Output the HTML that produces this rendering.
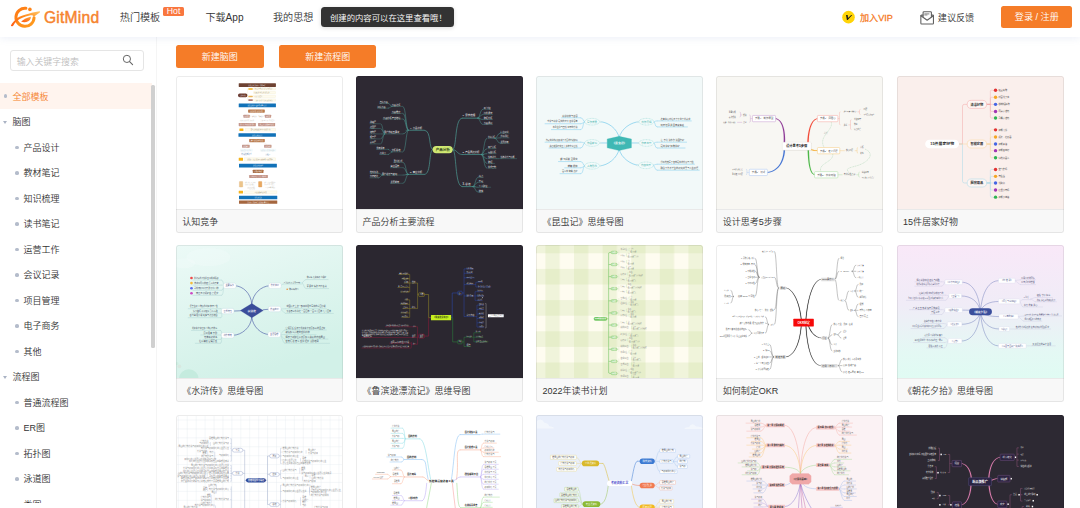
<!DOCTYPE html>
<html lang="zh-CN">
<head>
<meta charset="utf-8">
<title>GitMind 热门模板</title>
<style>
*{box-sizing:border-box;margin:0;padding:0}
html,body{width:1080px;height:508px;overflow:hidden;background:#fff}
body{font-family:"Liberation Sans","Noto Sans CJK SC",sans-serif;font-weight:350;color:#333;position:relative;-webkit-font-smoothing:antialiased}
.abs{position:absolute}
/* header */
#hdr{position:absolute;left:0;top:0;width:1080px;height:37px;background:#fff;box-shadow:0 2px 7px rgba(110,140,200,.115);z-index:10}
#hdr .t{position:absolute;white-space:nowrap;line-height:1}
.nav{font-size:10.1px;color:#333;top:13.0px}
#brand{left:43.9px;top:9.9px;font-size:15.6px;letter-spacing:.25px;color:#f6842e;font-weight:normal;-webkit-text-stroke:.45px #f6842e;}
#hot{position:absolute;left:163.4px;top:6.9px;width:20.4px;height:9.4px;background:#f9773f;border-radius:1.5px;color:#fff;font-size:8.7px;line-height:9.3px;text-align:center}
#tip{position:absolute;left:321.2px;top:6.9px;width:132.6px;height:20px;background:#333;border-radius:3.5px;color:#fff;font-size:8.35px;line-height:23px;padding-left:8.8px;white-space:nowrap;box-shadow:0 1px 4px rgba(0,0,0,.15)}
#login{position:absolute;left:1001.2px;top:5.6px;width:71.3px;height:22.5px;background:#f57c28;border-radius:2.5px;color:#fff;font-size:9.1px;line-height:23.7px;text-align:center;white-space:nowrap}
/* sidebar */
#side{position:absolute;left:0;top:37px;width:156.5px;height:471px;background:#fff;border-right:1px solid #f5f5f5}
#search{position:absolute;left:10.2px;top:50.2px;width:134px;height:20.6px;border:1px solid #e5e5e5;border-radius:3px;background:#fff}
#search span{position:absolute;left:5.5px;top:1.4px;line-height:18.5px;font-size:8.9px;color:#bdbdbd;white-space:nowrap}
#list{position:absolute;left:0;top:82.8px;width:151.6px;height:420.4px;overflow:hidden}
#list .it{position:relative;height:25.5px;line-height:27.3px;font-size:9px;color:#333;white-space:nowrap}
#list .it.c1{padding-left:12.6px}
#list .it.c2{padding-left:23.6px}
#list .it.on{background:#fff4ee;color:#f5822c;height:26.4px;line-height:28.2px}
#list .it.on i{top:11.6px}
#list .it i{position:absolute;top:11.1px;width:3.7px;height:3.7px;border-radius:50%;background:#b4bccb}
#list .it.c1 i{left:3.5px}
#list .it.c2 i{left:15.3px}
#list .it b{position:absolute;left:2.9px;top:11.4px;width:0;height:0;border-left:2.5px solid transparent;border-right:2.5px solid transparent;border-top:3px solid #aab3c4}
#sb{position:absolute;left:151.2px;top:85px;width:3.5px;height:263px;background:#d0d0d0;border-radius:1.5px}
/* main */
.btn{position:absolute;top:45.3px;height:22.5px;background:#f57c28;border-radius:2.5px;color:#fff;font-size:9px;line-height:24.6px;text-align:center;white-space:nowrap}
.card{position:absolute;width:167px;height:157px;border-radius:2.5px;background:#f8f8f8;overflow:hidden}
.card:after{content:"";position:absolute;left:0;top:0;right:0;bottom:0;border:1px solid rgba(0,0,0,.075);border-radius:2.5px;pointer-events:none}
.card .im{position:absolute;left:0;top:0;width:167px;height:133px;overflow:hidden}
.card .im svg{position:absolute;left:0;top:0;width:167px;height:133px;display:block}
.card .cap{position:absolute;left:0;top:133px;width:167px;height:24px;border-top:1px solid #e9e9e9;background:#f8f8f8;font-size:9px;line-height:24px;padding-left:6.3px;color:#333;white-space:nowrap}
</style>
</head>
<body>
<div id="hdr">
  <svg class="abs" id="logo" style="left:10px;top:5px" width="31" height="24" viewBox="0 -1.1 31 24"><defs><linearGradient id="lg1" x1="0" y1="1" x2="1" y2="0"><stop offset="0" stop-color="#ff5a12"/><stop offset=".55" stop-color="#ff8a1c"/><stop offset="1" stop-color="#ffc668"/></linearGradient><linearGradient id="lg2" x1="0" y1="0" x2="1" y2="1"><stop offset="0" stop-color="#ff7a14"/><stop offset="1" stop-color="#ff9c1e"/></linearGradient><linearGradient id="lg3" x1="0" y1="1" x2="1" y2="0"><stop offset="0" stop-color="#ff5c14"/><stop offset="1" stop-color="#ffa436"/></linearGradient></defs><path d="M15.9 2.2 A9.05 9.05 0 1 0 24.05 11.6" fill="none" stroke="url(#lg2)" stroke-width="3" stroke-linecap="round"/><path d="M0.9 19.4 C2 17 5 13.5 7.8 11.6 C12 9.3 18 7.4 29.4 5.2 C30.4 5.3 30.2 6 29.8 6.3 C27.5 7.8 25.5 9.4 23.8 10.6 C23 9.2 21.5 9 19.6 9.4 C14 10.8 10 12.5 7.8 14.2 C6 15.6 4.5 17.5 3.7 18.9 C3 20.4 1 20.6 0.9 19.4Z" fill="url(#lg1)"/><path d="M11.1 15.5 C13.6 13.2 17.4 11.4 20.9 10.7 C20.7 12.6 19.8 14.3 18.2 15.2 C16 16.3 13.2 16.3 11.1 15.5Z" fill="url(#lg3)"/><circle cx="19.9" cy="3.3" r="1.8" fill="#ff8418"/></svg>
  <div class="t" id="brand">GitMind</div>
  <div class="t nav" style="left:119.8px">热门模板</div>
  <div id="hot">Hot</div>
  <div class="t nav" style="left:205.4px">下载App</div>
  <div class="t nav" style="left:273px">我的思想</div>
  <div id="tip">创建的内容可以在这里查看哦！</div>
  <svg class="abs" id="vip" style="left:841px;top:10px" width="15" height="14" viewBox="0 0 15 14"><circle cx="7.5" cy="7.15" r="6.3" fill="#ffd407"/><path d="M5 4.9 L6.7 4.9 L7 8 L10.2 4.9 L11.2 4.9 L6.7 10.1 L5.9 10.1 Z" fill="#1a1a1a"/></svg>
  <div class="t" style="left:860px;top:13.6px;font-size:9.1px;color:#f57a24;-webkit-text-stroke:.28px #f57a24">加入VIP</div>
  <svg class="abs" id="mail" style="left:919.5px;top:10.5px" width="14.5" height="14" viewBox="0 0 14.5 14"><g fill="none" stroke="#606060" stroke-width="1.08" stroke-linejoin="round" stroke-linecap="round"><path d="M3.1 5.6 V1.6 Q3.1 .75 4 .75 H10.5 Q11.4 .75 11.4 1.6 V5.6"/><path d="M3 4.1 H1.5 Q.85 4.1 .85 4.8 V12.2 Q.85 12.95 1.6 12.95 H12.7 Q13.45 12.95 13.45 12.2 V4.8 Q13.45 4.1 12.8 4.1 H11.5"/><path d="M.9 4.7 L7.15 9.2 L13.4 4.7"/><path d="M4.7 2.9 H9" stroke-width=".8"/><path d="M4.7 4 H7" stroke-width=".7"/></g></svg>
  <div class="t" style="left:937.8px;top:13.6px;font-size:9.1px;color:#333">建议反馈</div>
  <div id="login">登录 / 注册</div>
</div>

<div id="side"></div>
<div id="search"><span>输入关键字搜索</span>
  <svg class="abs" style="left:110.8px;top:3.3px" width="12" height="12" viewBox="0 0 12 12"><circle cx="4.9" cy="4.9" r="3.6" fill="none" stroke="#666" stroke-width="1"/><path d="M7.6 7.6 L10.6 10.6" stroke="#666" stroke-width="1.1" stroke-linecap="round"/></svg>
</div>
<div id="list">
  <div class="it c1 on"><i></i>全部模板</div>
  <div class="it c1"><b></b>脑图</div>
  <div class="it c2"><i></i>产品设计</div>
  <div class="it c2"><i></i>教材笔记</div>
  <div class="it c2"><i></i>知识梳理</div>
  <div class="it c2"><i></i>读书笔记</div>
  <div class="it c2"><i></i>运营工作</div>
  <div class="it c2"><i></i>会议记录</div>
  <div class="it c2"><i></i>项目管理</div>
  <div class="it c2"><i></i>电子商务</div>
  <div class="it c2"><i></i>其他</div>
  <div class="it c1"><b></b>流程图</div>
  <div class="it c2"><i></i>普通流程图</div>
  <div class="it c2"><i></i>ER图</div>
  <div class="it c2"><i></i>拓扑图</div>
  <div class="it c2"><i></i>泳道图</div>
  <div class="it c2"><i></i>类图</div>
</div>
<div id="sb"></div>

<div class="btn" style="left:175.8px;width:87.8px">新建脑图</div>
<div class="btn" style="left:279.2px;width:97.3px">新建流程图</div>

<div class="card" style="left:176.00px;top:76.00px"><div class="im"><svg viewBox="-1 -1 167 133" font-family='"Liberation Sans","Noto Sans CJK SC",sans-serif'><rect x="-1" y="-1" width="167" height="133" fill="#ffffff"/><rect x="61.73" y="6.36" width="37.19" height="3.61" fill="#6e4232" rx="0.4"/><text x="79.99" y="8.66" font-size="1.4" fill="#ffffff" text-anchor="middle">认知竞争 发现自己 超越对手</text><rect x="61.06" y="16.39" width="9.36" height="3.75" fill="#6b3a2e" rx="1.61"/><text x="65.74" y="18.79" font-size="1.47" fill="#ffffff" text-anchor="middle">竞争层次</text><path d="M71.36 11.84L70.69 11.84L70.69 23.08L71.36 23.08" stroke="#f0e8c4" stroke-width="0.35" fill="none" stroke-linejoin="round"/><rect x="76.44" y="10.77" width="22.07" height="2.14" fill="#fefbee" rx="0.27" stroke="#f0e8c4" stroke-width="0.25"/><rect x="71.36" y="11.17" width="4.41" height="1.47" fill="#f5b31c" rx="0.27"/><rect x="76.44" y="14.52" width="22.07" height="2.14" fill="#fefbee" rx="0.27" stroke="#f0e8c4" stroke-width="0.25"/><rect x="76.44" y="18.26" width="22.07" height="2.14" fill="#fefbee" rx="0.27" stroke="#f0e8c4" stroke-width="0.25"/><rect x="71.36" y="18.67" width="4.41" height="1.47" fill="#ecb757" rx="0.27"/><rect x="76.44" y="21.88" width="22.07" height="2.27" fill="#fefbee" rx="0.27" stroke="#f0e8c4" stroke-width="0.25"/><rect x="71.36" y="22.28" width="4.41" height="1.61" fill="#b27a72" rx="0.27"/><text x="77.25" y="12.23" font-size="1.09" fill="#8a7a5a">产品竞争 价格竞争 渠道竞争 品牌竞争</text><text x="77.25" y="16.03" font-size="1.21" fill="#8a7a5a">资源竞争 标准竞争 认知竞争</text><text x="77.25" y="19.8" font-size="1.3" fill="#a09070">心智之战 定位</text><text x="78.05" y="23.55" font-size="1.31" fill="#a09a8a">占据心智 成为首选 形成护城河</text><rect x="61.73" y="26.42" width="37.19" height="3.75" fill="#1272b8" rx="0.27"/><text x="80.12" y="28.8" font-size="1.39" fill="#ffffff" text-anchor="middle">认知竞争的一般规律与基本方法</text><rect x="71.09" y="32.44" width="16.72" height="3.34" fill="#b97c50" rx="0.67"/><text x="79.59" y="34.67" font-size="1.52" fill="#ffffff" text-anchor="middle">认知优势 认知劣势</text><rect x="66.41" y="37.8" width="6.29" height="2.94" fill="#c4968a" rx="0.4"/><rect x="87.82" y="37.8" width="6.29" height="2.94" fill="#c4968a" rx="0.4"/><text x="69.62" y="39.78" font-size="1.43" fill="#ffffff" text-anchor="middle">有优势</text><text x="91.03" y="39.78" font-size="1.43" fill="#ffffff" text-anchor="middle">无优势</text><text x="80.46" y="39.69" font-size="1.16" fill="#9a8a80" text-anchor="middle">强化认知 → 重建认知</text><path d="M72.7 39.27L74.57 39.27" stroke="#d8c8c0" stroke-width="0.3" fill="none"/><path d="M86.08 39.27L87.82 39.27" stroke="#d8c8c0" stroke-width="0.3" fill="none"/><text x="62.8" y="43.82" font-size="1.51" fill="#c8c4b8">占据 品类代表 领导者</text><text x="83.13" y="43.84" font-size="1.56" fill="#c8c4b8">关联 对立面 重新定位</text><rect x="61.73" y="46.09" width="17.12" height="3.08" fill="#c4968a" rx="0.4"/><rect x="81.13" y="46.09" width="16.99" height="3.08" fill="#c4968a" rx="0.4"/><text x="70.42" y="48.13" font-size="1.39" fill="#ffffff" text-anchor="middle">第一步 找到认知优势位</text><text x="89.76" y="48.18" font-size="1.53" fill="#ffffff" text-anchor="middle">第二步 持续强化认知</text><rect x="62.4" y="51.44" width="4.01" height="2.68" fill="#f5b31c" rx="0.27"/><rect x="68.15" y="51.44" width="30.37" height="2.68" fill="#fefbee" rx="0.27" stroke="#f0e8c4" stroke-width="0.25"/><text x="83.47" y="53.22" font-size="1.21" fill="#7a6a4a" text-anchor="middle">商业竞争的终极战场是心智认知之战</text><rect x="61.46" y="56.26" width="37.46" height="3.61" fill="#1272b8" rx="0.27"/><text x="80.32" y="58.6" font-size="1.49" fill="#ffffff" text-anchor="middle">认知竞争的方法</text><rect x="72.16" y="61.88" width="15.65" height="3.34" fill="#b97c50" rx="0.67"/><text x="80.12" y="64.08" font-size="1.48" fill="#ffffff" text-anchor="middle">建立认知 强化认知</text><path d="M73.5 65.41C71.76 65.94 70.42 66.75 69.76 67.82" stroke="#e8ddd4" stroke-width="0.3" fill="none" stroke-linecap="round"/><path d="M86.08 65.41C87.82 65.94 89.15 66.75 90.09 67.82" stroke="#e8ddd4" stroke-width="0.3" fill="none" stroke-linecap="round"/><rect x="65.07" y="67.68" width="7.63" height="3.08" fill="#c4968a" rx="0.4"/><rect x="87.15" y="67.68" width="7.36" height="3.08" fill="#c4968a" rx="0.4"/><text x="68.95" y="69.73" font-size="1.41" fill="#ffffff" text-anchor="middle">认知建立</text><text x="90.89" y="69.7" font-size="1.34" fill="#ffffff" text-anchor="middle">认知强化</text><rect x="63.07" y="71.83" width="12.71" height="2.68" fill="#f3fafb" rx="0.27"/><rect x="83.13" y="71.83" width="16.05" height="2.68" fill="#f3fafb" rx="0.27"/><text x="63.87" y="73.67" font-size="1.38" fill="#c0cdd4">品类 定位 信任状</text><text x="83.94" y="73.68" font-size="1.43" fill="#c0cdd4">品牌故事 传播 视觉锤</text><text x="64.14" y="76.84" font-size="1.28" fill="#5a7fae">抢占先机 聚焦品类</text><text x="64.14" y="78.34" font-size="1.37" fill="#7a96ba">打造爆品 代言</text><text x="88.48" y="77.61" font-size="1.21" fill="#5a7fae">持续投入</text><rect x="61.73" y="80.79" width="4.28" height="2.94" fill="#f5b31c" rx="0.27"/><rect x="67.08" y="80.79" width="31.44" height="2.94" fill="#fefbee" rx="0.27" stroke="#f0e8c4" stroke-width="0.25"/><text x="83.0" y="82.73" font-size="1.32" fill="#7a6a4a" text-anchor="middle">认知大于事实 消费者以品类思考 以品牌表达</text><rect x="62.0" y="86.68" width="37.86" height="3.75" fill="#1272b8" rx="0.27"/><text x="80.99" y="89.07" font-size="1.45" fill="#ffffff" text-anchor="middle">认知竞争的案例</text><rect x="75.78" y="92.83" width="10.7" height="3.08" fill="#a86c44" rx="0.4"/><text x="81.19" y="94.86" font-size="1.36" fill="#ffffff" text-anchor="middle">经典案例解析</text><rect x="72.16" y="98.05" width="18.73" height="2.94" fill="#c4968a" rx="0.4"/><text x="81.53" y="99.98" font-size="1.26" fill="#ffffff" text-anchor="middle">王老吉 瓜子二手车 飞鹤奶粉</text><rect x="62.4" y="104.47" width="3.34" height="5.62" fill="#ecc48a" rx="0.4" stroke="#dcae6c" stroke-width="0.3"/><rect x="81.53" y="104.47" width="3.34" height="5.62" fill="#e8a860" rx="0.4" stroke="#d89850" stroke-width="0.3"/><text x="67.88" y="106.46" font-size="1.06" fill="#b0aca0">案例一 怕上火喝王老吉</text><text x="67.88" y="108.11" font-size="1.55" fill="#c8c4b8">品类开创 聚焦</text><text x="87.15" y="106.45" font-size="1.02" fill="#b0aca0">案例二 没有中间商赚差价</text><text x="87.15" y="108.06" font-size="1.42" fill="#c8c4b8">差异化 直击痛点</text><text x="70.42" y="111.58" font-size="1.91" fill="#c8c4b8">持续传播</text><text x="88.48" y="111.44" font-size="1.53" fill="#c8c4b8">心智预售 高频</text><rect x="61.73" y="113.84" width="4.28" height="2.68" fill="#f5b31c" rx="0.27"/><rect x="67.08" y="113.84" width="32.78" height="2.68" fill="#fefbee" rx="0.27" stroke="#f0e8c4" stroke-width="0.25"/><text x="83.67" y="115.59" font-size="1.17" fill="#7a6a4a" text-anchor="middle">小结 持续强化认知优势</text><rect x="62.0" y="118.79" width="38.26" height="3.48" fill="#1272b8" rx="0.27"/><text x="81.13" y="120.96" font-size="1.2" fill="#ffffff" text-anchor="middle">认知竞争总结</text><rect x="62.0" y="123.47" width="38.26" height="3.34" fill="#a5663e" rx="0.27"/><text x="81.26" y="125.61" font-size="1.3" fill="#ffffff" text-anchor="middle">发现自己 超越对手 认知制胜 基业长青</text></svg></div><div class="cap">认知竞争</div></div>
<div class="card" style="left:356.20px;top:76.00px"><div class="im"><svg viewBox="-1 -1 167 133" font-family='"Liberation Sans","Noto Sans CJK SC",sans-serif'><rect x="-1" y="-1" width="167" height="133" fill="#2e2933"/><path d="M75.76 72.52C71.43 72.52 74.68 53.26 67.53 53.26" stroke="#4c9a92" stroke-width="0.7" fill="none" stroke-linecap="round"/><path d="M75.76 72.52C71.43 72.52 74.68 97.42 67.53 97.42" stroke="#4c9a92" stroke-width="0.7" fill="none" stroke-linecap="round"/><text x="53.03" y="51.74" font-size="2.4" fill="#ffffff">4. 竞品分析</text><path d="M52.6 53.26L67.1 53.26" stroke="#4c9a92" stroke-width="0.35" fill="none"/><path d="M48.7 53.26L67.53 53.26" stroke="#4c9a92" stroke-width="0.55" fill="none"/><path d="M51.3 53.26C48.7 53.26 49.13 29.45 46.1 29.45" stroke="#4c9a92" stroke-width="0.5" fill="none" stroke-linecap="round"/><text x="34.63" y="28.94" font-size="2.2" fill="#ffffff">竞品选择</text><path d="M34.2 29.45L45.89 29.45" stroke="#4c9a92" stroke-width="0.35" fill="none"/><path d="M51.3 53.26C48.7 53.26 49.13 36.38 46.1 36.38" stroke="#4c9a92" stroke-width="0.5" fill="none" stroke-linecap="round"/><text x="34.63" y="35.87" font-size="2.2" fill="#ffffff">竞品维度</text><path d="M34.2 36.38L45.89 36.38" stroke="#4c9a92" stroke-width="0.35" fill="none"/><path d="M51.3 53.26C48.7 53.26 49.13 42.0 46.1 42.0" stroke="#4c9a92" stroke-width="0.5" fill="none" stroke-linecap="round"/><text x="25.97" y="41.5" font-size="2.2" fill="#ffffff">竞品分析产出结论</text><path d="M25.54 42.0L45.89 42.0" stroke="#4c9a92" stroke-width="0.35" fill="none"/><path d="M51.3 53.26C48.7 53.26 49.13 56.94 46.1 56.94" stroke="#4c9a92" stroke-width="0.5" fill="none" stroke-linecap="round"/><text x="27.06" y="56.43" font-size="2.2" fill="#ffffff">用户体验五要素</text><path d="M26.62 56.94L45.89 56.94" stroke="#4c9a92" stroke-width="0.35" fill="none"/><path d="M51.3 53.26C48.7 53.26 49.13 74.9 46.1 74.9" stroke="#4c9a92" stroke-width="0.5" fill="none" stroke-linecap="round"/><text x="34.63" y="74.4" font-size="2.2" fill="#ffffff">分析总结</text><path d="M34.2 74.9L45.89 74.9" stroke="#4c9a92" stroke-width="0.35" fill="none"/><path d="M35.06 29.45C32.9 29.45 33.33 26.2 31.17 26.2" stroke="#4c9a92" stroke-width="0.45" fill="none" stroke-linecap="round"/><text x="22.73" y="25.62" font-size="2.0" fill="#ffffff">直接竞品</text><path d="M22.29 26.2L31.82 26.2" stroke="#4c9a92" stroke-width="0.35" fill="none"/><path d="M35.06 29.45C32.9 29.45 33.33 31.18 31.17 31.18" stroke="#4c9a92" stroke-width="0.45" fill="none" stroke-linecap="round"/><text x="20.56" y="30.6" font-size="2.0" fill="#ffffff">间接竞品</text><path d="M20.13 31.18L31.82 31.18" stroke="#4c9a92" stroke-width="0.35" fill="none"/><path d="M27.71 56.94C25.54 56.94 25.97 46.77 23.81 46.77" stroke="#4c9a92" stroke-width="0.45" fill="none" stroke-linecap="round"/><text x="12.99" y="46.19" font-size="2.0" fill="#ffffff">战略层</text><path d="M12.55 46.77L23.16 46.77" stroke="#4c9a92" stroke-width="0.35" fill="none"/><path d="M27.71 56.94C25.54 56.94 25.97 51.53 23.81 51.53" stroke="#4c9a92" stroke-width="0.45" fill="none" stroke-linecap="round"/><text x="12.99" y="50.95" font-size="2.0" fill="#ffffff">范围层</text><path d="M12.55 51.53L23.16 51.53" stroke="#4c9a92" stroke-width="0.35" fill="none"/><path d="M27.71 56.94C25.54 56.94 25.97 56.94 23.81 56.94" stroke="#4c9a92" stroke-width="0.45" fill="none" stroke-linecap="round"/><text x="12.99" y="56.36" font-size="2.0" fill="#ffffff">结构层</text><path d="M12.55 56.94L23.16 56.94" stroke="#4c9a92" stroke-width="0.35" fill="none"/><path d="M27.71 56.94C25.54 56.94 25.97 61.92 23.81 61.92" stroke="#4c9a92" stroke-width="0.45" fill="none" stroke-linecap="round"/><text x="12.99" y="61.34" font-size="2.0" fill="#ffffff">框架层</text><path d="M12.55 61.92L23.16 61.92" stroke="#4c9a92" stroke-width="0.35" fill="none"/><path d="M27.71 56.94C25.54 56.94 25.97 66.9 23.81 66.9" stroke="#4c9a92" stroke-width="0.45" fill="none" stroke-linecap="round"/><text x="12.99" y="66.32" font-size="2.0" fill="#ffffff">表现层</text><path d="M12.55 66.9L23.16 66.9" stroke="#4c9a92" stroke-width="0.35" fill="none"/><path d="M35.06 74.9C32.9 74.9 33.33 72.31 31.17 72.31" stroke="#4c9a92" stroke-width="0.45" fill="none" stroke-linecap="round"/><text x="19.48" y="71.73" font-size="2.0" fill="#ffffff">优势劣势</text><path d="M19.05 72.31L31.82 72.31" stroke="#4c9a92" stroke-width="0.35" fill="none"/><path d="M35.06 74.9C32.9 74.9 33.33 77.5 31.17 77.5" stroke="#4c9a92" stroke-width="0.45" fill="none" stroke-linecap="round"/><text x="22.73" y="76.92" font-size="2.0" fill="#ffffff">改进点</text><path d="M22.29 77.5L31.82 77.5" stroke="#4c9a92" stroke-width="0.35" fill="none"/><text x="53.03" y="95.68" font-size="2.4" fill="#ffffff">5. 商业分析</text><path d="M52.6 97.2L67.1 97.2" stroke="#4c9a92" stroke-width="0.35" fill="none"/><path d="M48.7 97.42L67.53 97.42" stroke="#4c9a92" stroke-width="0.55" fill="none"/><path d="M51.3 97.42C48.7 97.42 49.13 85.29 46.1 85.29" stroke="#4c9a92" stroke-width="0.5" fill="none" stroke-linecap="round"/><text x="36.8" y="84.78" font-size="2.17" fill="#ffffff">盈利模式</text><path d="M36.36 85.29L45.89 85.29" stroke="#4c9a92" stroke-width="0.35" fill="none"/><path d="M51.3 97.42C48.7 97.42 49.13 90.71 46.1 90.71" stroke="#4c9a92" stroke-width="0.5" fill="none" stroke-linecap="round"/><text x="33.55" y="90.2" font-size="2.2" fill="#ffffff">商业画布</text><path d="M33.12 90.71L45.89 90.71" stroke="#4c9a92" stroke-width="0.35" fill="none"/><path d="M51.3 97.42C48.7 97.42 49.13 98.06 46.1 98.06" stroke="#4c9a92" stroke-width="0.5" fill="none" stroke-linecap="round"/><text x="24.89" y="97.56" font-size="2.2" fill="#ffffff">用户增长与变现</text><path d="M24.46 98.06L45.89 98.06" stroke="#4c9a92" stroke-width="0.35" fill="none"/><path d="M51.3 97.42C48.7 97.42 49.13 106.29 46.1 106.29" stroke="#4c9a92" stroke-width="0.5" fill="none" stroke-linecap="round"/><text x="33.55" y="105.78" font-size="2.2" fill="#ffffff">发展前景</text><path d="M33.12 106.29L45.89 106.29" stroke="#4c9a92" stroke-width="0.35" fill="none"/><path d="M25.54 98.06C23.38 98.06 23.81 96.12 21.65 96.12" stroke="#4c9a92" stroke-width="0.45" fill="none" stroke-linecap="round"/><text x="12.99" y="95.54" font-size="2.0" fill="#ffffff">拉新渠道</text><path d="M12.55 96.12L22.08 96.12" stroke="#4c9a92" stroke-width="0.35" fill="none"/><path d="M25.54 98.06C23.38 98.06 23.81 100.88 21.65 100.88" stroke="#4c9a92" stroke-width="0.45" fill="none" stroke-linecap="round"/><text x="12.99" y="100.3" font-size="2.0" fill="#ffffff">留存转化</text><path d="M12.55 100.88L22.08 100.88" stroke="#4c9a92" stroke-width="0.35" fill="none"/><path d="M95.74 72.56C100.07 72.56 97.26 41.16 105.06 41.16" stroke="#4c9a92" stroke-width="0.7" fill="none" stroke-linecap="round"/><path d="M95.74 72.56C100.07 72.56 100.07 77.54 105.06 77.54" stroke="#4c9a92" stroke-width="0.7" fill="none" stroke-linecap="round"/><path d="M95.74 72.56C100.07 72.56 97.26 109.6 105.06 109.6" stroke="#4c9a92" stroke-width="0.7" fill="none" stroke-linecap="round"/><text x="105.49" y="39.45" font-size="2.48" fill="#ffffff">1. 需求挖掘</text><path d="M105.06 41.16L120.0 41.16" stroke="#4c9a92" stroke-width="0.35" fill="none"/><path d="M105.06 41.16L123.25 41.16" stroke="#4c9a92" stroke-width="0.55" fill="none"/><path d="M120.65 41.16C123.25 41.16 122.82 32.28 125.85 32.28" stroke="#4c9a92" stroke-width="0.5" fill="none" stroke-linecap="round"/><text x="126.71" y="31.6" font-size="1.73" fill="#ffffff">用户访谈</text><path d="M126.28 32.28L134.08 32.28" stroke="#4c9a92" stroke-width="0.35" fill="none"/><path d="M120.65 41.16C123.25 41.16 122.82 37.47 125.85 37.47" stroke="#4c9a92" stroke-width="0.5" fill="none" stroke-linecap="round"/><text x="126.71" y="36.96" font-size="2.17" fill="#ffffff">问卷调查</text><path d="M126.28 37.47L135.81 37.47" stroke="#4c9a92" stroke-width="0.35" fill="none"/><path d="M120.65 41.16C123.25 41.16 122.82 42.46 125.85 42.46" stroke="#4c9a92" stroke-width="0.5" fill="none" stroke-linecap="round"/><text x="126.71" y="41.94" font-size="2.17" fill="#ffffff">数据分析</text><path d="M126.28 42.46L135.81 42.46" stroke="#4c9a92" stroke-width="0.35" fill="none"/><path d="M120.65 41.16C123.25 41.16 122.82 47.44 125.85 47.44" stroke="#4c9a92" stroke-width="0.5" fill="none" stroke-linecap="round"/><text x="126.71" y="46.92" font-size="2.17" fill="#ffffff">竞品调研</text><path d="M126.28 47.44L135.81 47.44" stroke="#4c9a92" stroke-width="0.35" fill="none"/><text x="105.49" y="76.02" font-size="2.4" fill="#ffffff">2. 产品周边分析</text><path d="M105.06 77.54L124.33 77.54" stroke="#4c9a92" stroke-width="0.35" fill="none"/><path d="M105.06 77.54L127.15 77.54" stroke="#4c9a92" stroke-width="0.55" fill="none"/><path d="M124.55 77.54C127.15 77.54 126.71 61.3 129.75 61.3" stroke="#4c9a92" stroke-width="0.5" fill="none" stroke-linecap="round"/><text x="131.05" y="60.62" font-size="1.73" fill="#ffffff">市场分析</text><path d="M130.61 61.3L138.41 61.3" stroke="#4c9a92" stroke-width="0.35" fill="none"/><path d="M124.55 77.54C127.15 77.54 126.71 71.7 129.75 71.7" stroke="#4c9a92" stroke-width="0.5" fill="none" stroke-linecap="round"/><text x="131.05" y="71.12" font-size="2.0" fill="#ffffff">用户分析</text><path d="M130.61 71.7L139.49 71.7" stroke="#4c9a92" stroke-width="0.35" fill="none"/><path d="M124.55 77.54C127.15 77.54 126.71 76.68 129.75 76.68" stroke="#4c9a92" stroke-width="0.5" fill="none" stroke-linecap="round"/><text x="131.05" y="76.1" font-size="2.0" fill="#ffffff">运营分析</text><path d="M130.61 76.68L139.49 76.68" stroke="#4c9a92" stroke-width="0.35" fill="none"/><path d="M124.55 77.54C127.15 77.54 126.71 81.66 129.75 81.66" stroke="#4c9a92" stroke-width="0.5" fill="none" stroke-linecap="round"/><text x="131.05" y="81.08" font-size="2.0" fill="#ffffff">版本迭代</text><path d="M130.61 81.66L139.49 81.66" stroke="#4c9a92" stroke-width="0.35" fill="none"/><path d="M124.55 77.54C127.15 77.54 126.71 86.42 129.75 86.42" stroke="#4c9a92" stroke-width="0.5" fill="none" stroke-linecap="round"/><text x="131.05" y="85.91" font-size="2.2" fill="#ffffff">数据</text><path d="M130.61 86.42L137.98 86.42" stroke="#4c9a92" stroke-width="0.35" fill="none"/><path d="M124.55 77.54C127.15 77.54 126.71 91.19 129.75 91.19" stroke="#4c9a92" stroke-width="0.5" fill="none" stroke-linecap="round"/><text x="131.05" y="90.61" font-size="2.0" fill="#ffffff">技术架构</text><path d="M130.61 91.19L139.49 91.19" stroke="#4c9a92" stroke-width="0.35" fill="none"/><path d="M137.98 61.3C140.58 61.3 140.14 56.1 143.18 56.1" stroke="#4c9a92" stroke-width="0.5" fill="none" stroke-linecap="round"/><text x="143.39" y="55.52" font-size="2.0" fill="#ffffff">行业现状</text><path d="M142.96 56.1L152.49 56.1" stroke="#4c9a92" stroke-width="0.35" fill="none"/><path d="M137.98 61.3C140.58 61.3 140.14 60.87 143.18 60.87" stroke="#4c9a92" stroke-width="0.5" fill="none" stroke-linecap="round"/><text x="143.39" y="60.29" font-size="2.0" fill="#ffffff">市场规模</text><path d="M142.96 60.87L152.49 60.87" stroke="#4c9a92" stroke-width="0.35" fill="none"/><path d="M137.98 61.3C140.58 61.3 140.14 66.28 143.18 66.28" stroke="#4c9a92" stroke-width="0.5" fill="none" stroke-linecap="round"/><text x="143.39" y="65.7" font-size="2.0" fill="#ffffff">发展趋势</text><path d="M142.96 66.28L152.49 66.28" stroke="#4c9a92" stroke-width="0.35" fill="none"/><path d="M139.06 81.66L142.74 81.66" stroke="#4c9a92" stroke-width="0.45" fill="none"/><text x="143.39" y="81.08" font-size="2.0" fill="#ffffff">版本迭代与功能</text><path d="M142.96 81.66L160.07 81.66" stroke="#4c9a92" stroke-width="0.35" fill="none"/><text x="105.49" y="108.16" font-size="2.6" fill="#ffffff">3. 总结</text><path d="M105.06 109.6L115.67 109.6" stroke="#4c9a92" stroke-width="0.35" fill="none"/><path d="M105.06 109.6L118.48 109.6" stroke="#4c9a92" stroke-width="0.55" fill="none"/><path d="M115.88 109.6C118.48 109.6 118.05 100.29 121.08 100.29" stroke="#4c9a92" stroke-width="0.5" fill="none" stroke-linecap="round"/><text x="121.73" y="99.77" font-size="2.17" fill="#ffffff">亮点</text><path d="M121.3 100.29L126.5 100.29" stroke="#4c9a92" stroke-width="0.35" fill="none"/><path d="M115.88 109.6C118.48 109.6 118.05 105.27 121.08 105.27" stroke="#4c9a92" stroke-width="0.5" fill="none" stroke-linecap="round"/><text x="121.73" y="104.75" font-size="2.17" fill="#ffffff">不足</text><path d="M121.3 105.27L126.5 105.27" stroke="#4c9a92" stroke-width="0.35" fill="none"/><path d="M115.88 109.6C118.48 109.6 118.05 110.25 121.08 110.25" stroke="#4c9a92" stroke-width="0.5" fill="none" stroke-linecap="round"/><text x="121.73" y="109.74" font-size="2.2" fill="#ffffff">个人建议</text><path d="M121.3 110.25L134.08 110.25" stroke="#4c9a92" stroke-width="0.35" fill="none"/><path d="M115.88 109.6C118.48 109.6 118.05 115.23 121.08 115.23" stroke="#4c9a92" stroke-width="0.5" fill="none" stroke-linecap="round"/><text x="121.73" y="114.71" font-size="2.17" fill="#ffffff">收获</text><path d="M121.3 115.23L126.5 115.23" stroke="#4c9a92" stroke-width="0.35" fill="none"/><rect x="75.6" y="68.88" width="20.14" height="7.36" fill="#cfe872" rx="3.68"/><text x="85.78" y="73.85" font-size="3.57" fill="#3a4a20" text-anchor="middle" font-weight="bold">产品分析</text></svg></div><div class="cap">产品分析主要流程</div></div>
<div class="card" style="left:536.30px;top:76.00px"><div class="im"><svg viewBox="-1 -1 167 133" font-family='"Liberation Sans","Noto Sans CJK SC",sans-serif'><rect x="-1" y="-1" width="167" height="133" fill="#f2f9f9"/><path d="M82.17 60.78C80.28 51.33 70.83 45.04 63.28 44.72" stroke="#86d0ee" stroke-width="0.8" fill="none" stroke-linecap="round"/><path d="M82.17 60.78C84.05 51.33 94.44 45.04 102.0 44.72" stroke="#86d0ee" stroke-width="0.8" fill="none" stroke-linecap="round"/><path d="M82.17 72.11C80.28 81.24 70.83 88.32 63.28 88.8" stroke="#86d0ee" stroke-width="0.8" fill="none" stroke-linecap="round"/><path d="M82.17 72.11C84.05 81.24 94.44 87.85 101.53 88.32" stroke="#86d0ee" stroke-width="0.8" fill="none" stroke-linecap="round"/><path d="M62.96 65.97L70.36 65.97" stroke="#86d0ee" stroke-width="0.8" fill="none"/><path d="M94.44 65.97L102.0 65.97" stroke="#86d0ee" stroke-width="0.8" fill="none"/><path d="M47.69 44.72C45.49 44.72 46.91 40.79 43.76 40.79" stroke="#86d0ee" stroke-width="0.55" fill="none" stroke-linecap="round"/><path d="M24.24 40.79L43.76 40.79" stroke="#86d0ee" stroke-width="0.55" fill="none"/><text x="40.61" y="39.53" font-size="2.2" fill="#333333" text-anchor="end">科学精神与哲思</text><path d="M47.69 44.72C45.49 44.72 46.91 46.77 43.76 46.77" stroke="#86d0ee" stroke-width="0.55" fill="none" stroke-linecap="round"/><path d="M7.71 46.77L43.76 46.77" stroke="#86d0ee" stroke-width="0.55" fill="none"/><text x="40.61" y="45.48" font-size="2.11" fill="#333333" text-anchor="end">文学与科学 昆虫的史诗 哲学思考</text><path d="M47.69 44.72C45.49 44.72 46.91 52.59 43.76 52.59" stroke="#86d0ee" stroke-width="0.55" fill="none" stroke-linecap="round"/><path d="M14.01 52.59L43.76 52.59" stroke="#86d0ee" stroke-width="0.55" fill="none"/><text x="40.61" y="51.29" font-size="2.04" fill="#333333" text-anchor="end">尊重生命与自然 观察的方法</text><path d="M47.69 65.97C45.49 65.97 46.91 65.18 43.76 65.18" stroke="#86d0ee" stroke-width="0.55" fill="none" stroke-linecap="round"/><path d="M7.71 65.18L43.76 65.18" stroke="#86d0ee" stroke-width="0.55" fill="none"/><text x="40.61" y="63.82" font-size="1.88" fill="#333333" text-anchor="end">为昆虫学的研究积累了珍贵的文献资料</text><path d="M47.69 65.97C45.49 65.97 46.91 71.01 43.76 71.01" stroke="#86d0ee" stroke-width="0.55" fill="none" stroke-linecap="round"/><path d="M11.65 71.01L43.76 71.01" stroke="#86d0ee" stroke-width="0.55" fill="none"/><text x="40.61" y="69.68" font-size="2.0" fill="#333333" text-anchor="end">先后被翻译成五十多种文字出版</text><path d="M47.69 88.8C45.49 88.8 46.91 84.55 43.76 84.55" stroke="#86d0ee" stroke-width="0.55" fill="none" stroke-linecap="round"/><path d="M21.09 84.55L43.76 84.55" stroke="#86d0ee" stroke-width="0.55" fill="none"/><text x="40.61" y="83.32" font-size="2.29" fill="#333333" text-anchor="end">蝉 红蚂蚁 圣甲虫</text><path d="M47.69 88.8C45.49 88.8 46.91 90.84 43.76 90.84" stroke="#86d0ee" stroke-width="0.55" fill="none" stroke-linecap="round"/><path d="M27.39 90.84L43.76 90.84" stroke="#86d0ee" stroke-width="0.55" fill="none"/><text x="40.61" y="89.63" font-size="2.3" fill="#333333" text-anchor="end">螳螂 蟋蟀</text><path d="M47.69 88.8C45.49 88.8 46.91 96.67 43.76 96.67" stroke="#86d0ee" stroke-width="0.55" fill="none" stroke-linecap="round"/><path d="M22.67 96.67L43.76 96.67" stroke="#86d0ee" stroke-width="0.55" fill="none"/><text x="40.61" y="95.37" font-size="2.09" fill="#333333" text-anchor="end">萤火虫 蜘蛛 黄蜂</text><path d="M116.8 44.72C118.68 44.72 117.42 43.93 119.94 43.93" stroke="#86d0ee" stroke-width="0.55" fill="none" stroke-linecap="round"/><path d="M119.94 43.93L154.73 43.93" stroke="#86d0ee" stroke-width="0.55" fill="none"/><text x="123.56" y="42.66" font-size="2.14" fill="#333333">这本书历时近三十年共十卷著成</text><path d="M116.8 44.72C118.68 44.72 117.42 49.92 119.94 49.92" stroke="#86d0ee" stroke-width="0.55" fill="none" stroke-linecap="round"/><path d="M119.94 49.92L150.79 49.92" stroke="#86d0ee" stroke-width="0.55" fill="none"/><text x="123.56" y="48.7" font-size="2.3" fill="#333333">观察记录 并且亲身实验</text><path d="M116.8 65.97C118.68 65.97 117.42 65.18 119.94 65.18" stroke="#86d0ee" stroke-width="0.55" fill="none" stroke-linecap="round"/><path d="M119.94 65.18L150.01 65.18" stroke="#86d0ee" stroke-width="0.55" fill="none"/><text x="123.56" y="63.92" font-size="2.16" fill="#333333">让-亨利·法布尔 法国作家</text><path d="M116.8 65.97C118.68 65.97 117.42 71.01 119.94 71.01" stroke="#86d0ee" stroke-width="0.55" fill="none" stroke-linecap="round"/><path d="M119.94 71.01L148.43 71.01" stroke="#86d0ee" stroke-width="0.55" fill="none"/><text x="123.56" y="69.79" font-size="2.3" fill="#333333">昆虫学家 博物学家</text><path d="M116.17 88.32C118.05 88.32 117.42 87.22 119.94 87.22" stroke="#86d0ee" stroke-width="0.55" fill="none" stroke-linecap="round"/><path d="M119.94 87.22L157.88 87.22" stroke="#86d0ee" stroke-width="0.55" fill="none"/><text x="123.56" y="85.92" font-size="2.07" fill="#333333">详细地描写了各种昆虫的外形与习性</text><path d="M116.17 88.32C118.05 88.32 117.42 93.2 119.94 93.2" stroke="#86d0ee" stroke-width="0.55" fill="none" stroke-linecap="round"/><path d="M119.94 93.2L162.6 93.2" stroke="#86d0ee" stroke-width="0.55" fill="none"/><text x="123.56" y="91.96" font-size="2.22" fill="#333333">融合了作者毕生的研究成果与人生感悟</text><ellipse cx="55.09" cy="44.72" rx="7.4" ry="3.31" fill="#f4fbfb" stroke="#86d4d0" stroke-width=".45" stroke-dasharray="1 .5"/><text x="55.09" y="45.63" font-size="2.52" fill="#3db0aa" text-anchor="middle">写作背景</text><ellipse cx="55.09" cy="65.97" rx="7.4" ry="3.31" fill="#f4fbfb" stroke="#86d4d0" stroke-width=".45" stroke-dasharray="1 .5"/><text x="55.09" y="66.88" font-size="2.52" fill="#3db0aa" text-anchor="middle">作品影响</text><ellipse cx="55.09" cy="88.8" rx="7.4" ry="3.31" fill="#f4fbfb" stroke="#86d4d0" stroke-width=".45" stroke-dasharray="1 .5"/><text x="55.09" y="89.71" font-size="2.52" fill="#3db0aa" text-anchor="middle">人物形象</text><ellipse cx="109.4" cy="44.72" rx="7.4" ry="3.31" fill="#f4fbfb" stroke="#86d4d0" stroke-width=".45" stroke-dasharray="1 .5"/><text x="109.4" y="45.63" font-size="2.52" fill="#3db0aa" text-anchor="middle">创作历程</text><ellipse cx="109.4" cy="65.97" rx="7.4" ry="3.31" fill="#f4fbfb" stroke="#86d4d0" stroke-width=".45" stroke-dasharray="1 .5"/><text x="109.4" y="66.88" font-size="2.52" fill="#3db0aa" text-anchor="middle">作者简介</text><ellipse cx="108.92" cy="88.32" rx="7.4" ry="3.31" fill="#f4fbfb" stroke="#86d4d0" stroke-width=".45" stroke-dasharray="1 .5"/><text x="108.92" y="89.23" font-size="2.52" fill="#3db0aa" text-anchor="middle">内容简介</text><circle cx="63.75" cy="44.72" r="0.63" fill="#f4fbfb" stroke="#b8d8d8" stroke-width="0.3"/><circle cx="63.75" cy="65.97" r="0.63" fill="#f4fbfb" stroke="#b8d8d8" stroke-width="0.3"/><circle cx="63.75" cy="88.8" r="0.63" fill="#f4fbfb" stroke="#b8d8d8" stroke-width="0.3"/><circle cx="101.05" cy="44.72" r="0.63" fill="#f4fbfb" stroke="#b8d8d8" stroke-width="0.3"/><circle cx="101.05" cy="65.97" r="0.63" fill="#f4fbfb" stroke="#b8d8d8" stroke-width="0.3"/><circle cx="100.42" cy="88.32" r="0.63" fill="#f4fbfb" stroke="#b8d8d8" stroke-width="0.3"/><path d="M82.17 59.36L94.44 62.04L94.44 70.85L82.17 73.53L70.2 70.85L70.2 62.04Z" stroke="#3fb8b4" stroke-width="0.3" fill="#3fb8b4" stroke-linejoin="round"/><text x="82.32" y="67.46" font-size="2.83" fill="#ffffff" text-anchor="middle" font-weight="bold">《昆虫记》</text></svg></div><div class="cap">《昆虫记》思维导图</div></div>
<div class="card" style="left:716.40px;top:76.00px"><div class="im"><svg viewBox="-1 -1 167 133" font-family='"Liberation Sans","Noto Sans CJK SC",sans-serif'><rect x="-1" y="-1" width="167" height="133" fill="#f8f7f3"/><path d="M68.08 65.85L68.12 62.8L68.05 59.94L67.85 57.27L67.53 54.78L67.11 52.49L66.57 50.39L65.92 48.5L65.17 46.81L64.31 45.32L63.36 44.05L62.3 43.01L61.15 42.19L59.92 41.61L58.61 41.26L58.5 41.88L59.67 42.24L60.76 42.82L61.77 43.61L62.7 44.6L63.54 45.81L64.3 47.23L64.96 48.86L65.53 50.69L65.99 52.72L66.35 54.95L66.6 57.38L66.74 60.0L66.76 62.8L66.66 65.78Z" stroke="#8e3a96" stroke-width="0.1" fill="#8e3a96" stroke-linejoin="round"/><path d="M66.66 72.4L66.49 75.18L66.13 77.8L65.6 80.26L64.89 82.56L64.02 84.68L62.99 86.63L61.83 88.39L60.53 89.96L59.1 91.34L57.55 92.52L55.9 93.49L54.14 94.25L52.29 94.78L50.34 95.09L50.4 95.72L52.43 95.45L54.38 94.95L56.25 94.2L58.02 93.23L59.68 92.04L61.23 90.63L62.64 89.01L63.92 87.19L65.04 85.17L66.0 82.97L66.8 80.59L67.42 78.04L67.85 75.32L68.08 72.45Z" stroke="#4373d2" stroke-width="0.1" fill="#4373d2" stroke-linejoin="round"/><path d="M91.69 65.83L91.77 63.13L91.94 60.53L92.19 58.03L92.53 55.66L92.96 53.43L93.46 51.35L94.06 49.44L94.74 47.71L95.49 46.18L96.33 44.86L97.25 43.76L98.25 42.89L99.32 42.26L100.48 41.88L100.37 41.26L99.05 41.63L97.82 42.28L96.69 43.19L95.65 44.35L94.71 45.72L93.86 47.31L93.1 49.09L92.43 51.05L91.85 53.18L91.36 55.45L90.95 57.87L90.64 60.4L90.41 63.05L90.27 65.8Z" stroke="#f24a38" stroke-width="0.1" fill="#f24a38" stroke-linejoin="round"/><path d="M92.95 72.61L93.42 72.79L93.89 72.97L94.38 73.13L94.87 73.27L95.38 73.41L95.9 73.53L96.42 73.64L96.96 73.73L97.51 73.8L98.07 73.86L98.64 73.9L99.22 73.93L99.82 73.93L100.42 73.92L100.42 73.45L99.83 73.42L99.26 73.37L98.7 73.3L98.15 73.21L97.62 73.11L97.1 73.0L96.6 72.87L96.11 72.72L95.63 72.57L95.16 72.4L94.71 72.22L94.27 72.02L93.84 71.82L93.42 71.61Z" stroke="#f5a623" stroke-width="0.1" fill="#f5a623" stroke-linejoin="round"/><path d="M90.59 72.44L90.7 75.31L90.85 78.08L91.03 80.75L91.27 83.29L91.56 85.69L91.91 87.92L92.33 89.99L92.82 91.86L93.4 93.52L94.07 94.96L94.84 96.17L95.72 97.1L96.73 97.75L97.86 98.08L97.96 97.46L97.03 97.14L96.22 96.55L95.48 95.69L94.83 94.57L94.25 93.2L93.75 91.59L93.33 89.77L92.98 87.75L92.69 85.54L92.46 83.18L92.28 80.66L92.15 78.02L92.06 75.26L92.0 72.41Z" stroke="#4db848" stroke-width="0.1" fill="#4db848" stroke-linejoin="round"/><path d="M114.12 44.72C117.27 52.91 100.74 59.2 107.04 70.22" fill="none" stroke="#9fd0a8" stroke-width=".4" stroke-dasharray="1.2 .5"/><path d="M115.69 76.83C117.27 85.18 100.74 85.96 103.89 94.62" fill="none" stroke="#9fd0a8" stroke-width=".4" stroke-dasharray="1.2 .5"/><path d="M147.96 72.11C158.98 76.52 151.11 85.96 138.52 89.11S131.43 93.05 131.43 95.41" fill="none" stroke="#9fd0a8" stroke-width=".4" stroke-dasharray="1.2 .5"/><text x="107.04" y="57.46" font-size="1.73" fill="#888">迭代</text><rect x="35.42" y="38.43" width="23.14" height="6.3" fill="#ffffff" rx="0.79" stroke="#c79ad0" stroke-width="0.5"/><text x="47.14" y="42.45" font-size="2.44" fill="#444444" text-anchor="middle">步骤4：制作原型</text><rect x="32.27" y="92.26" width="18.1" height="6.3" fill="#ffffff" rx="0.79" stroke="#a8c4f0" stroke-width="0.5"/><text x="41.48" y="96.28" font-size="2.41" fill="#444444" text-anchor="middle">步骤5：测试</text><rect x="100.42" y="38.43" width="20.46" height="6.3" fill="#ffffff" rx="0.79" stroke="#f6a79f" stroke-width="0.5"/><text x="110.81" y="42.43" font-size="2.4" fill="#444444" text-anchor="middle">步骤1：同理心</text><rect x="100.42" y="70.54" width="22.35" height="6.3" fill="#ffffff" rx="0.79" stroke="#f6c878" stroke-width="0.5"/><text x="111.76" y="74.52" font-size="2.33" fill="#444444" text-anchor="middle">步骤2：定义问题</text><rect x="97.59" y="94.62" width="23.3" height="6.3" fill="#ffffff" rx="0.79" stroke="#a6dc9e" stroke-width="0.5"/><text x="109.4" y="98.65" font-size="2.46" fill="#444444" text-anchor="middle">步骤3：创意动脑</text><path d="M32.43 37.95Q33.37 37.95 33.37 39.21L33.37 44.09Q33.37 45.35 32.43 45.35" fill="none" stroke="#c79ad0" stroke-width=".4"/><path d="M33.37 41.57L35.42 41.57" stroke="#c79ad0" stroke-width="0.4" fill="none"/><text x="25.97" y="38.6" font-size="1.81" fill="#444444">想法</text><text x="25.97" y="46.0" font-size="1.81" fill="#444444">点子</text><path d="M22.67 35.12Q23.61 35.12 23.61 36.38L23.61 38.74Q23.61 40.0 22.67 40.0" fill="none" stroke="#c79ad0" stroke-width=".4"/><path d="M23.61 37.95L25.18 37.95" stroke="#c79ad0" stroke-width="0.4" fill="none"/><text x="11.81" y="35.76" font-size="1.77" fill="#444444">重要功能</text><text x="11.81" y="40.64" font-size="1.77" fill="#444444">表达想法</text><path d="M20.15 45.35L25.18 45.35" stroke="#c79ad0" stroke-width="0.4" fill="none"/><text x="6.3" y="45.92" font-size="1.57" fill="#444444">快速、低成本制作</text><path d="M28.96 92.26Q29.91 92.26 29.91 93.52L29.91 96.51Q29.91 97.77 28.96 97.77" fill="none" stroke="#a8c4f0" stroke-width=".4"/><path d="M29.91 95.41L32.27 95.41" stroke="#a8c4f0" stroke-width="0.4" fill="none"/><text x="14.95" y="92.83" font-size="1.57" fill="#444444">寻找使用者反馈</text><text x="14.95" y="98.43" font-size="1.84" fill="#444444">重新定义问题</text><path d="M123.41 34.81Q122.46 34.81 122.46 36.06L122.46 46.61Q122.46 47.87 123.41 47.87" fill="none" stroke="#f6a79f" stroke-width=".4"/><path d="M120.89 41.57L122.46 41.57" stroke="#f6a79f" stroke-width="0.4" fill="none"/><text x="126.71" y="35.38" font-size="1.57" fill="#444444">通过观察人群解决</text><text x="126.71" y="48.52" font-size="1.81" fill="#444444">关系</text><path d="M143.4 32.44Q142.45 32.44 142.45 33.7L142.45 36.22Q142.45 37.48 143.4 37.48" fill="none" stroke="#f6a79f" stroke-width=".4"/><path d="M140.41 34.81L142.45 34.81" stroke="#f6a79f" stroke-width="0.4" fill="none"/><text x="146.39" y="33.15" font-size="1.97" fill="#444444">问题</text><text x="146.39" y="38.05" font-size="1.57" fill="#444444">寻找真实的需求</text><path d="M134.42 42.68Q133.48 42.68 133.48 43.93L133.48 51.33Q133.48 52.59 134.42 52.59" fill="none" stroke="#f6a79f" stroke-width=".4"/><path d="M131.43 47.87L133.48 47.87" stroke="#f6a79f" stroke-width="0.4" fill="none"/><text x="136.94" y="43.32" font-size="1.77" fill="#444444">访谈观察</text><text x="136.94" y="48.33" font-size="1.73" fill="#444444">体验</text><text x="136.94" y="53.23" font-size="1.77" fill="#444444">沉浸感受</text><path d="M122.78 73.68L127.81 73.68" stroke="#f6c878" stroke-width="0.4" fill="none"/><text x="129.07" y="74.32" font-size="1.77" fill="#444444">核心问题</text><path d="M141.04 70.54Q140.09 70.54 140.09 71.8L140.09 74.94Q140.09 76.2 141.04 76.2" fill="none" stroke="#f6c878" stroke-width=".4"/><path d="M137.73 73.68L140.09 73.68" stroke="#f6c878" stroke-width="0.4" fill="none"/><text x="143.24" y="71.16" font-size="1.73" fill="#444444">分析</text><text x="143.24" y="76.82" font-size="1.73" fill="#444444">提炼</text><path d="M120.89 97.77L125.61 97.77" stroke="#a6dc9e" stroke-width="0.4" fill="none"/><text x="126.71" y="98.48" font-size="1.97" fill="#444444">有创意性点子</text><path d="M142.61 95.09Q141.67 95.09 141.67 96.35L141.67 98.87Q141.67 100.13 142.61 100.13" fill="none" stroke="#a6dc9e" stroke-width=".4"/><path d="M139.3 97.77L141.67 97.77" stroke="#a6dc9e" stroke-width="0.4" fill="none"/><text x="144.81" y="95.73" font-size="1.77" fill="#444444">头脑风暴</text><text x="144.81" y="100.7" font-size="1.57" fill="#444444">不要急于评判点子</text><rect x="65.64" y="65.66" width="28.81" height="7.87" fill="#d8d4cc" rx="0.63" opacity="0.6"/><rect x="65.32" y="65.18" width="28.81" height="7.87" fill="#ffffff" rx="0.63" stroke="#e4e0da" stroke-width="0.3"/><text x="79.65" y="70.29" font-size="3.26" fill="#222" text-anchor="middle" font-weight="bold">设计思考5步骤</text></svg></div><div class="cap">设计思考5步骤</div></div>
<div class="card" style="left:896.70px;top:76.00px"><div class="im"><svg viewBox="-1 -1 167 133" font-family='"Liberation Sans","Noto Sans CJK SC",sans-serif'><rect x="-1" y="-1" width="167" height="133" fill="#faefec"/><path d="M60.95 67.02L64.49 67.02L64.49 29.25Q64.49 27.36 66.38 27.36L69.21 27.36" stroke="#f2a6a6" stroke-width="0.5" fill="none"/><path d="M60.95 67.02L64.49 67.02L64.49 104.08Q64.49 105.97 66.38 105.97L69.21 105.97" stroke="#a6d8e8" stroke-width="0.5" fill="none"/><path d="M60.95 67.02L69.21 67.02" stroke="#f8d49a" stroke-width="0.5" fill="none"/><path d="M88.57 27.36L92.35 27.36L92.35 14.37Q92.35 13.19 93.53 13.19L95.65 13.19" stroke="#f2a6a6" stroke-width="0.4" fill="none"/><circle cx="97.54" cy="13.19" r="1.7" fill="#e23232"/><text x="100.38" y="13.98" font-size="2.2" fill="#333">吸尘好物</text><path d="M88.57 27.36L92.35 27.36L92.35 21.46Q92.35 20.28 93.53 20.28L95.65 20.28" stroke="#f2a6a6" stroke-width="0.4" fill="none"/><circle cx="97.54" cy="20.28" r="1.7" fill="#f5a623"/><text x="100.38" y="21.07" font-size="2.2" fill="#333">除菌洗手液</text><path d="M88.57 27.36L95.65 27.36" stroke="#f2a6a6" stroke-width="0.4" fill="none"/><circle cx="97.54" cy="27.36" r="1.7" fill="#4464e4"/><text x="100.38" y="28.04" font-size="1.89" fill="#333">收纳神器好物</text><path d="M88.57 27.36L92.35 27.36L92.35 33.26Q92.35 34.44 93.53 34.44L95.65 34.44" stroke="#f2a6a6" stroke-width="0.4" fill="none"/><circle cx="97.54" cy="34.44" r="1.7" fill="#a234b4"/><text x="100.38" y="35.23" font-size="2.2" fill="#333">厨房清洁剂</text><path d="M88.57 27.36L92.35 27.36L92.35 39.87Q92.35 41.05 93.53 41.05L95.65 41.05" stroke="#f2a6a6" stroke-width="0.4" fill="none"/><circle cx="97.54" cy="41.05" r="1.7" fill="#2eb452"/><text x="100.38" y="41.84" font-size="2.2" fill="#333">马桶清洁剂</text><rect x="69.21" y="23.34" width="19.36" height="8.03" fill="#fdf5f3" rx="4.01" stroke="#f2a6a6" stroke-width="0.5"/><text x="78.89" y="28.51" font-size="3.19" fill="#222" text-anchor="middle" font-weight="bold">清洁好物</text><path d="M88.57 67.02L92.35 67.02L92.35 54.03Q92.35 52.85 93.53 52.85L95.65 52.85" stroke="#f8d49a" stroke-width="0.4" fill="none"/><circle cx="97.54" cy="52.85" r="1.7" fill="#e23232"/><text x="100.38" y="53.64" font-size="2.2" fill="#333">智能门锁</text><path d="M88.57 67.02L92.35 67.02L92.35 61.12Q92.35 59.94 93.53 59.94L95.65 59.94" stroke="#f8d49a" stroke-width="0.4" fill="none"/><circle cx="97.54" cy="59.94" r="1.7" fill="#f5a623"/><text x="100.38" y="60.73" font-size="2.2" fill="#333">照片、传感器</text><path d="M88.57 67.02L95.65 67.02" stroke="#f8d49a" stroke-width="0.4" fill="none"/><circle cx="97.54" cy="67.02" r="1.7" fill="#4464e4"/><text x="100.38" y="67.81" font-size="2.2" fill="#333">智能音箱</text><path d="M88.57 67.02L92.35 67.02L92.35 72.45Q92.35 73.63 93.53 73.63L95.65 73.63" stroke="#f8d49a" stroke-width="0.4" fill="none"/><circle cx="97.54" cy="73.63" r="1.7" fill="#a234b4"/><text x="100.38" y="74.42" font-size="2.2" fill="#333">智能窗帘灯</text><path d="M88.57 67.02L92.35 67.02L92.35 79.53Q92.35 80.71 93.53 80.71L95.65 80.71" stroke="#f8d49a" stroke-width="0.4" fill="none"/><circle cx="97.54" cy="80.71" r="1.7" fill="#2eb452"/><text x="100.38" y="81.5" font-size="2.2" fill="#333">扫地机器人</text><rect x="69.21" y="63.0" width="19.36" height="8.03" fill="#fdf5f3" rx="4.01" stroke="#f8d49a" stroke-width="0.5"/><text x="78.89" y="68.17" font-size="3.19" fill="#222" text-anchor="middle" font-weight="bold">智能家居</text><path d="M88.57 105.97L92.35 105.97L92.35 93.69Q92.35 92.51 93.53 92.51L95.65 92.51" stroke="#a6d8e8" stroke-width="0.4" fill="none"/><circle cx="97.54" cy="92.51" r="1.7" fill="#e23232"/><text x="100.38" y="93.3" font-size="2.2" fill="#333">空气炸锅</text><path d="M88.57 105.97L92.35 105.97L92.35 100.54Q92.35 99.36 93.53 99.36L95.65 99.36" stroke="#a6d8e8" stroke-width="0.4" fill="none"/><circle cx="97.54" cy="99.36" r="1.7" fill="#f5a623"/><text x="100.38" y="100.15" font-size="2.2" fill="#333">电饭煲</text><path d="M88.57 105.97L95.65 105.97" stroke="#a6d8e8" stroke-width="0.4" fill="none"/><circle cx="97.54" cy="105.97" r="1.7" fill="#4464e4"/><text x="100.38" y="106.76" font-size="2.2" fill="#333">洗碗机</text><path d="M88.57 105.97L92.35 105.97L92.35 111.87Q92.35 113.05 93.53 113.05L95.65 113.05" stroke="#a6d8e8" stroke-width="0.4" fill="none"/><circle cx="97.54" cy="113.05" r="1.7" fill="#a234b4"/><text x="100.38" y="113.84" font-size="2.2" fill="#333">保温小电锅</text><path d="M88.57 105.97L92.35 105.97L92.35 118.95Q92.35 120.13 93.53 120.13L95.65 120.13" stroke="#a6d8e8" stroke-width="0.4" fill="none"/><circle cx="97.54" cy="120.13" r="1.7" fill="#2eb452"/><text x="100.38" y="120.92" font-size="2.2" fill="#333">智能小烤箱</text><rect x="69.21" y="101.96" width="19.36" height="8.03" fill="#fdf5f3" rx="4.01" stroke="#a6d8e8" stroke-width="0.5"/><text x="78.89" y="107.12" font-size="3.19" fill="#222" text-anchor="middle" font-weight="bold">厨房用品</text><rect x="27.19" y="62.77" width="33.76" height="8.5" fill="#ffffff" rx="4.25"/><text x="44.19" y="68.42" font-size="3.9" fill="#333" text-anchor="middle" font-weight="bold">15件居家好物</text></svg></div><div class="cap">15件居家好物</div></div>
<div class="card" style="left:176.00px;top:245.40px"><div class="im"><svg viewBox="-1 -1 167 133" font-family='"Liberation Sans","Noto Sans CJK SC",sans-serif'><defs><linearGradient id="g5" x1="0" y1="0" x2=".4" y2="1"><stop offset="0" stop-color="#ecfaf7"/><stop offset=".5" stop-color="#dff5ef"/><stop offset="1" stop-color="#d2f1e8"/></linearGradient></defs><rect x="-1" y="-1" width="167" height="133" fill="url(#g5)"/><ellipse cx="31.48" cy="11.08" rx="22" ry="9" fill="#f6fdfb" opacity=".3"/><ellipse cx="6.3" cy="17.37" rx="12" ry="5" fill="#f6fdfb" opacity=".3"/><circle cx="11.81" cy="132.91" r="9.76" fill="#c4ebde"/><circle cx="2.36" cy="120.32" r="1.89" fill="#d8e8e0"/><circle cx="0.0" cy="117.64" r="1.57" fill="#cfeee2"/><path d="M74.77 57.98C73.98 47.28 66.11 40.2 58.24 39.73" stroke="#4f60a8" stroke-width="0.65" fill="none" stroke-linecap="round"/><path d="M74.77 57.98C75.87 47.28 84.21 40.2 92.4 39.73" stroke="#4f60a8" stroke-width="0.65" fill="none" stroke-linecap="round"/><path d="M74.77 71.21C73.98 81.91 64.54 88.99 56.35 89.31" stroke="#4f60a8" stroke-width="0.65" fill="none" stroke-linecap="round"/><path d="M74.77 71.21C75.87 81.12 84.21 88.21 91.77 88.52" stroke="#4f60a8" stroke-width="0.65" fill="none" stroke-linecap="round"/><path d="M56.19 65.07L63.75 64.75" stroke="#4f60a8" stroke-width="0.65" fill="none"/><path d="M85.79 63.81L92.4 63.18" stroke="#4f60a8" stroke-width="0.65" fill="none"/><path d="M47.06 39.73C45.49 39.73 47.22 34.06 44.7 34.06" stroke="#a9cfd0" stroke-width="0.45" fill="none" stroke-linecap="round"/><path d="M15.58 34.06L44.7 34.06" stroke="#a9cfd0" stroke-width="0.45" fill="none"/><text x="41.4" y="32.67" font-size="1.83" fill="#30354d" text-anchor="end">鲁智深拳打镇关西 倒拔垂杨柳</text><circle cx="14.48" cy="32.01" r="1.34" fill="#ee4a4a"/><path d="M47.06 39.73C45.49 39.73 47.22 39.1 44.7 39.1" stroke="#a9cfd0" stroke-width="0.45" fill="none" stroke-linecap="round"/><path d="M15.58 39.1L44.7 39.1" stroke="#a9cfd0" stroke-width="0.45" fill="none"/><text x="41.4" y="37.76" font-size="1.98" fill="#30354d" text-anchor="end">林冲风雪山神庙 误入白虎堂</text><circle cx="14.48" cy="37.05" r="1.34" fill="#f6bc3a"/><path d="M47.06 39.73C45.49 39.73 47.22 44.29 44.7 44.29" stroke="#a9cfd0" stroke-width="0.45" fill="none" stroke-linecap="round"/><path d="M15.58 44.29L44.7 44.29" stroke="#a9cfd0" stroke-width="0.45" fill="none"/><text x="41.4" y="42.95" font-size="1.98" fill="#30354d" text-anchor="end">武松景阳冈打虎 醉打蒋门神</text><circle cx="14.48" cy="42.24" r="1.34" fill="#5a6cf0"/><path d="M47.06 39.73C45.49 39.73 47.22 49.33 44.7 49.33" stroke="#a9cfd0" stroke-width="0.45" fill="none" stroke-linecap="round"/><path d="M15.58 49.33L44.7 49.33" stroke="#a9cfd0" stroke-width="0.45" fill="none"/><text x="41.4" y="48.07" font-size="2.2" fill="#30354d" text-anchor="end">宋江三打祝家庄 受招安</text><circle cx="14.48" cy="47.28" r="1.34" fill="#cc4ac4"/><path d="M45.02 65.07C43.44 65.07 46.43 62.71 43.92 62.71" stroke="#a9cfd0" stroke-width="0.45" fill="none" stroke-linecap="round"/><path d="M10.86 62.71L43.92 62.71" stroke="#a9cfd0" stroke-width="0.45" fill="none"/><text x="40.61" y="61.35" font-size="1.91" fill="#30354d" text-anchor="end">语言生动 人物形象鲜明 富有个性</text><path d="M45.02 65.07C43.44 65.07 46.43 67.11 43.92 67.11" stroke="#a9cfd0" stroke-width="0.45" fill="none" stroke-linecap="round"/><path d="M14.01 67.11L43.92 67.11" stroke="#a9cfd0" stroke-width="0.45" fill="none"/><text x="40.61" y="65.77" font-size="1.96" fill="#30354d" text-anchor="end">情节曲折 环环相扣 引人入胜</text><path d="M45.02 65.07C43.44 65.07 46.43 71.68 43.92 71.68" stroke="#a9cfd0" stroke-width="0.45" fill="none" stroke-linecap="round"/><path d="M10.86 71.68L43.92 71.68" stroke="#a9cfd0" stroke-width="0.45" fill="none"/><text x="40.61" y="70.39" font-size="2.12" fill="#30354d" text-anchor="end">古代白话小说 现实与浪漫结合</text><path d="M45.02 89.31C43.44 89.31 45.96 84.43 43.44 84.43" stroke="#a9cfd0" stroke-width="0.45" fill="none" stroke-linecap="round"/><path d="M14.01 84.43L43.44 84.43" stroke="#a9cfd0" stroke-width="0.45" fill="none"/><text x="40.14" y="83.08" font-size="1.94" fill="#30354d" text-anchor="end">北宋末年宋江起义的历史故事</text><path d="M45.02 89.31C43.44 89.31 45.96 88.99 43.44 88.99" stroke="#a9cfd0" stroke-width="0.45" fill="none" stroke-linecap="round"/><path d="M23.45 88.99L43.44 88.99" stroke="#a9cfd0" stroke-width="0.45" fill="none"/><text x="40.14" y="87.74" font-size="2.2" fill="#30354d" text-anchor="end">民间话本 杂剧</text><path d="M45.02 89.31C43.44 89.31 45.96 93.4 43.44 93.4" stroke="#a9cfd0" stroke-width="0.45" fill="none" stroke-linecap="round"/><path d="M25.81 93.4L43.44 93.4" stroke="#a9cfd0" stroke-width="0.45" fill="none"/><text x="40.14" y="92.14" font-size="2.2" fill="#30354d" text-anchor="end">元末明初成书</text><path d="M45.02 89.31C43.44 89.31 45.96 97.34 43.44 97.34" stroke="#a9cfd0" stroke-width="0.45" fill="none" stroke-linecap="round"/><path d="M17.94 97.34L43.44 97.34" stroke="#a9cfd0" stroke-width="0.45" fill="none"/><text x="40.14" y="96.08" font-size="2.2" fill="#30354d" text-anchor="end">社会黑暗 官逼民反</text><path d="M103.57 39.73C105.15 39.73 104.2 37.99 106.09 37.99" stroke="#a9cfd0" stroke-width="0.45" fill="none" stroke-linecap="round"/><path d="M106.09 37.99L125.3 37.99" stroke="#a9cfd0" stroke-width="0.45" fill="none"/><text x="107.04" y="36.55" font-size="1.67" fill="#30354d">1.梁山好汉 共有108将</text><circle cx="110.18" cy="43.19" r="0.79" fill="#f08a30"/><text x="112.07" y="44.06" font-size="1.98" fill="#30354d">施耐庵简介</text><path d="M125.14 36.73C126.71 36.73 126.71 33.59 128.76 33.59" stroke="#a9cfd0" stroke-width="0.45" fill="none" stroke-linecap="round"/><path d="M128.76 33.59L151.42 33.59" stroke="#a9cfd0" stroke-width="0.45" fill="none"/><text x="129.86" y="32.2" font-size="1.84" fill="#30354d">施耐庵 元末明初 小说家</text><path d="M125.14 36.73C126.71 36.73 126.71 42.56 128.76 42.56" stroke="#a9cfd0" stroke-width="0.45" fill="none" stroke-linecap="round"/><path d="M128.76 42.56L152.05 42.56" stroke="#a9cfd0" stroke-width="0.45" fill="none"/><text x="129.86" y="41.27" font-size="2.1" fill="#30354d">罗贯中 编次 四大名著</text><path d="M103.26 63.02C104.83 63.02 106.56 62.71 108.45 62.71" stroke="#a9cfd0" stroke-width="0.45" fill="none" stroke-linecap="round"/><path d="M108.45 62.71L149.69 62.71" stroke="#a9cfd0" stroke-width="0.45" fill="none"/><text x="109.4" y="61.41" font-size="2.07" fill="#30354d">中国历史上第一部用白话文写成的章回小说</text><path d="M103.26 63.02C104.83 63.02 106.56 67.43 108.45 67.43" stroke="#a9cfd0" stroke-width="0.45" fill="none" stroke-linecap="round"/><path d="M108.45 67.43L156.78 67.43" stroke="#a9cfd0" stroke-width="0.45" fill="none"/><text x="109.4" y="66.12" font-size="2.05" fill="#30354d">又名忠义水浒传 一百回本 一百二十回本 七十回本</text><path d="M102.94 88.52C104.52 88.52 105.78 83.96 107.67 83.96" stroke="#a9cfd0" stroke-width="0.45" fill="none" stroke-linecap="round"/><path d="M107.67 83.96L149.69 83.96" stroke="#a9cfd0" stroke-width="0.45" fill="none"/><text x="108.61" y="82.65" font-size="2.05" fill="#30354d">官逼民反 反映了北宋末年农民起义的全过程</text><path d="M102.94 88.52C104.52 88.52 105.78 88.68 107.67 88.68" stroke="#a9cfd0" stroke-width="0.45" fill="none" stroke-linecap="round"/><path d="M107.67 88.68L139.46 88.68" stroke="#a9cfd0" stroke-width="0.45" fill="none"/><text x="108.61" y="87.42" font-size="2.2" fill="#30354d">歌颂起义英雄的反抗精神</text><path d="M102.94 88.52C104.52 88.52 105.78 93.09 107.67 93.09" stroke="#a9cfd0" stroke-width="0.45" fill="none" stroke-linecap="round"/><path d="M107.67 93.09L151.27 93.09" stroke="#a9cfd0" stroke-width="0.45" fill="none"/><text x="108.61" y="91.83" font-size="2.2" fill="#30354d">揭示了封建社会农民起义失败的内在原因</text><path d="M102.94 88.52C104.52 88.52 105.78 97.34 107.67 97.34" stroke="#a9cfd0" stroke-width="0.45" fill="none" stroke-linecap="round"/><path d="M107.67 97.34L152.84 97.34" stroke="#a9cfd0" stroke-width="0.45" fill="none"/><text x="108.61" y="96.08" font-size="2.2" fill="#30354d">替天行道 忠义 反抗 招安 悲剧结局</text><rect x="46.43" y="37.05" width="12.59" height="5.35" fill="#ffffff" rx="1.73" stroke="#c4dce2" stroke-width="0.4"/><text x="52.73" y="40.49" font-size="2.12" fill="#3a4580" text-anchor="middle">主要情节</text><rect x="44.39" y="62.39" width="12.59" height="5.35" fill="#ffffff" rx="1.73" stroke="#c4dce2" stroke-width="0.4"/><text x="50.68" y="65.83" font-size="2.12" fill="#3a4580" text-anchor="middle">艺术特色</text><rect x="44.39" y="86.63" width="12.59" height="5.35" fill="#ffffff" rx="1.73" stroke="#c4dce2" stroke-width="0.4"/><text x="50.68" y="90.08" font-size="2.12" fill="#3a4580" text-anchor="middle">创作背景</text><rect x="91.61" y="37.05" width="12.59" height="5.35" fill="#ffffff" rx="1.73" stroke="#c4dce2" stroke-width="0.4"/><text x="97.91" y="40.49" font-size="2.12" fill="#3a4580" text-anchor="middle">作者简介</text><rect x="91.3" y="60.35" width="12.59" height="5.35" fill="#ffffff" rx="1.73" stroke="#c4dce2" stroke-width="0.4"/><text x="97.59" y="63.79" font-size="2.12" fill="#3a4580" text-anchor="middle">作品简介</text><rect x="90.98" y="85.85" width="12.59" height="5.35" fill="#ffffff" rx="1.73" stroke="#c4dce2" stroke-width="0.4"/><text x="97.28" y="89.28" font-size="2.12" fill="#3a4580" text-anchor="middle">主题思想</text><path d="M74.77 57.51L86.26 64.6L74.77 71.84L63.28 64.6Z" stroke="#3b4d9a" stroke-width="0.2" fill="#3b4d9a" stroke-linejoin="round"/><text x="74.77" y="65.61" font-size="2.8" fill="#ffffff" text-anchor="middle" font-weight="bold">水浒传</text></svg></div><div class="cap">《水浒传》思维导图</div></div>
<div class="card" style="left:356.20px;top:245.40px"><div class="im"><svg viewBox="-1 -1 167 133" font-family='"Liberation Sans","Noto Sans CJK SC",sans-serif'><rect x="-1" y="-1" width="167" height="133" fill="#2b2730"/><path d="M73.98 71.68L71.62 71.68L71.62 48.54L67.37 48.54" stroke="#9e9228" stroke-width="0.5" fill="none" stroke-linejoin="round"/><path d="M61.7 48.54L60.6 48.54" stroke="#9e9228" stroke-width="0.45" fill="none" stroke-linejoin="round"/><path d="M60.6 37.05L60.6 62.55" stroke="#9e9228" stroke-width="0.45" fill="none"/><path d="M60.6 37.05L59.03 37.05" stroke="#9e9228" stroke-width="0.45" fill="none"/><path d="M60.6 62.55L59.03 62.55" stroke="#9e9228" stroke-width="0.45" fill="none"/><text x="55.09" y="36.88" font-size="1.73" fill="#f4f4f4">性格</text><path d="M54.62 37.05L59.03 37.05" stroke="#9e9228" stroke-width="0.4" fill="none"/><text x="55.09" y="62.38" font-size="1.73" fill="#f4f4f4">经历</text><path d="M54.62 62.55L59.03 62.55" stroke="#9e9228" stroke-width="0.4" fill="none"/><path d="M52.73 37.05L54.62 37.05" stroke="#9e9228" stroke-width="0.4" fill="none"/><path d="M52.73 62.55L54.62 62.55" stroke="#9e9228" stroke-width="0.4" fill="none"/><path d="M52.73 28.39L52.73 46.02" stroke="#9e9228" stroke-width="0.4" fill="none"/><path d="M52.73 28.39L51.16 28.39" stroke="#9e9228" stroke-width="0.4" fill="none"/><path d="M52.73 32.8L51.16 32.8" stroke="#9e9228" stroke-width="0.4" fill="none"/><path d="M52.73 37.05L51.16 37.05" stroke="#9e9228" stroke-width="0.4" fill="none"/><path d="M52.73 41.46L51.16 41.46" stroke="#9e9228" stroke-width="0.4" fill="none"/><path d="M52.73 46.02L51.16 46.02" stroke="#9e9228" stroke-width="0.4" fill="none"/><text x="51.16" y="28.13" font-size="1.44" fill="#f4f4f4" text-anchor="end">勇敢 不畏艰险</text><path d="M41.24 28.39L51.63 28.39" stroke="#9e9228" stroke-width="0.4" fill="none"/><text x="51.16" y="32.58" font-size="1.57" fill="#f4f4f4" text-anchor="end">坚毅顽强</text><path d="M44.39 32.8L51.63 32.8" stroke="#9e9228" stroke-width="0.4" fill="none"/><text x="51.16" y="36.97" font-size="1.97" fill="#f4f4f4" text-anchor="end">乐观</text><path d="M46.75 37.05L51.63 37.05" stroke="#9e9228" stroke-width="0.4" fill="none"/><text x="51.16" y="41.1" font-size="1.2" fill="#f4f4f4" text-anchor="end">善于劳动 心灵手巧</text><path d="M40.45 41.46L51.63 41.46" stroke="#9e9228" stroke-width="0.4" fill="none"/><text x="51.16" y="45.67" font-size="1.23" fill="#f4f4f4" text-anchor="end">富于冒险精神</text><path d="M43.29 46.02L51.63 46.02" stroke="#9e9228" stroke-width="0.4" fill="none"/><path d="M52.73 53.89L52.73 71.36" stroke="#9e9228" stroke-width="0.4" fill="none"/><path d="M52.73 53.89L50.68 53.89" stroke="#9e9228" stroke-width="0.4" fill="none"/><path d="M52.73 58.3L50.68 58.3" stroke="#9e9228" stroke-width="0.4" fill="none"/><path d="M52.73 62.55L50.68 62.55" stroke="#9e9228" stroke-width="0.4" fill="none"/><path d="M52.73 66.96L50.68 66.96" stroke="#9e9228" stroke-width="0.4" fill="none"/><path d="M52.73 71.36L50.68 71.36" stroke="#9e9228" stroke-width="0.4" fill="none"/><text x="50.68" y="53.59" font-size="1.34" fill="#f4f4f4" text-anchor="end">出海</text><path d="M47.54 53.89L51.16 53.89" stroke="#9e9228" stroke-width="0.4" fill="none"/><text x="50.68" y="57.93" font-size="1.16" fill="#f4f4f4" text-anchor="end">遭遇海难漂流</text><path d="M43.29 58.3L51.16 58.3" stroke="#9e9228" stroke-width="0.4" fill="none"/><text x="50.68" y="62.18" font-size="1.18" fill="#f4f4f4" text-anchor="end">荒岛求生</text><path d="M45.49 62.55L51.16 62.55" stroke="#9e9228" stroke-width="0.4" fill="none"/><text x="50.68" y="66.65" font-size="1.32" fill="#f4f4f4" text-anchor="end">救出星期五</text><path d="M43.6 66.96L51.16 66.96" stroke="#9e9228" stroke-width="0.4" fill="none"/><text x="50.68" y="71.1" font-size="1.46" fill="#f4f4f4" text-anchor="end">返回英国</text><path d="M44.39 71.36L51.16 71.36" stroke="#9e9228" stroke-width="0.4" fill="none"/><rect x="61.7" y="46.81" width="5.67" height="3.62" fill="#2b2730" rx="0.63" stroke="#9e9228" stroke-width="0.5"/><text x="64.54" y="49.3" font-size="1.89" fill="#f4f4f4" text-anchor="middle">人物</text><path d="M71.62 71.68L71.62 90.1L67.37 90.1" stroke="#9c1a3c" stroke-width="0.5" fill="none" stroke-linejoin="round"/><path d="M60.6 90.1L61.7 90.1" stroke="#9c1a3c" stroke-width="0.45" fill="none"/><path d="M60.6 80.81L60.6 98.28" stroke="#9c1a3c" stroke-width="0.45" fill="none"/><path d="M60.6 80.81L59.03 80.81" stroke="#9c1a3c" stroke-width="0.45" fill="none"/><path d="M60.6 91.35L59.03 91.35" stroke="#9c1a3c" stroke-width="0.45" fill="none"/><path d="M60.6 98.28L59.03 98.28" stroke="#9c1a3c" stroke-width="0.45" fill="none"/><text x="55.88" y="80.5" font-size="1.34" fill="#f4f4f4">主线</text><path d="M55.41 80.81L59.03 80.81" stroke="#9c1a3c" stroke-width="0.4" fill="none"/><text x="51.94" y="80.42" font-size="1.12" fill="#f4f4f4" text-anchor="end">讲述鲁滨逊出海遇难后在荒岛上独自生活的故事</text><path d="M27.86 80.81L52.42 80.81" stroke="#9c1a3c" stroke-width="0.4" fill="none"/><path d="M51.94 80.81L55.88 80.81" stroke="#9c1a3c" stroke-width="0.4" fill="none"/><text x="55.09" y="91.19" font-size="1.73" fill="#f4f4f4">主题</text><path d="M54.62 91.35L59.03 91.35" stroke="#9c1a3c" stroke-width="0.4" fill="none"/><text x="4.72" y="85.28" font-size="1.5" fill="#f4f4f4">本书通过鲁滨逊在荒岛上的种种经历歌颂了人类的智慧与创造力表现了</text><text x="4.72" y="86.99" font-size="1.41" fill="#f4f4f4">资产阶级上升时期的冒险进取精神和百折不挠的坚强意志同时也反映了殖民</text><text x="4.72" y="88.77" font-size="1.55" fill="#f4f4f4">主义的思想体现出作者对人类文明发展的思考以及对劳动价值的肯定</text><text x="4.72" y="90.66" font-size="2.0" fill="#f4f4f4">与赞美之情</text><path d="M4.41 91.51L55.09 91.51" stroke="#9c1a3c" stroke-width="0.4" fill="none"/><text x="55.88" y="97.97" font-size="1.34" fill="#f4f4f4">意义</text><path d="M55.41 98.28L59.03 98.28" stroke="#9c1a3c" stroke-width="0.4" fill="none"/><path d="M54.31 95.92L54.31 101.74" stroke="#9c1a3c" stroke-width="0.4" fill="none"/><path d="M54.31 98.28L55.41 98.28" stroke="#9c1a3c" stroke-width="0.4" fill="none"/><text x="51.94" y="96.56" font-size="1.79" fill="#f4f4f4" text-anchor="end">启蒙运动 现实主义小说</text><path d="M32.27 97.18L54.31 97.18" stroke="#9c1a3c" stroke-width="0.4" fill="none"/><text x="51.94" y="101.17" font-size="1.47" fill="#f4f4f4" text-anchor="end">开创性的 被视为英国第一部现实主义长篇小说 享有英国小说之父的美誉</text><path d="M4.41 102.06L54.31 102.06" stroke="#9c1a3c" stroke-width="0.4" fill="none"/><rect x="61.7" y="88.21" width="5.67" height="3.94" fill="#2b2730" rx="0.63" stroke="#9c1a3c" stroke-width="0.5"/><text x="64.54" y="90.85" font-size="1.89" fill="#f4f4f4" text-anchor="middle">主题</text><path d="M94.13 71.68L95.23 71.68L95.23 46.97L100.74 46.97" stroke="#2c4cbc" stroke-width="0.5" fill="none" stroke-linejoin="round"/><path d="M105.15 46.97L107.04 46.97" stroke="#2c4cbc" stroke-width="0.45" fill="none"/><path d="M107.04 22.88L107.04 70.58" stroke="#2c4cbc" stroke-width="0.45" fill="none"/><path d="M107.04 22.88L108.92 22.88" stroke="#2c4cbc" stroke-width="0.45" fill="none"/><path d="M107.04 27.29L108.92 27.29" stroke="#2c4cbc" stroke-width="0.45" fill="none"/><path d="M107.04 31.86L108.92 31.86" stroke="#2c4cbc" stroke-width="0.45" fill="none"/><path d="M107.04 38.62L108.92 38.62" stroke="#2c4cbc" stroke-width="0.45" fill="none"/><path d="M107.04 49.96L108.92 49.96" stroke="#2c4cbc" stroke-width="0.45" fill="none"/><path d="M107.04 70.58L108.92 70.58" stroke="#2c4cbc" stroke-width="0.45" fill="none"/><text x="109.4" y="22.66" font-size="1.55" fill="#f4f4f4">作者 笛福</text><path d="M108.92 22.88L116.95 22.88" stroke="#2c4cbc" stroke-width="0.4" fill="none"/><text x="109.4" y="27.07" font-size="1.57" fill="#f4f4f4">英国作家</text><path d="M108.92 27.29L116.17 27.29" stroke="#2c4cbc" stroke-width="0.4" fill="none"/><text x="109.4" y="31.54" font-size="1.31" fill="#f4f4f4">欧洲小说之父</text><path d="M108.92 31.86L117.74 31.86" stroke="#2c4cbc" stroke-width="0.4" fill="none"/><text x="109.4" y="38.45" font-size="1.69" fill="#f4f4f4">成书时间</text><path d="M108.92 38.62L116.64 38.62" stroke="#2c4cbc" stroke-width="0.4" fill="none"/><path d="M116.64 38.62L118.84 38.62" stroke="#2c4cbc" stroke-width="0.4" fill="none"/><path d="M118.84 36.26L118.84 40.98" stroke="#2c4cbc" stroke-width="0.4" fill="none"/><path d="M118.84 36.26L120.42 36.26" stroke="#2c4cbc" stroke-width="0.4" fill="none"/><path d="M118.84 40.98L120.42 40.98" stroke="#2c4cbc" stroke-width="0.4" fill="none"/><text x="120.89" y="36.0" font-size="1.46" fill="#f4f4f4">1719年</text><path d="M120.42 36.26L126.08 36.26" stroke="#2c4cbc" stroke-width="0.4" fill="none"/><text x="120.89" y="40.69" font-size="1.35" fill="#f4f4f4">第一部长篇 广受欢迎</text><path d="M120.42 40.98L134.27 40.98" stroke="#2c4cbc" stroke-width="0.4" fill="none"/><text x="109.4" y="49.78" font-size="1.69" fill="#f4f4f4">创作背景</text><path d="M108.92 49.96L116.64 49.96" stroke="#2c4cbc" stroke-width="0.4" fill="none"/><path d="M116.64 49.96L118.05 49.96" stroke="#2c4cbc" stroke-width="0.4" fill="none"/><path d="M118.05 45.71L118.05 54.36" stroke="#2c4cbc" stroke-width="0.4" fill="none"/><path d="M118.05 45.71L119.94 45.71" stroke="#2c4cbc" stroke-width="0.4" fill="none"/><path d="M118.05 49.96L119.94 49.96" stroke="#2c4cbc" stroke-width="0.4" fill="none"/><path d="M118.05 54.36L119.94 54.36" stroke="#2c4cbc" stroke-width="0.4" fill="none"/><text x="120.42" y="45.42" font-size="1.38" fill="#f4f4f4">资本主义</text><path d="M119.94 45.71L126.4 45.71" stroke="#2c4cbc" stroke-width="0.4" fill="none"/><text x="120.42" y="49.62" font-size="1.26" fill="#f4f4f4">航海与殖民</text><path d="M119.94 49.96L127.18 49.96" stroke="#2c4cbc" stroke-width="0.4" fill="none"/><text x="120.42" y="54.0" font-size="1.18" fill="#f4f4f4">真实事件</text><path d="M119.94 54.36L125.61 54.36" stroke="#2c4cbc" stroke-width="0.4" fill="none"/><circle cx="125.45" cy="51.69" r="0.47" fill="#fff"/><text x="109.4" y="70.45" font-size="1.83" fill="#f4f4f4">章节 内容</text><path d="M108.92 70.58L118.21 70.58" stroke="#2c4cbc" stroke-width="0.4" fill="none"/><path d="M118.21 70.58L119.94 70.58" stroke="#2c4cbc" stroke-width="0.4" fill="none"/><path d="M119.94 59.09L119.94 81.12" stroke="#2c4cbc" stroke-width="0.4" fill="none"/><path d="M119.94 59.09L121.52 59.09" stroke="#2c4cbc" stroke-width="0.4" fill="none"/><path d="M119.94 63.49L121.52 63.49" stroke="#2c4cbc" stroke-width="0.4" fill="none"/><path d="M119.94 68.06L121.52 68.06" stroke="#2c4cbc" stroke-width="0.4" fill="none"/><path d="M119.94 72.47L121.52 72.47" stroke="#2c4cbc" stroke-width="0.4" fill="none"/><path d="M119.94 76.87L121.52 76.87" stroke="#2c4cbc" stroke-width="0.4" fill="none"/><path d="M119.94 81.12L121.52 81.12" stroke="#2c4cbc" stroke-width="0.4" fill="none"/><text x="121.99" y="58.72" font-size="1.18" fill="#f4f4f4">离家出海</text><path d="M121.52 59.09L127.18 59.09" stroke="#2c4cbc" stroke-width="0.4" fill="none"/><text x="121.99" y="63.13" font-size="1.18" fill="#f4f4f4">流落荒岛</text><path d="M121.52 63.49L127.18 63.49" stroke="#2c4cbc" stroke-width="0.4" fill="none"/><text x="121.99" y="67.69" font-size="1.18" fill="#f4f4f4">建造住所</text><path d="M121.52 68.06L127.18 68.06" stroke="#2c4cbc" stroke-width="0.4" fill="none"/><text x="121.99" y="72.1" font-size="1.18" fill="#f4f4f4">驯养种植</text><path d="M121.52 72.47L127.18 72.47" stroke="#2c4cbc" stroke-width="0.4" fill="none"/><text x="121.99" y="76.51" font-size="1.18" fill="#f4f4f4">救星期五</text><path d="M121.52 76.87L127.18 76.87" stroke="#2c4cbc" stroke-width="0.4" fill="none"/><text x="121.99" y="80.76" font-size="1.18" fill="#f4f4f4">回到英国</text><path d="M121.52 81.12L127.18 81.12" stroke="#2c4cbc" stroke-width="0.4" fill="none"/><path d="M128.29 57.51L129.07 57.51L129.07 81.91L128.29 81.91" stroke="#cccccc" stroke-width="0.35" fill="none" stroke-linejoin="round"/><rect x="130.96" y="68.22" width="15.74" height="2.99" fill="#ffffff" rx="0.31"/><text x="138.83" y="70.26" font-size="1.54" fill="#333" text-anchor="middle">二十八年的荒岛生活</text><rect x="100.74" y="45.23" width="4.41" height="3.62" fill="#2b2730" rx="0.63" stroke="#2c4cbc" stroke-width="0.5"/><text x="102.94" y="47.5" font-size="1.26" fill="#f4f4f4" text-anchor="middle">简介</text><path d="M95.23 71.68L95.7 71.68L95.7 95.92L100.74 95.92" stroke="#2c8c3e" stroke-width="0.5" fill="none" stroke-linejoin="round"/><path d="M105.15 95.92L107.04 95.92" stroke="#2c8c3e" stroke-width="0.45" fill="none"/><path d="M107.04 91.2L107.04 100.48" stroke="#2c8c3e" stroke-width="0.45" fill="none"/><path d="M107.04 91.2L108.92 91.2" stroke="#2c8c3e" stroke-width="0.45" fill="none"/><path d="M107.04 100.48L108.92 100.48" stroke="#2c8c3e" stroke-width="0.45" fill="none"/><text x="109.4" y="90.81" font-size="1.1" fill="#f4f4f4">技巧与结构</text><path d="M108.92 91.2L115.38 91.2" stroke="#2c8c3e" stroke-width="0.4" fill="none"/><text x="109.4" y="100.46" font-size="2.1" fill="#f4f4f4">语言</text><path d="M108.92 100.48L114.12 100.48" stroke="#2c8c3e" stroke-width="0.4" fill="none"/><path d="M115.38 91.2L116.8 91.2" stroke="#2c8c3e" stroke-width="0.4" fill="none"/><path d="M116.8 86.79L116.8 95.76" stroke="#2c8c3e" stroke-width="0.4" fill="none"/><path d="M116.8 86.79L118.37 86.79" stroke="#2c8c3e" stroke-width="0.4" fill="none"/><path d="M116.8 91.2L118.37 91.2" stroke="#2c8c3e" stroke-width="0.4" fill="none"/><path d="M116.8 95.76L118.37 95.76" stroke="#2c8c3e" stroke-width="0.4" fill="none"/><text x="118.84" y="86.42" font-size="1.18" fill="#f4f4f4">第一人称</text><path d="M118.37 86.79L124.04 86.79" stroke="#2c8c3e" stroke-width="0.4" fill="none"/><text x="118.84" y="90.92" font-size="1.42" fill="#f4f4f4">日记体形式</text><path d="M118.37 91.2L126.4 91.2" stroke="#2c8c3e" stroke-width="0.4" fill="none"/><text x="118.84" y="95.56" font-size="1.6" fill="#f4f4f4">细节 真实的描写</text><path d="M118.37 95.76L131.43 95.76" stroke="#2c8c3e" stroke-width="0.4" fill="none"/><rect x="100.74" y="94.19" width="4.41" height="3.62" fill="#2b2730" rx="0.63" stroke="#2c8c3e" stroke-width="0.5"/><text x="102.94" y="96.45" font-size="1.26" fill="#f4f4f4" text-anchor="middle">艺术</text><rect x="73.98" y="69.0" width="20.15" height="5.35" fill="#c6f020" rx="0.31"/><text x="84.21" y="72.4" font-size="2.01" fill="#2a3a10" text-anchor="middle" font-weight="bold">《鲁滨逊漂流记》</text></svg></div><div class="cap">《鲁滨逊漂流记》思维导图</div></div>
<div class="card" style="left:536.30px;top:245.40px"><div class="im"><svg viewBox="-1 -1 167 133" font-family='"Liberation Sans","Noto Sans CJK SC",sans-serif'><defs><pattern id="gh7" x="8.4" y="22.9" width="28.6" height="31.2" patternUnits="userSpaceOnUse"><rect x="0" y="0" width="14.3" height="31.2" fill="#c4d898" opacity=".24"/><rect x="0" y="0" width="28.6" height="15.6" fill="#c4d898" opacity=".24"/></pattern></defs><rect x="-1" y="-1" width="167" height="133" fill="#fefcf0"/><rect x="-1" y="-1" width="167" height="133" fill="url(#gh7)"/><path d="M71.62 7.36L71.62 126.51" stroke="#78c868" stroke-width="0.6" fill="none"/><path d="M71.62 7.67Q71.62 6.41 72.88 6.41L73.98 6.41" fill="none" stroke="#78c868" stroke-width=".6"/><rect x="73.98" y="5.15" width="6.3" height="2.52" fill="#bfe4b0" rx="1.26" stroke="#78c868" stroke-width="0.4"/><text x="77.13" y="7.09" font-size="1.9" fill="#fff" text-anchor="middle">1月</text><path d="M80.28 6.41L81.85 6.41" stroke="#cfe0c0" stroke-width="0.3" fill="none"/><path d="M81.85 3.58L81.85 9.24" stroke="#cfe0c0" stroke-width="0.3" fill="none"/><text x="83.43" y="4.36" font-size="1.73" fill="#777">哲学阅读</text><path d="M92.71 2.48L91.93 2.48L91.93 4.99L92.71 4.99" stroke="#b8d8a8" stroke-width="0.3" fill="none" stroke-linejoin="round"/><text x="93.18" y="3.05" font-size="1.57" fill="#888">书名</text><text x="93.18" y="5.56" font-size="1.57" fill="#666">每天阅读</text><path d="M93.18 5.62L99.48 5.62" stroke="#c4d8b4" stroke-width="0.25" fill="none"/><text x="83.43" y="9.62" font-size="1.47" fill="#777">社科阅</text><path d="M90.19 7.83L89.41 7.83L89.41 10.35L90.19 10.35" stroke="#b8d8a8" stroke-width="0.3" fill="none" stroke-linejoin="round"/><text x="90.67" y="8.23" font-size="1.1" fill="#888">书名</text><text x="90.67" y="10.92" font-size="1.57" fill="#666">每天阅读三十分</text><path d="M90.67 10.98L101.68 10.98" stroke="#c4d8b4" stroke-width="0.25" fill="none"/><path d="M71.62 18.52L73.98 18.52" stroke="#78c868" stroke-width="0.6" fill="none"/><rect x="73.98" y="17.26" width="6.3" height="2.52" fill="#bfe4b0" rx="1.26" stroke="#78c868" stroke-width="0.4"/><text x="77.13" y="19.2" font-size="1.9" fill="#fff" text-anchor="middle">2月</text><path d="M80.28 18.52L81.85 18.52" stroke="#cfe0c0" stroke-width="0.3" fill="none"/><path d="M81.85 15.68L81.85 21.35" stroke="#cfe0c0" stroke-width="0.3" fill="none"/><text x="83.43" y="16.37" font-size="1.47" fill="#777">社科阅</text><path d="M90.19 14.58L89.41 14.58L89.41 17.1L90.19 17.1" stroke="#b8d8a8" stroke-width="0.3" fill="none" stroke-linejoin="round"/><text x="90.67" y="14.98" font-size="1.1" fill="#888">书名</text><text x="90.67" y="17.67" font-size="1.57" fill="#666">每天阅读</text><path d="M90.67 17.73L96.96 17.73" stroke="#c4d8b4" stroke-width="0.25" fill="none"/><text x="83.43" y="21.72" font-size="1.47" fill="#777">艺术阅</text><path d="M90.19 19.93L89.41 19.93L89.41 22.45L90.19 22.45" stroke="#b8d8a8" stroke-width="0.3" fill="none" stroke-linejoin="round"/><text x="90.67" y="20.5" font-size="1.57" fill="#888">书名</text><text x="90.67" y="23.02" font-size="1.57" fill="#666">每天阅读</text><path d="M90.67 23.08L96.96 23.08" stroke="#c4d8b4" stroke-width="0.25" fill="none"/><path d="M71.62 30.62L73.98 30.62" stroke="#78c868" stroke-width="0.6" fill="none"/><rect x="73.98" y="29.36" width="6.3" height="2.52" fill="#bfe4b0" rx="1.26" stroke="#78c868" stroke-width="0.4"/><text x="77.13" y="31.3" font-size="1.9" fill="#fff" text-anchor="middle">3月</text><path d="M80.28 30.62L81.85 30.62" stroke="#cfe0c0" stroke-width="0.3" fill="none"/><path d="M81.85 27.79L81.85 33.45" stroke="#cfe0c0" stroke-width="0.3" fill="none"/><text x="83.43" y="28.62" font-size="1.89" fill="#777">历史阅</text><path d="M91.45 26.68L90.67 26.68L90.67 29.2L91.45 29.2" stroke="#b8d8a8" stroke-width="0.3" fill="none" stroke-linejoin="round"/><text x="91.93" y="27.33" font-size="1.8" fill="#888">书名</text><text x="91.93" y="29.71" font-size="1.42" fill="#666">每天阅读三十分钟做笔</text><path d="M91.93 29.83L106.09 29.83" stroke="#c4d8b4" stroke-width="0.25" fill="none"/><text x="83.43" y="33.83" font-size="1.47" fill="#777">管理阅</text><path d="M90.19 32.04L89.41 32.04L89.41 34.56L90.19 34.56" stroke="#b8d8a8" stroke-width="0.3" fill="none" stroke-linejoin="round"/><text x="90.67" y="32.44" font-size="1.1" fill="#888">书名</text><text x="90.67" y="35.08" font-size="1.44" fill="#666">每天阅读三十</text><path d="M90.67 35.18L99.32 35.18" stroke="#c4d8b4" stroke-width="0.25" fill="none"/><path d="M71.62 42.72L73.98 42.72" stroke="#78c868" stroke-width="0.6" fill="none"/><rect x="73.98" y="41.47" width="6.3" height="2.52" fill="#bfe4b0" rx="1.26" stroke="#78c868" stroke-width="0.4"/><text x="77.13" y="43.4" font-size="1.9" fill="#fff" text-anchor="middle">4月</text><path d="M80.28 42.72L81.85 42.72" stroke="#cfe0c0" stroke-width="0.3" fill="none"/><path d="M81.85 39.89L81.85 45.56" stroke="#cfe0c0" stroke-width="0.3" fill="none"/><text x="83.43" y="40.58" font-size="1.47" fill="#777">管理阅</text><path d="M90.19 38.79L89.41 38.79L89.41 41.31L90.19 41.31" stroke="#b8d8a8" stroke-width="0.3" fill="none" stroke-linejoin="round"/><text x="90.67" y="39.44" font-size="1.8" fill="#888">书名</text><text x="90.67" y="41.82" font-size="1.42" fill="#666">每天阅读三十分钟做笔</text><path d="M90.67 41.94L104.83 41.94" stroke="#c4d8b4" stroke-width="0.25" fill="none"/><text x="83.43" y="45.93" font-size="1.47" fill="#777">心理阅</text><path d="M90.19 44.14L89.41 44.14L89.41 46.66L90.19 46.66" stroke="#b8d8a8" stroke-width="0.3" fill="none" stroke-linejoin="round"/><text x="90.67" y="44.54" font-size="1.1" fill="#888">书名</text><text x="90.67" y="47.18" font-size="1.44" fill="#666">每天阅读三十</text><path d="M90.67 47.29L99.32 47.29" stroke="#c4d8b4" stroke-width="0.25" fill="none"/><path d="M71.62 54.83L73.98 54.83" stroke="#78c868" stroke-width="0.6" fill="none"/><rect x="73.98" y="53.57" width="6.3" height="2.52" fill="#bfe4b0" rx="1.26" stroke="#78c868" stroke-width="0.4"/><text x="77.13" y="55.51" font-size="1.9" fill="#fff" text-anchor="middle">5月</text><path d="M80.28 54.83L81.85 54.83" stroke="#cfe0c0" stroke-width="0.3" fill="none"/><path d="M81.85 52.0L81.85 57.66" stroke="#cfe0c0" stroke-width="0.3" fill="none"/><text x="83.43" y="52.77" font-size="1.73" fill="#777">艺术阅读</text><path d="M92.71 50.89L91.93 50.89L91.93 53.41L92.71 53.41" stroke="#b8d8a8" stroke-width="0.3" fill="none" stroke-linejoin="round"/><text x="93.18" y="51.29" font-size="1.1" fill="#888">书名</text><text x="93.18" y="53.98" font-size="1.57" fill="#666">每天阅读</text><path d="M93.18 54.04L99.48 54.04" stroke="#c4d8b4" stroke-width="0.25" fill="none"/><text x="83.43" y="58.13" font-size="1.73" fill="#777">社科阅读</text><path d="M92.71 56.25L91.93 56.25L91.93 58.76L92.71 58.76" stroke="#b8d8a8" stroke-width="0.3" fill="none" stroke-linejoin="round"/><text x="93.18" y="56.9" font-size="1.8" fill="#888">书名</text><text x="93.18" y="59.28" font-size="1.44" fill="#666">每天阅读三十</text><path d="M93.18 59.39L101.84 59.39" stroke="#c4d8b4" stroke-width="0.25" fill="none"/><path d="M71.62 66.93L73.98 66.93" stroke="#78c868" stroke-width="0.6" fill="none"/><rect x="73.98" y="65.67" width="6.3" height="2.52" fill="#bfe4b0" rx="1.26" stroke="#78c868" stroke-width="0.4"/><text x="77.13" y="67.61" font-size="1.9" fill="#fff" text-anchor="middle">6月</text><path d="M80.28 66.93L81.85 66.93" stroke="#cfe0c0" stroke-width="0.3" fill="none"/><path d="M81.85 64.1L81.85 69.77" stroke="#cfe0c0" stroke-width="0.3" fill="none"/><text x="83.43" y="64.79" font-size="1.47" fill="#777">管理阅</text><path d="M90.19 63.0L89.41 63.0L89.41 65.52L90.19 65.52" stroke="#b8d8a8" stroke-width="0.3" fill="none" stroke-linejoin="round"/><text x="90.67" y="63.65" font-size="1.8" fill="#888">书名</text><text x="90.67" y="66.04" font-size="1.44" fill="#666">每天阅读三十</text><path d="M90.67 66.15L99.32 66.15" stroke="#c4d8b4" stroke-width="0.25" fill="none"/><text x="83.43" y="70.23" font-size="1.73" fill="#777">历史阅读</text><path d="M92.71 68.35L91.93 68.35L91.93 70.87L92.71 70.87" stroke="#b8d8a8" stroke-width="0.3" fill="none" stroke-linejoin="round"/><text x="93.18" y="69.0" font-size="1.8" fill="#888">书名</text><text x="93.18" y="71.44" font-size="1.57" fill="#666">每天阅读</text><path d="M93.18 71.5L99.48 71.5" stroke="#c4d8b4" stroke-width="0.25" fill="none"/><path d="M71.62 79.04L73.98 79.04" stroke="#78c868" stroke-width="0.6" fill="none"/><rect x="73.98" y="77.78" width="6.3" height="2.52" fill="#bfe4b0" rx="1.26" stroke="#78c868" stroke-width="0.4"/><text x="77.13" y="79.72" font-size="1.9" fill="#fff" text-anchor="middle">7月</text><path d="M80.28 79.04L81.85 79.04" stroke="#cfe0c0" stroke-width="0.3" fill="none"/><path d="M81.85 76.2L81.85 81.87" stroke="#cfe0c0" stroke-width="0.3" fill="none"/><text x="83.43" y="76.89" font-size="1.47" fill="#777">管理阅</text><path d="M90.19 75.1L89.41 75.1L89.41 77.62L90.19 77.62" stroke="#b8d8a8" stroke-width="0.3" fill="none" stroke-linejoin="round"/><text x="90.67" y="75.5" font-size="1.1" fill="#888">书名</text><text x="90.67" y="78.13" font-size="1.42" fill="#666">每天阅读三十分钟做笔</text><path d="M90.67 78.25L104.83 78.25" stroke="#c4d8b4" stroke-width="0.25" fill="none"/><text x="83.43" y="82.43" font-size="2.0" fill="#777">科技阅读</text><path d="M95.23 80.45L94.44 80.45L94.44 82.97L95.23 82.97" stroke="#b8d8a8" stroke-width="0.3" fill="none" stroke-linejoin="round"/><text x="95.7" y="81.02" font-size="1.57" fill="#888">书名</text><text x="95.7" y="83.48" font-size="1.42" fill="#666">每天阅读三十分钟做笔</text><path d="M95.7 83.6L109.87 83.6" stroke="#c4d8b4" stroke-width="0.25" fill="none"/><path d="M71.62 91.14L73.98 91.14" stroke="#78c868" stroke-width="0.6" fill="none"/><rect x="73.98" y="89.88" width="6.3" height="2.52" fill="#bfe4b0" rx="1.26" stroke="#78c868" stroke-width="0.4"/><text x="77.13" y="91.82" font-size="1.9" fill="#fff" text-anchor="middle">8月</text><path d="M80.28 91.14L81.85 91.14" stroke="#cfe0c0" stroke-width="0.3" fill="none"/><path d="M81.85 88.31L81.85 93.98" stroke="#cfe0c0" stroke-width="0.3" fill="none"/><text x="83.43" y="89.09" font-size="1.73" fill="#777">经济阅读</text><path d="M92.71 87.21L91.93 87.21L91.93 89.73L92.71 89.73" stroke="#b8d8a8" stroke-width="0.3" fill="none" stroke-linejoin="round"/><text x="93.18" y="87.61" font-size="1.1" fill="#888">书名</text><text x="93.18" y="90.25" font-size="1.44" fill="#666">每天阅读三十</text><path d="M93.18 90.36L101.84 90.36" stroke="#c4d8b4" stroke-width="0.25" fill="none"/><text x="83.43" y="94.5" font-size="1.89" fill="#777">历史阅</text><path d="M91.45 92.56L90.67 92.56L90.67 95.08L91.45 95.08" stroke="#b8d8a8" stroke-width="0.3" fill="none" stroke-linejoin="round"/><text x="91.93" y="93.21" font-size="1.8" fill="#888">书名</text><text x="91.93" y="95.65" font-size="1.57" fill="#666">每天阅读三十分</text><path d="M91.93 95.71L102.94 95.71" stroke="#c4d8b4" stroke-width="0.25" fill="none"/><path d="M71.62 103.25L73.98 103.25" stroke="#78c868" stroke-width="0.6" fill="none"/><rect x="73.98" y="101.99" width="6.3" height="2.52" fill="#bfe4b0" rx="1.26" stroke="#78c868" stroke-width="0.4"/><text x="77.13" y="103.93" font-size="1.9" fill="#fff" text-anchor="middle">9月</text><path d="M80.28 103.25L81.85 103.25" stroke="#cfe0c0" stroke-width="0.3" fill="none"/><path d="M81.85 100.41L81.85 106.08" stroke="#cfe0c0" stroke-width="0.3" fill="none"/><text x="83.43" y="101.29" font-size="2.0" fill="#777">科技阅读</text><path d="M95.23 99.31L94.44 99.31L94.44 101.83L95.23 101.83" stroke="#b8d8a8" stroke-width="0.3" fill="none" stroke-linejoin="round"/><text x="95.7" y="99.96" font-size="1.8" fill="#888">书名</text><text x="95.7" y="102.34" font-size="1.42" fill="#666">每天阅读三十分钟做笔</text><path d="M95.7 102.46L109.87 102.46" stroke="#c4d8b4" stroke-width="0.25" fill="none"/><text x="83.43" y="106.54" font-size="1.73" fill="#777">管理阅读</text><path d="M92.71 104.66L91.93 104.66L91.93 107.18L92.71 107.18" stroke="#b8d8a8" stroke-width="0.3" fill="none" stroke-linejoin="round"/><text x="93.18" y="105.06" font-size="1.1" fill="#888">书名</text><text x="93.18" y="107.75" font-size="1.57" fill="#666">每天阅读</text><path d="M93.18 107.81L99.48 107.81" stroke="#c4d8b4" stroke-width="0.25" fill="none"/><path d="M71.62 115.35L73.98 115.35" stroke="#78c868" stroke-width="0.6" fill="none"/><rect x="73.98" y="114.09" width="6.3" height="2.52" fill="#bfe4b0" rx="1.26" stroke="#78c868" stroke-width="0.4"/><text x="77.13" y="116.03" font-size="1.9" fill="#fff" text-anchor="middle">10月</text><path d="M80.28 115.35L81.85 115.35" stroke="#cfe0c0" stroke-width="0.3" fill="none"/><path d="M81.85 112.52L81.85 118.19" stroke="#cfe0c0" stroke-width="0.3" fill="none"/><text x="83.43" y="113.4" font-size="2.0" fill="#777">哲学阅读</text><path d="M95.23 111.42L94.44 111.42L94.44 113.94L95.23 113.94" stroke="#b8d8a8" stroke-width="0.3" fill="none" stroke-linejoin="round"/><text x="95.7" y="111.99" font-size="1.57" fill="#888">书名</text><text x="95.7" y="114.46" font-size="1.44" fill="#666">每天阅读三十</text><path d="M95.7 114.56L104.36 114.56" stroke="#c4d8b4" stroke-width="0.25" fill="none"/><text x="83.43" y="118.75" font-size="2.0" fill="#777">艺术阅读</text><path d="M95.23 116.77L94.44 116.77L94.44 119.29L95.23 119.29" stroke="#b8d8a8" stroke-width="0.3" fill="none" stroke-linejoin="round"/><text x="95.7" y="117.17" font-size="1.1" fill="#888">书名</text><text x="95.7" y="119.86" font-size="1.57" fill="#666">每天阅读</text><path d="M95.7 119.92L102.0 119.92" stroke="#c4d8b4" stroke-width="0.25" fill="none"/><path d="M71.62 126.2Q71.62 127.46 72.88 127.46L73.98 127.46" fill="none" stroke="#78c868" stroke-width=".6"/><rect x="73.98" y="126.2" width="6.3" height="2.52" fill="#bfe4b0" rx="1.26" stroke="#78c868" stroke-width="0.4"/><text x="77.13" y="128.14" font-size="1.9" fill="#fff" text-anchor="middle">11月</text><path d="M80.28 127.46L81.85 127.46" stroke="#cfe0c0" stroke-width="0.3" fill="none"/><path d="M81.85 124.62L81.85 130.29" stroke="#cfe0c0" stroke-width="0.3" fill="none"/><text x="83.43" y="125.4" font-size="1.73" fill="#777">科技阅读</text><path d="M92.71 123.52L91.93 123.52L91.93 126.04L92.71 126.04" stroke="#b8d8a8" stroke-width="0.3" fill="none" stroke-linejoin="round"/><text x="93.18" y="124.17" font-size="1.8" fill="#888">书名</text><text x="93.18" y="126.61" font-size="1.57" fill="#666">每天阅读三十分</text><path d="M93.18 126.67L104.2 126.67" stroke="#c4d8b4" stroke-width="0.25" fill="none"/><text x="83.43" y="130.85" font-size="2.0" fill="#777">管理阅读</text><path d="M95.23 128.87L94.44 128.87L94.44 131.39L95.23 131.39" stroke="#b8d8a8" stroke-width="0.3" fill="none" stroke-linejoin="round"/><text x="95.7" y="129.44" font-size="1.57" fill="#888">书名</text><text x="95.7" y="131.96" font-size="1.57" fill="#666">每天阅读</text><path d="M95.7 132.02L102.0 132.02" stroke="#c4d8b4" stroke-width="0.25" fill="none"/><rect x="56.67" y="70.95" width="13.54" height="3.78" fill="#74c864" rx="1.89"/><text x="63.43" y="73.39" font-size="1.52" fill="#fff" text-anchor="middle" font-weight="bold">2022年读书计划</text><path d="M70.2 72.84L71.62 72.84" stroke="#78c868" stroke-width="0.6" fill="none"/></svg></div><div class="cap">2022年读书计划</div></div>
<div class="card" style="left:716.40px;top:245.40px"><div class="im"><svg viewBox="-1 -1 167 133" font-family='"Liberation Sans","Noto Sans CJK SC",sans-serif'><rect x="-1" y="-1" width="167" height="133" fill="#ffffff"/><path d="M84.56 72.95L83.96 68.57L83.2 64.54L82.31 60.85L81.31 57.52L80.21 54.52L79.03 51.86L77.79 49.52L76.51 47.5L75.2 45.8L73.89 44.42L72.59 43.33L71.33 42.55L70.1 42.06L68.95 41.86L68.94 42.11L70.02 42.33L71.18 42.83L72.39 43.61L73.63 44.69L74.89 46.07L76.14 47.76L77.37 49.76L78.57 52.08L79.7 54.72L80.76 57.7L81.72 61.01L82.57 64.67L83.29 68.67L83.86 73.03Z" stroke="#1a1a1a" stroke-width="0.1" fill="#1a1a1a" stroke-linejoin="round"/><path d="M89.29 73.03L89.83 67.66L90.49 62.68L91.26 58.09L92.12 53.89L93.07 50.08L94.1 46.66L95.2 43.63L96.36 40.99L97.58 38.75L98.85 36.9L100.15 35.45L101.48 34.4L102.84 33.73L104.21 33.45L104.2 33.2L102.75 33.46L101.32 34.13L99.91 35.2L98.55 36.67L97.23 38.53L95.96 40.79L94.75 43.45L93.61 46.5L92.54 49.93L91.56 53.76L90.66 57.98L89.86 62.59L89.16 67.58L88.58 72.96Z" stroke="#1a1a1a" stroke-width="0.1" fill="#1a1a1a" stroke-linejoin="round"/><path d="M61.39 41.98C59.18 41.98 59.81 5.31 57.61 5.31" stroke="#555" stroke-width="0.35" fill="none" stroke-linecap="round"/><path d="M61.39 41.98C59.18 41.98 59.81 31.28 57.61 31.28" stroke="#555" stroke-width="0.35" fill="none" stroke-linecap="round"/><path d="M61.39 41.98C59.18 41.98 59.81 63.86 57.61 63.86" stroke="#555" stroke-width="0.35" fill="none" stroke-linecap="round"/><path d="M61.39 41.98C59.18 41.98 59.81 78.5 57.61 78.5" stroke="#555" stroke-width="0.35" fill="none" stroke-linecap="round"/><text x="56.67" y="5.87" font-size="1.55" fill="#444" text-anchor="end">聚焦目标, 不贪多</text><text x="56.67" y="31.85" font-size="1.59" fill="#444" text-anchor="end">设定的O 4-5个KR</text><text x="56.67" y="64.51" font-size="1.81" fill="#444" text-anchor="end">核心: 专一、优化、跟随</text><text x="56.67" y="79.07" font-size="1.57" fill="#444" text-anchor="end">透明</text><path d="M42.03 31.28C39.82 31.28 40.45 12.08 38.25 12.08" stroke="#555" stroke-width="0.35" fill="none" stroke-linecap="round"/><path d="M42.03 31.28C39.82 31.28 40.45 18.69 38.25 18.69" stroke="#555" stroke-width="0.35" fill="none" stroke-linecap="round"/><path d="M42.03 31.28C39.82 31.28 40.45 24.98 38.25 24.98" stroke="#555" stroke-width="0.35" fill="none" stroke-linecap="round"/><path d="M42.03 31.28C39.82 31.28 40.45 31.28 38.25 31.28" stroke="#555" stroke-width="0.35" fill="none" stroke-linecap="round"/><path d="M42.03 31.28C39.82 31.28 40.45 37.58 38.25 37.58" stroke="#555" stroke-width="0.35" fill="none" stroke-linecap="round"/><path d="M42.03 31.28C39.82 31.28 40.45 50.48 38.25 50.48" stroke="#555" stroke-width="0.35" fill="none" stroke-linecap="round"/><text x="37.78" y="12.72" font-size="1.79" fill="#444" text-anchor="end">1. 具体清晰: 不行</text><text x="37.78" y="19.37" font-size="1.88" fill="#444" text-anchor="end">2. 能够衡量: 有时</text><text x="37.78" y="25.63" font-size="1.8" fill="#444" text-anchor="end">3. 有挑战性</text><text x="37.78" y="31.93" font-size="1.8" fill="#444" text-anchor="end">4. 自我驱动</text><text x="37.78" y="38.23" font-size="1.8" fill="#444" text-anchor="end">5. 有时间性</text><text x="37.78" y="51.27" font-size="2.2" fill="#444" text-anchor="end">追踪 OKR 公平性</text><path d="M16.53 50.48C14.95 50.48 15.58 44.35 14.01 44.35" stroke="#555" stroke-width="0.35" fill="none" stroke-linecap="round"/><path d="M16.53 50.48C14.95 50.48 15.58 50.48 14.01 50.48" stroke="#555" stroke-width="0.35" fill="none" stroke-linecap="round"/><path d="M16.53 50.48C14.95 50.48 15.58 56.94 14.01 56.94" stroke="#555" stroke-width="0.35" fill="none" stroke-linecap="round"/><text x="7.08" y="44.92" font-size="1.57" fill="#444">公开性</text><text x="7.08" y="51.27" font-size="2.2" fill="#444">透明度</text><text x="7.08" y="57.51" font-size="1.57" fill="#444">个人化</text><rect x="62.65" y="40.41" width="6.3" height="3.46" fill="#dedede" rx="0.31"/><text x="65.8" y="42.97" font-size="2.3" fill="#333" text-anchor="middle">原则</text><path d="M118.05 33.33C120.26 33.33 119.63 12.08 121.83 12.08" stroke="#555" stroke-width="0.35" fill="none" stroke-linecap="round"/><path d="M118.05 33.33C120.26 33.33 119.63 25.3 121.83 25.3" stroke="#555" stroke-width="0.35" fill="none" stroke-linecap="round"/><path d="M118.05 33.33C120.26 33.33 119.63 54.58 121.83 54.58" stroke="#555" stroke-width="0.35" fill="none" stroke-linecap="round"/><text x="123.56" y="12.73" font-size="1.81" fill="#444">概念</text><text x="123.56" y="25.81" font-size="1.41" fill="#444">O = Objective</text><text x="123.56" y="55.15" font-size="1.57" fill="#444">特点</text><path d="M135.05 25.3C137.26 25.3 136.63 19.16 138.83 19.16" stroke="#555" stroke-width="0.35" fill="none" stroke-linecap="round"/><path d="M135.05 25.3C137.26 25.3 136.63 25.3 138.83 25.3" stroke="#555" stroke-width="0.35" fill="none" stroke-linecap="round"/><path d="M135.05 25.3C137.26 25.3 136.63 31.75 138.83 31.75" stroke="#555" stroke-width="0.35" fill="none" stroke-linecap="round"/><text x="140.09" y="19.75" font-size="1.65" fill="#444">目标关键</text><text x="140.09" y="25.89" font-size="1.65" fill="#444">目标关键</text><text x="140.09" y="32.34" font-size="1.65" fill="#444">义和方法</text><path d="M127.97 54.58C130.17 54.58 129.55 44.98 131.75 44.98" stroke="#555" stroke-width="0.35" fill="none" stroke-linecap="round"/><path d="M127.97 54.58C130.17 54.58 129.55 64.34 131.75 64.34" stroke="#555" stroke-width="0.35" fill="none" stroke-linecap="round"/><text x="133.01" y="45.63" font-size="1.81" fill="#444">公开</text><text x="133.01" y="64.99" font-size="1.81" fill="#444">目标</text><path d="M137.89 44.98C139.78 44.98 139.15 38.36 141.04 38.36" stroke="#555" stroke-width="0.35" fill="none" stroke-linecap="round"/><path d="M137.89 44.98C139.78 44.98 139.15 44.98 141.04 44.98" stroke="#555" stroke-width="0.35" fill="none" stroke-linecap="round"/><path d="M137.89 44.98C139.78 44.98 139.15 51.27 141.04 51.27" stroke="#555" stroke-width="0.35" fill="none" stroke-linecap="round"/><text x="142.45" y="39.01" font-size="1.81" fill="#444">透明</text><text x="142.45" y="45.69" font-size="1.97" fill="#444">统一</text><text x="142.45" y="51.91" font-size="1.77" fill="#444">共同成长</text><path d="M137.89 64.34C139.78 64.34 139.15 58.04 141.04 58.04" stroke="#555" stroke-width="0.35" fill="none" stroke-linecap="round"/><path d="M137.89 64.34C139.78 64.34 139.15 64.34 141.04 64.34" stroke="#555" stroke-width="0.35" fill="none" stroke-linecap="round"/><path d="M137.89 64.34C139.78 64.34 139.15 70.63 141.04 70.63" stroke="#555" stroke-width="0.35" fill="none" stroke-linecap="round"/><text x="142.45" y="58.75" font-size="1.97" fill="#444">短期</text><text x="142.45" y="65.02" font-size="1.88" fill="#444">有野心, 可衡量</text><text x="142.45" y="71.42" font-size="2.2" fill="#444">自下而上</text><rect x="104.2" y="31.75" width="13.54" height="3.46" fill="#dedede" rx="0.31"/><text x="110.97" y="34.31" font-size="2.3" fill="#333" text-anchor="middle">OKR是什么</text><path d="M83.86 80.21L83.48 83.89L82.98 87.38L82.37 90.66L81.65 93.74L80.82 96.6L79.88 99.23L78.84 101.62L77.7 103.76L76.47 105.64L75.14 107.25L73.72 108.59L72.21 109.63L70.61 110.37L68.92 110.81L68.96 111.06L70.7 110.64L72.36 109.9L73.93 108.86L75.41 107.52L76.8 105.89L78.09 104.0L79.27 101.84L80.36 99.43L81.34 96.77L82.21 93.89L82.97 90.79L83.62 87.48L84.15 83.97L84.56 80.28Z" stroke="#1a1a1a" stroke-width="0.1" fill="#1a1a1a" stroke-linejoin="round"/><path d="M91.28 80.37L91.94 81.91L92.65 83.35L93.42 84.68L94.24 85.9L95.11 87.02L96.02 88.03L96.98 88.92L97.98 89.71L99.02 90.4L100.09 90.97L101.19 91.43L102.32 91.79L103.48 92.04L104.66 92.18L104.69 91.92L103.53 91.76L102.41 91.48L101.31 91.11L100.26 90.63L99.23 90.04L98.25 89.35L97.3 88.56L96.39 87.67L95.53 86.67L94.71 85.57L93.94 84.36L93.22 83.05L92.55 81.64L91.94 80.12Z" stroke="#1a1a1a" stroke-width="0.1" fill="#1a1a1a" stroke-linejoin="round"/><path d="M88.58 80.27L88.99 85.55L89.53 90.47L90.17 95.01L90.93 99.17L91.79 102.96L92.76 106.37L93.83 109.39L94.99 112.04L96.25 114.3L97.61 116.17L99.05 117.65L100.58 118.74L102.2 119.43L103.88 119.72L103.9 119.47L102.28 119.16L100.74 118.47L99.28 117.39L97.9 115.93L96.61 114.08L95.39 111.84L94.27 109.22L93.25 106.21L92.32 102.83L91.49 99.06L90.77 94.91L90.16 90.39L89.67 85.49L89.29 80.22Z" stroke="#1a1a1a" stroke-width="0.1" fill="#1a1a1a" stroke-linejoin="round"/><path d="M51.63 78.51C49.74 78.51 50.37 70.8 48.48 70.8" stroke="#555" stroke-width="0.35" fill="none" stroke-linecap="round"/><path d="M51.63 78.51C49.74 78.51 50.37 77.1 48.48 77.1" stroke="#555" stroke-width="0.35" fill="none" stroke-linecap="round"/><path d="M51.63 78.51C49.74 78.51 50.37 87.17 48.48 87.17" stroke="#555" stroke-width="0.35" fill="none" stroke-linecap="round"/><text x="46.91" y="71.38" font-size="1.61" fill="#444" text-anchor="end">对他人目标的可见, 减少内耗, 公开好处, 沟通</text><text x="46.91" y="77.8" font-size="1.96" fill="#444" text-anchor="end">减少无效沟通, 便于团队协作</text><text x="46.91" y="87.79" font-size="1.73" fill="#444" text-anchor="end">公开回顾留存</text><path d="M34.94 87.17C33.06 87.17 33.68 83.71 31.8 83.71" stroke="#555" stroke-width="0.35" fill="none" stroke-linecap="round"/><path d="M34.94 87.17C33.06 87.17 33.68 90.0 31.8 90.0" stroke="#555" stroke-width="0.35" fill="none" stroke-linecap="round"/><text x="29.91" y="84.41" font-size="1.93" fill="#444" text-anchor="end">所有人都知道彼此的目标</text><text x="29.91" y="90.63" font-size="1.74" fill="#444" text-anchor="end">OKR的回顾是半公开, 防止面向考核</text><path d="M56.51 110.94C54.31 110.94 54.93 98.35 52.73 98.35" stroke="#555" stroke-width="0.35" fill="none" stroke-linecap="round"/><path d="M56.51 110.94C54.31 110.94 54.93 104.64 52.73 104.64" stroke="#555" stroke-width="0.35" fill="none" stroke-linecap="round"/><path d="M56.51 110.94C54.31 110.94 54.93 110.94 52.73 110.94" stroke="#555" stroke-width="0.35" fill="none" stroke-linecap="round"/><path d="M56.51 110.94C54.31 110.94 54.93 117.23 52.73 117.23" stroke="#555" stroke-width="0.35" fill="none" stroke-linecap="round"/><path d="M56.51 110.94C54.31 110.94 54.93 123.53 52.73 123.53" stroke="#555" stroke-width="0.35" fill="none" stroke-linecap="round"/><text x="51.94" y="98.98" font-size="1.75" fill="#444" text-anchor="end">1. 对齐上</text><text x="51.94" y="105.37" font-size="2.04" fill="#444" text-anchor="end">2. 设O</text><text x="51.94" y="111.61" font-size="1.85" fill="#444" text-anchor="end">3. 上线、跟进追踪</text><text x="51.94" y="117.9" font-size="1.85" fill="#444" text-anchor="end">4. 每一个季度复盘</text><text x="51.94" y="124.19" font-size="1.85" fill="#444" text-anchor="end">5. 评分和再设定</text><rect x="57.45" y="109.21" width="11.49" height="3.46" fill="#dedede" rx="0.31"/><text x="63.2" y="111.77" font-size="2.3" fill="#333" text-anchor="middle">制定步骤</text><path d="M111.13 92.05C113.33 92.05 112.7 78.67 114.91 78.67" stroke="#555" stroke-width="0.35" fill="none" stroke-linecap="round"/><path d="M111.13 92.05C113.33 92.05 112.7 88.74 114.91 88.74" stroke="#555" stroke-width="0.35" fill="none" stroke-linecap="round"/><path d="M111.13 92.05C113.33 92.05 112.7 98.66 114.91 98.66" stroke="#555" stroke-width="0.35" fill="none" stroke-linecap="round"/><path d="M111.13 92.05C113.33 92.05 112.7 104.96 114.91 104.96" stroke="#555" stroke-width="0.35" fill="none" stroke-linecap="round"/><text x="116.48" y="79.32" font-size="1.81" fill="#444">核心: 专注、透明、坦诚</text><text x="116.48" y="89.36" font-size="1.73" fill="#444">目标</text><text x="116.48" y="99.28" font-size="1.73" fill="#444">公开</text><text x="116.48" y="105.6" font-size="1.77" fill="#444">绩效考核</text><path d="M120.73 88.74C122.62 88.74 121.99 85.6 123.88 85.6" stroke="#555" stroke-width="0.35" fill="none" stroke-linecap="round"/><path d="M120.73 88.74C122.62 88.74 121.99 92.05 123.88 92.05" stroke="#555" stroke-width="0.35" fill="none" stroke-linecap="round"/><text x="125.92" y="86.22" font-size="1.73" fill="#444">过多</text><text x="125.92" y="92.67" font-size="1.73" fill="#444">过易</text><rect x="104.67" y="90.32" width="5.51" height="3.15" fill="#dedede" rx="0.31"/><text x="107.43" y="92.6" font-size="1.97" fill="#333" text-anchor="middle">误区</text><path d="M121.2 119.6C123.41 119.6 122.78 113.3 124.98 113.3" stroke="#555" stroke-width="0.35" fill="none" stroke-linecap="round"/><path d="M121.2 119.6C123.41 119.6 122.78 119.6 124.98 119.6" stroke="#555" stroke-width="0.35" fill="none" stroke-linecap="round"/><path d="M121.2 119.6C123.41 119.6 122.78 125.89 124.98 125.89" stroke="#555" stroke-width="0.35" fill="none" stroke-linecap="round"/><text x="125.92" y="113.95" font-size="1.79" fill="#444">核心: 成长, 而不是考核</text><text x="125.92" y="120.32" font-size="1.99" fill="#444">案例: 谷歌产品</text><text x="125.92" y="126.62" font-size="2.02" fill="#444">示范: 定O原则, 量化KR</text><rect x="103.89" y="118.02" width="16.53" height="3.46" fill="#dedede" rx="0.31"/><text x="112.15" y="120.58" font-size="2.3" fill="#333" text-anchor="middle">案例（示范）</text><rect x="76.34" y="72.69" width="20.46" height="7.87" fill="#f60808" rx="0.47"/><text x="86.73" y="77.66" font-size="2.9" fill="#fff" text-anchor="middle" font-weight="bold">OKR制定</text></svg></div><div class="cap">如何制定OKR</div></div>
<div class="card" style="left:896.70px;top:245.40px"><div class="im"><svg viewBox="-1 -1 167 133" font-family='"Liberation Sans","Noto Sans CJK SC",sans-serif'><defs><linearGradient id="g9" x1="0" y1="0" x2="0" y2="1"><stop offset="0" stop-color="#f9e8f8"/><stop offset=".45" stop-color="#f0ecf7"/><stop offset=".8" stop-color="#e4f8f4"/><stop offset="1" stop-color="#e0fbf3"/></linearGradient></defs><rect x="-1" y="-1" width="167" height="133" fill="url(#g9)"/><path d="M82.43 65.7C80.85 46.56 73.77 36.26 64.32 36.26" stroke="#6977b8" stroke-width="0.45" fill="none" stroke-linecap="round"/><path d="M82.43 65.7C80.85 55.47 72.98 49.96 63.54 49.96" stroke="#6977b8" stroke-width="0.45" fill="none" stroke-linecap="round"/><path d="M82.43 65.7C80.85 64.67 73.77 64.12 64.32 64.12" stroke="#6977b8" stroke-width="0.45" fill="none" stroke-linecap="round"/><path d="M82.43 65.7C80.85 73.88 73.3 78.29 63.85 78.29" stroke="#6977b8" stroke-width="0.45" fill="none" stroke-linecap="round"/><path d="M82.43 65.7C80.85 84.73 73.3 94.98 63.85 94.98" stroke="#6977b8" stroke-width="0.45" fill="none" stroke-linecap="round"/><path d="M82.43 65.7C84.0 45.54 91.08 34.69 100.53 34.69" stroke="#6977b8" stroke-width="0.45" fill="none" stroke-linecap="round"/><path d="M82.43 65.7C84.0 59.05 91.08 55.47 100.53 55.47" stroke="#6977b8" stroke-width="0.45" fill="none" stroke-linecap="round"/><path d="M82.43 65.7C84.0 68.87 91.55 70.58 101.0 70.58" stroke="#6977b8" stroke-width="0.45" fill="none" stroke-linecap="round"/><path d="M82.43 65.7C84.0 76.95 91.55 83.01 101.0 83.01" stroke="#6977b8" stroke-width="0.45" fill="none" stroke-linecap="round"/><path d="M82.43 65.7C84.0 87.9 91.08 99.85 100.53 99.85" stroke="#6977b8" stroke-width="0.45" fill="none" stroke-linecap="round"/><path d="M47.01 36.26C45.75 36.26 45.91 35.79 43.7 35.79" stroke="#c4c6e0" stroke-width="0.35" fill="none" stroke-linecap="round"/><path d="M16.63 35.79L43.7 35.79" stroke="#c4c6e0" stroke-width="0.35" fill="none"/><text x="41.5" y="34.64" font-size="2.04" fill="#3a4066" text-anchor="end">揭示封建孝道 虚伪与残酷</text><path d="M47.01 36.26C45.75 36.26 45.91 40.2 43.7 40.2" stroke="#c4c6e0" stroke-width="0.35" fill="none" stroke-linecap="round"/><path d="M16.63 40.2L43.7 40.2" stroke="#c4c6e0" stroke-width="0.35" fill="none"/><text x="41.5" y="38.94" font-size="1.74" fill="#3a4066" text-anchor="end">批判封建孝道 同情儿童的不幸</text><path d="M50.94 49.96C49.68 49.96 49.68 49.17 47.48 49.17" stroke="#c4c6e0" stroke-width="0.35" fill="none" stroke-linecap="round"/><path d="M19.78 49.17L47.48 49.17" stroke="#c4c6e0" stroke-width="0.35" fill="none"/><text x="45.28" y="47.95" font-size="1.86" fill="#3a4066" text-anchor="end">记叙儿时盼望观看迎神赛会的</text><path d="M50.94 49.96C49.68 49.96 49.68 54.36 47.48 54.36" stroke="#c4c6e0" stroke-width="0.35" fill="none" stroke-linecap="round"/><path d="M7.97 54.36L47.48 54.36" stroke="#c4c6e0" stroke-width="0.35" fill="none"/><text x="45.28" y="53.09" font-size="1.71" fill="#3a4066" text-anchor="end">急切 兴奋的心情 和被父亲强迫背诵鉴略的扫兴</text><path d="M47.01 64.12C45.75 64.12 45.91 63.65 43.7 63.65" stroke="#c4c6e0" stroke-width="0.35" fill="none" stroke-linecap="round"/><path d="M11.12 63.65L43.7 63.65" stroke="#c4c6e0" stroke-width="0.35" fill="none"/><text x="41.5" y="62.52" font-size="2.1" fill="#3a4066" text-anchor="end">严谨 正直 热诚 没有民族偏见</text><path d="M47.01 64.12C45.75 64.12 45.91 68.53 43.7 68.53" stroke="#c4c6e0" stroke-width="0.35" fill="none" stroke-linecap="round"/><path d="M32.06 68.53L43.7 68.53" stroke="#c4c6e0" stroke-width="0.35" fill="none"/><text x="41.5" y="67.38" font-size="2.05" fill="#3a4066" text-anchor="end">弃医从文</text><path d="M49.37 78.29C48.11 78.29 47.8 77.5 45.59 77.5" stroke="#c4c6e0" stroke-width="0.35" fill="none" stroke-linecap="round"/><path d="M24.5 77.5L45.59 77.5" stroke="#c4c6e0" stroke-width="0.35" fill="none"/><text x="43.39" y="76.32" font-size="1.96" fill="#3a4066" text-anchor="end">追叙作者在日本留学</text><path d="M49.37 78.29C48.11 78.29 47.8 82.54 45.59 82.54" stroke="#c4c6e0" stroke-width="0.35" fill="none" stroke-linecap="round"/><path d="M12.69 82.54L45.59 82.54" stroke="#c4c6e0" stroke-width="0.35" fill="none"/><text x="43.39" y="81.27" font-size="1.73" fill="#3a4066" text-anchor="end">对旧民主革命的失望和对范爱农的同情</text><path d="M50.16 94.98C48.9 94.98 49.06 91.67 46.85 91.67" stroke="#c4c6e0" stroke-width="0.35" fill="none" stroke-linecap="round"/><path d="M24.5 91.67L46.85 91.67" stroke="#c4c6e0" stroke-width="0.35" fill="none"/><text x="44.65" y="90.42" font-size="1.79" fill="#3a4066" text-anchor="end">无常是人情味的鬼 爽直</text><path d="M50.16 94.98C48.9 94.98 49.06 96.55 46.85 96.55" stroke="#c4c6e0" stroke-width="0.35" fill="none" stroke-linecap="round"/><path d="M15.06 96.55L46.85 96.55" stroke="#c4c6e0" stroke-width="0.35" fill="none"/><text x="44.65" y="95.3" font-size="1.77" fill="#3a4066" text-anchor="end">讽刺生活中的人格不如鬼的正人君子</text><path d="M50.16 94.98C48.9 94.98 49.06 101.9 46.85 101.9" stroke="#c4c6e0" stroke-width="0.35" fill="none" stroke-linecap="round"/><path d="M28.43 101.9L46.85 101.9" stroke="#c4c6e0" stroke-width="0.35" fill="none"/><text x="44.65" y="100.72" font-size="1.98" fill="#3a4066" text-anchor="end">活泼而诙谐 公正</text><path d="M117.05 34.69C118.31 34.69 120.83 33.74 122.41 33.74" stroke="#c4c6e0" stroke-width="0.35" fill="none" stroke-linecap="round"/><path d="M122.41 33.74L137.99 33.74" stroke="#c4c6e0" stroke-width="0.35" fill="none"/><text x="123.35" y="32.55" font-size="1.91" fill="#3a4066">对弱小者的同情</text><path d="M117.05 34.69C118.31 34.69 120.83 38.62 122.41 38.62" stroke="#c4c6e0" stroke-width="0.35" fill="none" stroke-linecap="round"/><path d="M122.41 38.62L137.99 38.62" stroke="#c4c6e0" stroke-width="0.35" fill="none"/><text x="123.35" y="37.42" font-size="1.91" fill="#3a4066">对暴虐者的憎恨</text><path d="M121.78 55.47C123.04 55.47 123.19 53.58 124.77 53.58" stroke="#c4c6e0" stroke-width="0.35" fill="none" stroke-linecap="round"/><path d="M124.77 53.58L133.27 53.58" stroke="#c4c6e0" stroke-width="0.35" fill="none"/><text x="125.71" y="52.31" font-size="1.71" fill="#3a4066">1. 阿长</text><path d="M121.78 55.47C123.04 55.47 123.19 60.98 124.77 60.98" stroke="#c4c6e0" stroke-width="0.35" fill="none" stroke-linecap="round"/><path d="M124.77 60.98L145.07 60.98" stroke="#c4c6e0" stroke-width="0.35" fill="none"/><text x="125.71" y="59.85" font-size="2.1" fill="#3a4066">善良 朴实 关心</text><path d="M132.8 52.95C134.68 52.95 135.31 51.53 137.52 51.53" stroke="#c4c6e0" stroke-width="0.35" fill="none" stroke-linecap="round"/><path d="M137.52 51.53L154.83 51.53" stroke="#c4c6e0" stroke-width="0.35" fill="none"/><text x="138.78" y="50.4" font-size="2.1" fill="#3a4066">粗俗 守旧 好事</text><path d="M132.8 52.95C134.68 52.95 135.31 55.78 137.52 55.78" stroke="#c4c6e0" stroke-width="0.35" fill="none" stroke-linecap="round"/><path d="M137.52 55.78L158.77 55.78" stroke="#c4c6e0" stroke-width="0.35" fill="none"/><text x="138.78" y="54.54" font-size="1.82" fill="#3a4066">愚昧 满肚子的麻烦礼节</text><path d="M120.2 70.58C121.46 70.58 123.98 69.95 125.55 69.95" stroke="#c4c6e0" stroke-width="0.35" fill="none" stroke-linecap="round"/><path d="M125.55 69.95L163.96 69.95" stroke="#c4c6e0" stroke-width="0.35" fill="none"/><text x="126.5" y="68.67" font-size="1.7" fill="#3a4066">巫医不分 故弄玄虚 勒索钱财 草菅人命 的实质</text><path d="M120.2 70.58C121.46 70.58 123.98 75.14 125.55 75.14" stroke="#c4c6e0" stroke-width="0.35" fill="none" stroke-linecap="round"/><path d="M125.55 75.14L144.29 75.14" stroke="#c4c6e0" stroke-width="0.35" fill="none"/><text x="126.5" y="73.91" font-size="1.84" fill="#3a4066">揭示庸医害人的本质</text><path d="M111.55 83.01C112.8 83.01 115.32 83.01 116.9 83.01" stroke="#c4c6e0" stroke-width="0.35" fill="none" stroke-linecap="round"/><path d="M116.9 83.01L152.94 83.01" stroke="#c4c6e0" stroke-width="0.35" fill="none"/><text x="117.84" y="81.78" font-size="1.82" fill="#3a4066">描述作者冲破束缚 追求新知识的强烈愿望</text><path d="M128.07 99.85C129.33 99.85 131.85 99.85 133.42 99.85" stroke="#c4c6e0" stroke-width="0.35" fill="none" stroke-linecap="round"/><path d="M133.42 99.85L157.67 99.85" stroke="#c4c6e0" stroke-width="0.35" fill="none"/><text x="134.37" y="98.73" font-size="2.1" fill="#3a4066">天真烂漫的童年生活</text><rect x="47.01" y="33.9" width="17.31" height="4.72" fill="#ffffff" rx="0.63" stroke="#d4d6ea" stroke-width="0.3"/><text x="55.67" y="37.02" font-size="2.1" fill="#3a4580" text-anchor="middle">《二十四孝图》</text><rect x="50.94" y="47.6" width="12.59" height="4.72" fill="#ffffff" rx="0.63" stroke="#d4d6ea" stroke-width="0.3"/><text x="57.24" y="50.69" font-size="2.01" fill="#3a4580" text-anchor="middle">《五猖会》</text><rect x="47.01" y="61.76" width="17.31" height="4.72" fill="#ffffff" rx="0.63" stroke="#d4d6ea" stroke-width="0.3"/><text x="55.67" y="64.88" font-size="2.1" fill="#3a4580" text-anchor="middle">《藤野先生》</text><rect x="49.37" y="75.93" width="14.48" height="4.72" fill="#ffffff" rx="0.63" stroke="#d4d6ea" stroke-width="0.3"/><text x="56.61" y="79.05" font-size="2.1" fill="#3a4580" text-anchor="middle">《范爱农》</text><rect x="50.16" y="92.61" width="13.69" height="4.72" fill="#ffffff" rx="0.63" stroke="#d4d6ea" stroke-width="0.3"/><text x="57.0" y="95.74" font-size="2.1" fill="#3a4580" text-anchor="middle">《无常》</text><rect x="100.53" y="32.33" width="16.53" height="4.72" fill="#ffffff" rx="0.63" stroke="#d4d6ea" stroke-width="0.3"/><text x="108.79" y="35.45" font-size="2.1" fill="#3a4580" text-anchor="middle">《狗·猫·鼠》</text><rect x="100.53" y="53.11" width="21.25" height="4.72" fill="#ffffff" rx="0.63" stroke="#d4d6ea" stroke-width="0.3"/><text x="111.15" y="56.23" font-size="2.1" fill="#3a4580" text-anchor="middle">《阿长与山海经》</text><rect x="101.0" y="68.22" width="19.2" height="4.72" fill="#ffffff" rx="0.63" stroke="#d4d6ea" stroke-width="0.3"/><text x="110.6" y="71.34" font-size="2.1" fill="#3a4580" text-anchor="middle">《父亲的病》</text><rect x="101.0" y="80.65" width="10.55" height="4.72" fill="#ffffff" rx="0.63" stroke="#d4d6ea" stroke-width="0.3"/><text x="106.27" y="83.73" font-size="2.01" fill="#3a4580" text-anchor="middle">《琐记》</text><rect x="100.53" y="97.49" width="27.55" height="4.72" fill="#ffffff" rx="0.63" stroke="#d4d6ea" stroke-width="0.3"/><text x="114.3" y="100.61" font-size="2.1" fill="#3a4580" text-anchor="middle">《从百草园到三味书屋》</text><rect x="71.09" y="62.23" width="22.82" height="7.08" fill="#3a4e9c" rx="3.46"/><text x="82.58" y="66.71" font-size="2.57" fill="#fff" text-anchor="middle" font-weight="bold">《朝花夕拾》</text></svg></div><div class="cap">《朝花夕拾》思维导图</div></div>
<div class="card" style="left:176.00px;top:415.00px"><div class="im"><svg viewBox="-1 -1 167 133" font-family='"Liberation Sans","Noto Sans CJK SC",sans-serif'><rect x="-1" y="-1" width="167" height="133" fill="#ffffff"/><path d="M1.34 0V132M10.26 0V132M19.19 0V132M28.11 0V132M37.04 0V132M45.96 0V132M54.89 0V132M63.81 0V132M72.74 0V132M81.66 0V132M90.59 0V132M99.51 0V132M108.44 0V132M117.36 0V132M126.29 0V132M135.21 0V132M144.14 0V132M153.06 0V132M161.99 0V132M0 3.98H165M0 12.91H165M0 21.83H165M0 30.76H165M0 39.68H165M0 48.61H165M0 57.53H165M0 66.46H165M0 75.38H165M0 84.31H165M0 93.23H165M0 102.16H165M0 111.08H165M0 120.01H165M0 128.93H165" stroke="#e3e7ee" stroke-width=".35" fill="none"/><path d="M67.68 34.2L67.68 94.02" stroke="#9aa8c8" stroke-width="0.45" fill="none"/><path d="M90.51 40.03L90.51 88.51" stroke="#9aa8c8" stroke-width="0.45" fill="none"/><path d="M67.68 64.27L68.94 64.27" stroke="#9aa8c8" stroke-width="0.45" fill="none"/><path d="M88.93 64.27L90.51 64.27" stroke="#9aa8c8" stroke-width="0.45" fill="none"/><path d="M65.8 34.2L67.68 34.2" stroke="#9aa8c8" stroke-width="0.45" fill="none"/><path d="M54.31 34.2L55.41 34.2" stroke="#9aa8c8" stroke-width="0.4" fill="none"/><path d="M65.8 57.34L67.68 57.34" stroke="#9aa8c8" stroke-width="0.45" fill="none"/><path d="M54.31 57.34L55.41 57.34" stroke="#9aa8c8" stroke-width="0.4" fill="none"/><path d="M90.51 40.03L92.55 40.03" stroke="#9aa8c8" stroke-width="0.45" fill="none"/><path d="M102.31 40.03L103.57 40.03" stroke="#9aa8c8" stroke-width="0.4" fill="none"/><path d="M90.51 58.44L92.55 58.44" stroke="#9aa8c8" stroke-width="0.45" fill="none"/><path d="M102.31 58.44L103.57 58.44" stroke="#9aa8c8" stroke-width="0.4" fill="none"/><path d="M54.31 22.71L54.31 45.22" stroke="#9aa8c8" stroke-width="0.35" fill="none"/><path d="M53.2 22.71L54.31 22.71" stroke="#9aa8c8" stroke-width="0.3" fill="none"/><text x="51.94" y="23.43" font-size="2.0" fill="#6a6a6a" text-anchor="end" opacity="0.85">思维导图的绘制方法与</text><path d="M53.2 27.43L54.31 27.43" stroke="#9aa8c8" stroke-width="0.3" fill="none"/><text x="51.94" y="28.15" font-size="2.0" fill="#6a6a6a" text-anchor="end" opacity="0.85">图的绘制方法与使</text><path d="M53.2 32.31L54.31 32.31" stroke="#9aa8c8" stroke-width="0.3" fill="none"/><text x="51.94" y="33.03" font-size="2.0" fill="#6a6a6a" text-anchor="end" opacity="0.85">制方法与使用技巧中心主题分支</text><path d="M53.2 39.71L54.31 39.71" stroke="#9aa8c8" stroke-width="0.3" fill="none"/><text x="51.94" y="40.43" font-size="2.0" fill="#6a6a6a" text-anchor="end" opacity="0.85">与使用技巧</text><path d="M53.2 45.22L54.31 45.22" stroke="#9aa8c8" stroke-width="0.3" fill="none"/><text x="51.94" y="45.94" font-size="2.0" fill="#6a6a6a" text-anchor="end" opacity="0.85">技巧中心主题分支关键词颜色图像联想发散逻</text><path d="M33.37 26.02L33.37 29.95" stroke="#9aa8c8" stroke-width="0.3" fill="none"/><text x="31.48" y="25.79" font-size="2.0" fill="#6a6a6a" text-anchor="end" opacity="0.85">绘制方法</text><text x="32.27" y="28.15" font-size="2.0" fill="#6a6a6a" text-anchor="end" opacity="0.85">与使用技巧</text><text x="31.48" y="30.67" font-size="2.0" fill="#6a6a6a" text-anchor="end" opacity="0.85">导图的绘制方法与使用技巧中心主</text><path d="M37.78 35.78L37.78 42.86" stroke="#9aa8c8" stroke-width="0.3" fill="none"/><path d="M30.69 34.52L30.69 39.24" stroke="#9aa8c8" stroke-width="0.3" fill="none"/><text x="29.91" y="36.18" font-size="2.0" fill="#6a6a6a" text-anchor="end" opacity="0.85">方法与使用</text><text x="29.59" y="38.39" font-size="2.0" fill="#6a6a6a" text-anchor="end" opacity="0.85">维导</text><text x="36.2" y="40.9" font-size="2.0" fill="#6a6a6a" text-anchor="end" opacity="0.85">的绘制方法与</text><text x="36.52" y="36.97" font-size="2.0" fill="#6a6a6a" text-anchor="end" opacity="0.85">制方</text><text x="39.35" y="43.58" font-size="2.0" fill="#6a6a6a" text-anchor="end" opacity="0.85">用技巧中心主题分支关键词颜色图像</text><path d="M54.31 49.47L54.31 65.37" stroke="#9aa8c8" stroke-width="0.35" fill="none"/><path d="M53.2 49.47L54.31 49.47" stroke="#9aa8c8" stroke-width="0.3" fill="none"/><text x="51.94" y="50.19" font-size="2.0" fill="#6a6a6a" text-anchor="end" opacity="0.85">导图的绘制方法与使用技巧中心主题分支关</text><path d="M53.2 52.31L54.31 52.31" stroke="#9aa8c8" stroke-width="0.3" fill="none"/><text x="51.94" y="53.03" font-size="2.0" fill="#6a6a6a" text-anchor="end" opacity="0.85">方法与使用技巧中心主题分支关键词颜色图像联想发</text><path d="M53.2 54.98L54.31 54.98" stroke="#9aa8c8" stroke-width="0.3" fill="none"/><text x="51.94" y="55.7" font-size="2.0" fill="#6a6a6a" text-anchor="end" opacity="0.85">技巧中心主题分支关键词颜色图像联想发散逻辑层级</text><path d="M53.2 57.5L54.31 57.5" stroke="#9aa8c8" stroke-width="0.3" fill="none"/><text x="51.94" y="58.22" font-size="2.0" fill="#6a6a6a" text-anchor="end" opacity="0.85">题分支关键词颜色图像</text><path d="M53.2 59.86L54.31 59.86" stroke="#9aa8c8" stroke-width="0.3" fill="none"/><text x="51.94" y="60.58" font-size="2.0" fill="#6a6a6a" text-anchor="end" opacity="0.85">词颜色图像联想发散逻</text><path d="M53.2 62.54L54.31 62.54" stroke="#9aa8c8" stroke-width="0.3" fill="none"/><text x="51.94" y="63.26" font-size="2.0" fill="#6a6a6a" text-anchor="end" opacity="0.85">联想发散逻辑层级整理归纳复习计划笔记效率工具思维</text><path d="M53.2 65.21L54.31 65.21" stroke="#9aa8c8" stroke-width="0.3" fill="none"/><text x="51.94" y="65.93" font-size="2.0" fill="#6a6a6a" text-anchor="end" opacity="0.85">辑层级整理归纳复习计划笔记效率工具思维导图的绘制</text><path d="M30.22 56.56L30.22 60.65" stroke="#9aa8c8" stroke-width="0.3" fill="none"/><text x="29.12" y="58.22" font-size="2.0" fill="#6a6a6a" text-anchor="end" opacity="0.85">图的绘制方法与使用技巧中心主</text><text x="28.33" y="60.58" font-size="2.0" fill="#6a6a6a" text-anchor="end" opacity="0.85">法与使用技巧中心主题分支关键</text><text x="39.35" y="70.34" font-size="2.0" fill="#6a6a6a" text-anchor="end" opacity="0.85">图的绘制</text><text x="51.94" y="73.96" font-size="2.0" fill="#6a6a6a" text-anchor="end" opacity="0.85">制方法与使用技巧中心</text><text x="29.91" y="72.69" font-size="1.97" fill="#6a6a6a" text-anchor="end" opacity="0.85">思维</text><text x="29.91" y="75.05" font-size="1.97" fill="#6a6a6a" text-anchor="end" opacity="0.85">的绘</text><text x="38.56" y="77.42" font-size="2.0" fill="#6a6a6a" text-anchor="end" opacity="0.85">导图</text><path d="M39.35 68.83L39.35 77.49" stroke="#9aa8c8" stroke-width="0.3" fill="none"/><path d="M30.69 71.19L30.69 75.13" stroke="#9aa8c8" stroke-width="0.3" fill="none"/><path d="M53.2 73.24L54.31 73.24" stroke="#9aa8c8" stroke-width="0.3" fill="none"/><path d="M54.31 70.41L54.31 94.02" stroke="#9aa8c8" stroke-width="0.35" fill="none"/><path d="M103.57 32.16L103.57 47.58" stroke="#9aa8c8" stroke-width="0.35" fill="none"/><path d="M103.57 32.16L104.83 32.16" stroke="#9aa8c8" stroke-width="0.3" fill="none"/><text x="105.46" y="32.88" font-size="2.0" fill="#6a6a6a" opacity="0.85">维导图的绘制方法</text><path d="M103.57 36.09L104.83 36.09" stroke="#9aa8c8" stroke-width="0.3" fill="none"/><text x="105.46" y="36.81" font-size="2.0" fill="#6a6a6a" opacity="0.85">绘制方法与使用技巧中</text><path d="M103.57 40.03L104.83 40.03" stroke="#9aa8c8" stroke-width="0.3" fill="none"/><text x="105.46" y="40.75" font-size="2.0" fill="#6a6a6a" opacity="0.85">与使用技巧中心主</text><path d="M103.57 43.96L104.83 43.96" stroke="#9aa8c8" stroke-width="0.3" fill="none"/><text x="105.46" y="44.68" font-size="2.0" fill="#6a6a6a" opacity="0.85">巧中心主题分支</text><path d="M103.57 47.58L104.83 47.58" stroke="#9aa8c8" stroke-width="0.3" fill="none"/><text x="105.46" y="48.3" font-size="2.0" fill="#6a6a6a" opacity="0.85">题分支关键词颜色图像联想发散</text><path d="M129.07 34.2L129.07 37.67" stroke="#9aa8c8" stroke-width="0.3" fill="none"/><text x="130.96" y="35.24" font-size="2.0" fill="#6a6a6a" opacity="0.85">导图的绘</text><text x="130.96" y="38.07" font-size="2.0" fill="#6a6a6a" opacity="0.85">方法与使用</text><path d="M123.56 42.23L123.56 45.54" stroke="#9aa8c8" stroke-width="0.3" fill="none"/><text x="125.14" y="43.27" font-size="2.0" fill="#6a6a6a" opacity="0.85">思维</text><text x="125.14" y="45.94" font-size="2.0" fill="#6a6a6a" opacity="0.85">绘制方法与使用技巧中心主</text><path d="M103.57 54.19L103.57 62.54" stroke="#9aa8c8" stroke-width="0.35" fill="none"/><path d="M103.57 54.19L104.83 54.19" stroke="#9aa8c8" stroke-width="0.3" fill="none"/><text x="105.46" y="54.91" font-size="2.0" fill="#6a6a6a" opacity="0.85">图的绘制方法与</text><path d="M103.57 62.54L104.83 62.54" stroke="#9aa8c8" stroke-width="0.3" fill="none"/><text x="105.46" y="63.26" font-size="2.0" fill="#6a6a6a" opacity="0.85">与使用技巧中心主</text><path d="M122.78 51.68L122.78 57.66" stroke="#9aa8c8" stroke-width="0.3" fill="none"/><text x="124.35" y="52.71" font-size="2.0" fill="#6a6a6a" opacity="0.85">维导</text><text x="124.35" y="55.07" font-size="2.0" fill="#6a6a6a" opacity="0.85">的绘</text><text x="124.35" y="58.06" font-size="2.0" fill="#6a6a6a" opacity="0.85">法与使用技巧中心主题分支关键词</text><path d="M125.45 60.33L125.45 65.21" stroke="#9aa8c8" stroke-width="0.3" fill="none"/><text x="127.81" y="61.3" font-size="1.81" fill="#6a6a6a" opacity="0.85">导图</text><text x="126.71" y="65.62" font-size="2.0" fill="#6a6a6a" opacity="0.85">制方法与使用</text><path d="M133.01 59.07L133.01 62.54" stroke="#9aa8c8" stroke-width="0.3" fill="none"/><text x="134.58" y="60.11" font-size="2.0" fill="#6a6a6a" opacity="0.85">思维</text><text x="134.58" y="62.94" font-size="2.0" fill="#6a6a6a" opacity="0.85">图的绘制方法</text><path d="M103.57 69.15L103.57 94.02" stroke="#9aa8c8" stroke-width="0.35" fill="none"/><path d="M103.57 69.15L104.83 69.15" stroke="#9aa8c8" stroke-width="0.3" fill="none"/><text x="105.46" y="69.87" font-size="2.0" fill="#6a6a6a" opacity="0.85">导图的绘制方法与使用技巧中心</text><path d="M103.57 75.44L104.83 75.44" stroke="#9aa8c8" stroke-width="0.3" fill="none"/><text x="105.46" y="76.16" font-size="2.0" fill="#6a6a6a" opacity="0.85">与使用技巧中心主题分支关</text><path d="M132.54 71.19L132.54 76.7" stroke="#9aa8c8" stroke-width="0.3" fill="none"/><text x="133.8" y="72.23" font-size="2.0" fill="#6a6a6a" opacity="0.85">维导图的绘</text><text x="133.8" y="74.75" font-size="2.0" fill="#6a6a6a" opacity="0.85">绘制方法与使用技巧中心主题分支</text><text x="133.8" y="77.11" font-size="2.0" fill="#6a6a6a" opacity="0.85">与使用技巧中心主</text><path d="M53.2 83.47L54.31 83.47" stroke="#9aa8c8" stroke-width="0.3" fill="none"/><text x="51.94" y="84.19" font-size="2.0" fill="#6a6a6a" text-anchor="end" opacity="0.85">的绘制方法与使</text><path d="M34.63 78.75L34.63 87.41" stroke="#9aa8c8" stroke-width="0.3" fill="none"/><text x="33.84" y="79.77" font-size="1.97" fill="#6a6a6a" text-anchor="end" opacity="0.85">维导</text><text x="33.84" y="82.3" font-size="2.0" fill="#6a6a6a" text-anchor="end" opacity="0.85">绘制方法与</text><text x="33.84" y="85.29" font-size="2.0" fill="#6a6a6a" text-anchor="end" opacity="0.85">法与使用技</text><text x="33.84" y="87.65" font-size="2.0" fill="#6a6a6a" text-anchor="end" opacity="0.85">图的绘制方</text><path d="M38.56 89.45L38.56 92.92" stroke="#9aa8c8" stroke-width="0.3" fill="none"/><text x="37.78" y="90.49" font-size="2.0" fill="#6a6a6a" text-anchor="end" opacity="0.85">制方法与使用技巧中心</text><text x="20.46" y="92.38" font-size="2.0" fill="#6a6a6a" text-anchor="end" opacity="0.85">导图的绘制方法</text><path d="M90.51 88.51L92.55 88.51" stroke="#9aa8c8" stroke-width="0.45" fill="none"/><path d="M102.31 88.51L103.57 88.51" stroke="#9aa8c8" stroke-width="0.4" fill="none"/><path d="M132.54 71.35L132.54 79.38" stroke="#9aa8c8" stroke-width="0.3" fill="none"/><text x="133.8" y="79.78" font-size="2.0" fill="#6a6a6a" opacity="0.85">的绘制方法与使用技</text><path d="M103.57 85.36L104.83 85.36" stroke="#9aa8c8" stroke-width="0.3" fill="none"/><text x="105.46" y="86.08" font-size="2.0" fill="#6a6a6a" opacity="0.85">方法与使用技巧</text><path d="M123.56 81.27L123.56 89.61" stroke="#9aa8c8" stroke-width="0.3" fill="none"/><text x="125.14" y="82.3" font-size="2.0" fill="#6a6a6a" opacity="0.85">思维</text><text x="125.14" y="84.98" font-size="2.0" fill="#6a6a6a" opacity="0.85">图的绘</text><text x="125.14" y="87.33" font-size="1.97" fill="#6a6a6a" opacity="0.85">制方</text><text x="125.14" y="90.01" font-size="1.97" fill="#6a6a6a" opacity="0.85">与使</text><text x="136.94" y="92.06" font-size="2.0" fill="#6a6a6a" opacity="0.85">绘制方法与使用</text><rect x="92.55" y="86.62" width="9.76" height="3.78" fill="#ffffff" rx="1.89" stroke="#8a9ac4" stroke-width="0.4"/><text x="97.43" y="89.23" font-size="2.0" fill="#556" text-anchor="middle">总结</text><rect x="55.41" y="32.31" width="10.39" height="3.78" fill="#ffffff" rx="1.89" stroke="#8a9ac4" stroke-width="0.4"/><text x="60.6" y="34.92" font-size="2.0" fill="#556" text-anchor="middle">工具</text><rect x="55.41" y="55.45" width="10.39" height="3.78" fill="#ffffff" rx="1.89" stroke="#8a9ac4" stroke-width="0.4"/><text x="60.6" y="58.06" font-size="2.0" fill="#556" text-anchor="middle">方法</text><rect x="92.55" y="38.14" width="9.76" height="3.78" fill="#ffffff" rx="1.89" stroke="#8a9ac4" stroke-width="0.4"/><text x="97.43" y="40.75" font-size="2.0" fill="#556" text-anchor="middle">原则</text><rect x="92.55" y="56.56" width="9.76" height="3.78" fill="#ffffff" rx="1.89" stroke="#8a9ac4" stroke-width="0.4"/><text x="97.43" y="59.16" font-size="2.0" fill="#556" text-anchor="middle">应用</text><rect x="68.94" y="62.22" width="19.99" height="4.25" fill="#2f4a9a" rx="2.2"/><text x="78.94" y="65.07" font-size="2.0" fill="#fff" text-anchor="middle" font-weight="bold">思维导图学习笔记</text></svg></div><div class="cap"></div></div>
<div class="card" style="left:356.20px;top:415.00px"><div class="im"><svg viewBox="-1 -1 167 133" font-family='"Liberation Sans","Noto Sans CJK SC",sans-serif'><rect x="-1" y="-1" width="167" height="133" fill="#ffffff"/><path d="M48.01 22.87L62.96 22.87" stroke="#7fd8e2" stroke-width="0.5" fill="none"/><path d="M62.96 22.87C68.47 22.87 70.52 49.16 73.67 63.32" stroke="#7fd8e2" stroke-width="0.5" fill="none" stroke-linecap="round"/><text x="51.16" y="21.13" font-size="2.17" fill="#222" font-weight="bold">图的绘制</text><path d="M48.01 22.87C47.54 22.87 47.85 12.17 45.65 12.17" stroke="#7fd8e2" stroke-width="0.4" fill="none" stroke-linecap="round"/><path d="M33.68 12.17L45.65 12.17" stroke="#7fd8e2" stroke-width="0.4" fill="none"/><text x="34.94" y="10.8" font-size="1.89" fill="#555">绘制方法</text><path d="M48.01 22.87C47.54 22.87 47.85 17.36 45.65 17.36" stroke="#7fd8e2" stroke-width="0.4" fill="none" stroke-linecap="round"/><path d="M33.68 17.36L45.65 17.36" stroke="#7fd8e2" stroke-width="0.4" fill="none"/><text x="34.94" y="15.99" font-size="1.89" fill="#555">导图的绘</text><path d="M48.01 22.87C47.54 22.87 47.85 22.4 45.65 22.4" stroke="#7fd8e2" stroke-width="0.4" fill="none" stroke-linecap="round"/><path d="M33.68 22.4L45.65 22.4" stroke="#7fd8e2" stroke-width="0.4" fill="none"/><text x="34.94" y="21.03" font-size="1.89" fill="#555">方法与使</text><path d="M48.01 22.87C47.54 22.87 47.85 27.28 45.65 27.28" stroke="#7fd8e2" stroke-width="0.4" fill="none" stroke-linecap="round"/><path d="M33.68 27.28L45.65 27.28" stroke="#7fd8e2" stroke-width="0.4" fill="none"/><text x="34.94" y="25.91" font-size="1.89" fill="#555">导图的绘</text><path d="M48.01 22.87C47.54 22.87 47.85 32.31 45.65 32.31" stroke="#7fd8e2" stroke-width="0.4" fill="none" stroke-linecap="round"/><path d="M33.68 32.31L45.65 32.31" stroke="#7fd8e2" stroke-width="0.4" fill="none"/><text x="34.94" y="30.95" font-size="1.89" fill="#555">方法与使</text><path d="M46.43 43.49L64.54 43.49" stroke="#7dbaf2" stroke-width="0.5" fill="none"/><path d="M64.54 43.49C70.05 43.49 68.0 49.16 71.15 63.32" stroke="#7dbaf2" stroke-width="0.5" fill="none" stroke-linecap="round"/><text x="50.06" y="41.8" font-size="2.3" fill="#222" font-weight="bold">图的绘制</text><path d="M46.43 43.49C46.28 43.49 46.59 40.97 44.39 40.97" stroke="#7dbaf2" stroke-width="0.4" fill="none" stroke-linecap="round"/><path d="M29.43 40.97L44.39 40.97" stroke="#7dbaf2" stroke-width="0.4" fill="none"/><text x="30.69" y="39.65" font-size="2.0" fill="#555">法与使用</text><path d="M46.43 43.49C46.28 43.49 46.59 46.01 44.39 46.01" stroke="#7dbaf2" stroke-width="0.4" fill="none" stroke-linecap="round"/><path d="M32.58 46.01L44.39 46.01" stroke="#7dbaf2" stroke-width="0.4" fill="none"/><text x="33.84" y="44.67" font-size="1.97" fill="#555">的绘制方</text><path d="M47.22 60.96L66.11 60.96" stroke="#f9a384" stroke-width="0.5" fill="none"/><path d="M66.11 60.96C68.0 60.96 68.94 63.8 70.83 64.43" stroke="#f9a384" stroke-width="0.5" fill="none" stroke-linecap="round"/><text x="50.37" y="59.38" font-size="2.17" fill="#222" font-weight="bold">图片网站</text><path d="M47.22 60.96C45.96 60.96 45.96 54.04 44.07 54.04" stroke="#f9a384" stroke-width="0.4" fill="none" stroke-linecap="round"/><path d="M35.1 54.04L44.07 54.04" stroke="#f9a384" stroke-width="0.4" fill="none"/><text x="36.99" y="52.65" font-size="1.84" fill="#555">图的绘</text><path d="M47.22 60.96C45.96 60.96 45.96 60.65 44.07 60.65" stroke="#f9a384" stroke-width="0.4" fill="none" stroke-linecap="round"/><path d="M33.53 60.65L44.07 60.65" stroke="#f9a384" stroke-width="0.4" fill="none"/><text x="35.42" y="59.32" font-size="2.0" fill="#555">思维导</text><path d="M47.22 60.96C45.96 60.96 45.96 67.73 44.07 67.73" stroke="#f9a384" stroke-width="0.4" fill="none" stroke-linecap="round"/><path d="M35.1 67.73L44.07 67.73" stroke="#f9a384" stroke-width="0.4" fill="none"/><text x="36.99" y="66.34" font-size="1.84" fill="#555">思维导</text><path d="M33.53 60.65C32.27 60.65 32.27 58.29 30.69 58.29" stroke="#f9a384" stroke-width="0.4" fill="none" stroke-linecap="round"/><path d="M18.1 58.29L30.69 58.29" stroke="#f9a384" stroke-width="0.4" fill="none"/><text x="19.68" y="56.92" font-size="1.9" fill="#555">Unsplash</text><path d="M33.53 60.65C32.27 60.65 32.27 63.01 30.69 63.01" stroke="#f9a384" stroke-width="0.4" fill="none" stroke-linecap="round"/><path d="M14.95 63.01L30.69 63.01" stroke="#f9a384" stroke-width="0.4" fill="none"/><text x="16.53" y="61.64" font-size="1.9" fill="#555">Pexels 图库</text><path d="M47.22 84.73L65.32 84.73" stroke="#b7a4f2" stroke-width="0.5" fill="none"/><path d="M65.32 84.73C68.0 84.26 68.94 75.6 69.73 67.26" stroke="#b7a4f2" stroke-width="0.5" fill="none" stroke-linecap="round"/><text x="51.16" y="83.05" font-size="1.89" fill="#222" font-weight="bold">二维码制作</text><path d="M47.22 84.73C45.96 84.73 46.28 79.54 44.39 79.54" stroke="#b7a4f2" stroke-width="0.4" fill="none" stroke-linecap="round"/><path d="M34.94 79.54L44.39 79.54" stroke="#b7a4f2" stroke-width="0.4" fill="none"/><text x="36.52" y="78.21" font-size="1.99" fill="#555">思维导</text><path d="M47.22 84.73C45.96 84.73 46.28 84.42 44.39 84.42" stroke="#b7a4f2" stroke-width="0.4" fill="none" stroke-linecap="round"/><path d="M34.94 84.42L44.39 84.42" stroke="#b7a4f2" stroke-width="0.4" fill="none"/><text x="36.52" y="83.09" font-size="2.0" fill="#555">维导图</text><path d="M47.22 84.73C45.96 84.73 46.28 89.14 44.39 89.14" stroke="#b7a4f2" stroke-width="0.4" fill="none" stroke-linecap="round"/><path d="M33.37 89.14L44.39 89.14" stroke="#b7a4f2" stroke-width="0.4" fill="none"/><text x="34.94" y="87.81" font-size="2.0" fill="#555">维导图</text><path d="M74.3 67.26C72.72 76.7 70.52 86.15 69.26 94.02" stroke="#93d884" stroke-width="0.5" fill="none" stroke-linecap="round"/><path d="M103.1 18.62L122.78 18.62" stroke="#7dbaf2" stroke-width="0.5" fill="none"/><path d="M94.44 63.32C97.28 46.01 97.59 18.62 103.1 18.62" stroke="#7dbaf2" stroke-width="0.5" fill="none" stroke-linecap="round"/><text x="107.82" y="16.86" font-size="2.1" fill="#222" font-weight="bold">图片排版工具</text><path d="M122.78 18.62C124.04 18.62 123.41 18.15 125.61 18.15" stroke="#7dbaf2" stroke-width="0.4" fill="none" stroke-linecap="round"/><path d="M125.61 18.15L143.24 18.15" stroke="#7dbaf2" stroke-width="0.4" fill="none"/><text x="127.5" y="16.82" font-size="2.0" fill="#555">绘制方法与</text><path d="M103.1 33.89L123.56 33.89" stroke="#f9a384" stroke-width="0.5" fill="none"/><path d="M99.48 63.32C102.31 46.01 97.59 33.89 103.1 33.89" stroke="#f9a384" stroke-width="0.5" fill="none" stroke-linecap="round"/><text x="107.82" y="32.13" font-size="2.1" fill="#222" font-weight="bold">图片处理工具</text><path d="M123.56 33.89C124.82 33.89 124.19 27.12 126.4 27.12" stroke="#f9a384" stroke-width="0.4" fill="none" stroke-linecap="round"/><path d="M126.4 27.12L139.78 27.12" stroke="#f9a384" stroke-width="0.4" fill="none"/><text x="127.5" y="25.79" font-size="2.0" fill="#555">方法与使用</text><path d="M123.56 33.89C124.82 33.89 124.19 32.0 126.4 32.0" stroke="#f9a384" stroke-width="0.4" fill="none" stroke-linecap="round"/><path d="M126.4 32.0L137.26 32.0" stroke="#f9a384" stroke-width="0.4" fill="none"/><text x="127.5" y="30.54" font-size="1.64" fill="#555">绘制方法与</text><path d="M123.56 33.89C124.82 33.89 124.19 36.25 126.4 36.25" stroke="#f9a384" stroke-width="0.4" fill="none" stroke-linecap="round"/><path d="M126.4 36.25L141.67 36.25" stroke="#f9a384" stroke-width="0.4" fill="none"/><text x="127.5" y="34.92" font-size="2.0" fill="#555">使用技巧中</text><path d="M123.56 33.89C124.82 33.89 124.19 40.66 126.4 40.66" stroke="#f9a384" stroke-width="0.4" fill="none" stroke-linecap="round"/><path d="M126.4 40.66L144.03 40.66" stroke="#f9a384" stroke-width="0.4" fill="none"/><text x="127.5" y="39.33" font-size="2.0" fill="#555">绘制方法与</text><path d="M103.1 60.96L123.56 60.96" stroke="#b7a4f2" stroke-width="0.5" fill="none"/><path d="M97.28 64.43C99.17 63.8 100.74 60.96 103.1 60.96" stroke="#b7a4f2" stroke-width="0.5" fill="none" stroke-linecap="round"/><text x="107.82" y="59.4" font-size="2.23" fill="#222" font-weight="bold">微信辅助平台</text><path d="M123.56 60.96C124.82 60.96 124.19 48.37 126.4 48.37" stroke="#b7a4f2" stroke-width="0.4" fill="none" stroke-linecap="round"/><path d="M126.4 48.37L141.67 48.37" stroke="#b7a4f2" stroke-width="0.4" fill="none"/><text x="127.5" y="47.01" font-size="1.92" fill="#555">法与使用 工具</text><path d="M123.56 60.96C124.82 60.96 124.19 53.25 126.4 53.25" stroke="#b7a4f2" stroke-width="0.4" fill="none" stroke-linecap="round"/><path d="M126.4 53.25L141.67 53.25" stroke="#b7a4f2" stroke-width="0.4" fill="none"/><text x="127.5" y="51.89" font-size="1.92" fill="#555">思维导图 工具</text><path d="M123.56 60.96C124.82 60.96 124.19 58.29 126.4 58.29" stroke="#b7a4f2" stroke-width="0.4" fill="none" stroke-linecap="round"/><path d="M126.4 58.29L141.67 58.29" stroke="#b7a4f2" stroke-width="0.4" fill="none"/><text x="127.5" y="56.93" font-size="1.92" fill="#555">制方法与 工具</text><path d="M123.56 60.96C124.82 60.96 124.19 63.32 126.4 63.32" stroke="#b7a4f2" stroke-width="0.4" fill="none" stroke-linecap="round"/><path d="M126.4 63.32L141.67 63.32" stroke="#b7a4f2" stroke-width="0.4" fill="none"/><text x="127.5" y="61.97" font-size="1.92" fill="#555">技巧中心 工具</text><path d="M123.56 60.96C124.82 60.96 124.19 68.2 126.4 68.2" stroke="#b7a4f2" stroke-width="0.4" fill="none" stroke-linecap="round"/><path d="M126.4 68.2L141.67 68.2" stroke="#b7a4f2" stroke-width="0.4" fill="none"/><text x="127.5" y="66.85" font-size="1.92" fill="#555">的绘制方 工具</text><path d="M123.56 60.96C124.82 60.96 124.19 73.24 126.4 73.24" stroke="#b7a4f2" stroke-width="0.4" fill="none" stroke-linecap="round"/><path d="M126.4 73.24L141.67 73.24" stroke="#b7a4f2" stroke-width="0.4" fill="none"/><text x="127.5" y="71.88" font-size="1.92" fill="#555">使用技巧 工具</text><path d="M95.39 67.26C96.33 76.7 97.59 86.15 98.54 94.02" stroke="#f79494" stroke-width="0.5" fill="none" stroke-linecap="round"/><path d="M99.8 67.26C100.74 79.85 100.74 91.66 103.57 91.66" stroke="#93d884" stroke-width="0.5" fill="none" stroke-linecap="round"/><path d="M103.57 91.66L123.56 91.66" stroke="#93d884" stroke-width="0.5" fill="none"/><text x="107.82" y="90.06" font-size="2.1" fill="#222" font-weight="bold">在线投票调查</text><path d="M123.56 91.66C124.82 91.66 124.19 81.11 126.4 81.11" stroke="#93d884" stroke-width="0.4" fill="none" stroke-linecap="round"/><path d="M126.4 81.11L142.77 81.11" stroke="#93d884" stroke-width="0.4" fill="none"/><text x="127.5" y="79.78" font-size="2.0" fill="#555">的绘制方</text><path d="M123.56 91.66C124.82 91.66 124.19 86.3 126.4 86.3" stroke="#93d884" stroke-width="0.4" fill="none" stroke-linecap="round"/><path d="M126.4 86.3L135.68 86.3" stroke="#93d884" stroke-width="0.4" fill="none"/><text x="127.5" y="84.83" font-size="1.57" fill="#555">绘制方法</text><path d="M123.56 91.66C124.82 91.66 124.19 91.34 126.4 91.34" stroke="#93d884" stroke-width="0.4" fill="none" stroke-linecap="round"/><path d="M126.4 91.34L135.68 91.34" stroke="#93d884" stroke-width="0.4" fill="none"/><text x="127.5" y="89.87" font-size="1.57" fill="#555">绘制方法</text><text x="84.45" y="65.89" font-size="2.75" fill="#222" text-anchor="middle" font-weight="bold">新媒体运营必备工具</text></svg></div><div class="cap"></div></div>
<div class="card" style="left:536.30px;top:415.00px"><div class="im"><svg viewBox="-1 -1 167 133" font-family='"Liberation Sans","Noto Sans CJK SC",sans-serif'><rect x="-1" y="-1" width="167" height="133" fill="#e9effb"/><path d="M0.0 12.48L0.0 5.08Q3.94 1.15 7.56 6.66Q11.81 7.44 12.28 10.28Q16.53 10.59 17.0 12.48Z" fill="#f4f7fd" opacity=".8"/><path d="M147.17 12.95Q147.96 10.91 151.9 10.91Q155.04 5.87 158.98 10.59Q164.49 10.28 166.06 12.95Z" fill="#f4f7fd" opacity=".8"/><path d="M62.18 47.43L66.11 47.43" stroke="#d9b92a" stroke-width="0.5" fill="none" stroke-linejoin="round"/><path d="M66.11 47.43C68.47 49.94 70.05 59.39 72.09 64.74" stroke="#d9b92a" stroke-width="0.5" fill="none" stroke-linecap="round"/><path d="M44.86 47.43C42.5 47.43 42.18 41.29 39.35 41.29" stroke="#e4d28a" stroke-width="0.4" fill="none" stroke-linecap="round"/><rect x="13.38" y="39.24" width="25.97" height="4.09" fill="#ffffff" rx="0.47" stroke="#e8d88e" stroke-width="0.4"/><text x="26.37" y="42.01" font-size="2.0" fill="#444" text-anchor="middle">维导图的绘制方法与使用</text><path d="M44.86 47.43C42.5 47.43 42.18 47.43 39.35 47.43" stroke="#e4d28a" stroke-width="0.4" fill="none" stroke-linecap="round"/><rect x="21.72" y="45.54" width="17.63" height="3.78" fill="#ffffff" rx="0.47" stroke="#e8d88e" stroke-width="0.4"/><text x="30.54" y="48.15" font-size="2.0" fill="#444" text-anchor="middle">绘制方法与使用</text><path d="M44.86 47.43C42.5 47.43 42.18 53.41 39.35 53.41" stroke="#e4d28a" stroke-width="0.4" fill="none" stroke-linecap="round"/><rect x="19.68" y="51.52" width="19.68" height="3.78" fill="#ffffff" rx="0.47" stroke="#e8d88e" stroke-width="0.4"/><text x="29.51" y="54.13" font-size="2.0" fill="#444" text-anchor="middle">制方法与使用技巧</text><rect x="44.86" y="44.59" width="17.31" height="5.67" fill="#d9b92a" rx="2.83"/><text x="53.52" y="48.22" font-size="2.2" fill="#fff" text-anchor="middle">公共课资料</text><path d="M71.15 70.09C70.05 79.85 67.68 88.19 63.28 88.19" stroke="#9cc456" stroke-width="0.5" fill="none" stroke-linecap="round"/><path d="M45.65 88.19C43.29 88.19 43.76 73.24 41.24 73.24" stroke="#b6d69c" stroke-width="0.4" fill="none" stroke-linecap="round"/><rect x="27.55" y="71.35" width="13.69" height="3.78" fill="#f4f9ec" rx="0.47" stroke="#b2d494" stroke-width="0.4"/><text x="34.39" y="73.96" font-size="2.0" fill="#444" text-anchor="middle">思维导图的</text><path d="M45.65 88.19C43.29 88.19 43.76 78.83 41.24 78.83" stroke="#b6d69c" stroke-width="0.4" fill="none" stroke-linecap="round"/><rect x="22.82" y="76.86" width="18.42" height="3.94" fill="#f4f9ec" rx="0.47" stroke="#b2d494" stroke-width="0.4"/><text x="32.03" y="79.55" font-size="2.0" fill="#444" text-anchor="middle">思维导图的绘制方</text><path d="M45.65 88.19C43.29 88.19 43.76 84.65 41.24 84.65" stroke="#b6d69c" stroke-width="0.4" fill="none" stroke-linecap="round"/><rect x="17.0" y="82.68" width="24.24" height="3.94" fill="#f4f9ec" rx="0.47" stroke="#b2d494" stroke-width="0.4"/><text x="29.12" y="85.37" font-size="2.0" fill="#444" text-anchor="middle">图的绘制方法与使用技巧</text><path d="M45.65 88.19C43.29 88.19 43.76 90.48 41.24 90.48" stroke="#b6d69c" stroke-width="0.4" fill="none" stroke-linecap="round"/><rect x="24.4" y="88.51" width="16.84" height="3.94" fill="#f4f9ec" rx="0.47" stroke="#b2d494" stroke-width="0.4"/><text x="32.82" y="91.2" font-size="2.0" fill="#444" text-anchor="middle">思维导图的绘制</text><rect x="45.65" y="85.36" width="17.63" height="5.67" fill="#8cba34" rx="2.83"/><text x="54.46" y="89.01" font-size="2.27" fill="#fff" text-anchor="middle">专业课资料</text><path d="M94.44 64.74C96.02 57.81 97.59 45.22 100.11 45.22" stroke="#3c7ad2" stroke-width="0.5" fill="none" stroke-linecap="round"/><path d="M100.11 45.22L102.63 45.22" stroke="#3c7ad2" stroke-width="0.5" fill="none"/><path d="M117.74 45.22C119.94 45.22 119.94 34.68 122.78 34.68" stroke="#a4c4ee" stroke-width="0.4" fill="none" stroke-linecap="round"/><path d="M117.74 45.22C119.94 45.22 119.94 45.38 122.78 45.38" stroke="#a4c4ee" stroke-width="0.4" fill="none" stroke-linecap="round"/><path d="M117.74 45.22C119.94 45.22 119.94 55.77 122.78 55.77" stroke="#a4c4ee" stroke-width="0.4" fill="none" stroke-linecap="round"/><rect x="122.78" y="32.94" width="15.74" height="3.46" fill="#ffffff" rx="0.47" stroke="#a6c6f0" stroke-width="0.4"/><text x="130.65" y="35.4" font-size="2.0" fill="#444" text-anchor="middle">维导图的绘制</text><rect x="122.78" y="43.65" width="13.38" height="3.46" fill="#ffffff" rx="0.47" stroke="#a6c6f0" stroke-width="0.4"/><text x="129.47" y="46.1" font-size="2.0" fill="#444" text-anchor="middle">绘制方法与</text><rect x="122.78" y="54.04" width="17.31" height="3.46" fill="#ffffff" rx="0.47" stroke="#a6c6f0" stroke-width="0.4"/><text x="131.43" y="56.49" font-size="2.0" fill="#444" text-anchor="middle">与使用技巧中心</text><path d="M136.16 45.38C137.89 45.38 138.2 40.34 140.56 40.34" stroke="#a4c4ee" stroke-width="0.4" fill="none" stroke-linecap="round"/><path d="M136.16 45.38C137.89 45.38 138.2 45.69 140.56 45.69" stroke="#a4c4ee" stroke-width="0.4" fill="none" stroke-linecap="round"/><path d="M136.16 45.38C137.89 45.38 138.2 50.73 140.56 50.73" stroke="#a4c4ee" stroke-width="0.4" fill="none" stroke-linecap="round"/><rect x="140.56" y="38.61" width="12.12" height="3.46" fill="#ffffff" rx="0.47" stroke="#a6c6f0" stroke-width="0.4"/><text x="146.62" y="41.06" font-size="2.0" fill="#444" text-anchor="middle">导图的绘</text><rect x="140.56" y="43.96" width="9.76" height="3.46" fill="#ffffff" rx="0.47" stroke="#a6c6f0" stroke-width="0.4"/><text x="145.44" y="46.41" font-size="2.0" fill="#444" text-anchor="middle">的绘制</text><rect x="140.56" y="49.0" width="9.76" height="3.46" fill="#ffffff" rx="0.47" stroke="#a6c6f0" stroke-width="0.4"/><text x="145.44" y="51.45" font-size="2.0" fill="#444" text-anchor="middle">法与使</text><rect x="102.63" y="42.39" width="15.11" height="5.67" fill="#3c7ad2" rx="2.83"/><text x="110.18" y="46.05" font-size="2.3" fill="#fff" text-anchor="middle">院校资料</text><path d="M95.23 68.05C97.59 69.15 99.95 69.46 102.63 69.46" stroke="#f17a52" stroke-width="0.5" fill="none" stroke-linecap="round"/><path d="M117.74 69.46C119.94 69.46 120.26 66.47 122.78 66.47" stroke="#f4b09a" stroke-width="0.4" fill="none" stroke-linecap="round"/><path d="M117.74 69.46C119.94 69.46 120.26 72.14 122.78 72.14" stroke="#f4b09a" stroke-width="0.4" fill="none" stroke-linecap="round"/><rect x="122.78" y="64.58" width="15.74" height="3.78" fill="#ffffff" rx="0.47" stroke="#f4b09a" stroke-width="0.4"/><text x="130.65" y="67.19" font-size="2.0" fill="#444" text-anchor="middle">思维导图的绘</text><rect x="122.78" y="70.41" width="12.28" height="3.62" fill="#ffffff" rx="0.47" stroke="#f4b09a" stroke-width="0.4"/><text x="128.92" y="72.94" font-size="2.0" fill="#444" text-anchor="middle">方法与使用</text><rect x="102.63" y="66.63" width="15.11" height="5.67" fill="#f17a52" rx="2.83"/><text x="110.18" y="70.14" font-size="1.89" fill="#fff" text-anchor="middle">专业课汇总</text><path d="M94.44 70.09C95.7 79.85 98.38 91.34 102.63 91.34" stroke="#f2c23e" stroke-width="0.5" fill="none" stroke-linecap="round"/><path d="M117.74 91.34C119.94 91.34 120.26 85.36 122.78 85.36" stroke="#f2d88a" stroke-width="0.4" fill="none" stroke-linecap="round"/><path d="M117.74 91.34C119.94 91.34 120.26 91.18 122.78 91.18" stroke="#f2d88a" stroke-width="0.4" fill="none" stroke-linecap="round"/><rect x="122.78" y="83.47" width="13.85" height="3.78" fill="#ffffff" rx="0.47" stroke="#f0d890" stroke-width="0.4"/><text x="129.7" y="86.08" font-size="2.0" fill="#444" text-anchor="middle">导图的绘制</text><rect x="122.78" y="89.3" width="13.85" height="3.78" fill="#ffffff" rx="0.47" stroke="#f0d890" stroke-width="0.4"/><text x="129.7" y="91.9" font-size="2.0" fill="#444" text-anchor="middle">绘制方法与</text><rect x="102.63" y="88.51" width="15.11" height="5.67" fill="#f2b920" rx="2.83"/><text x="110.18" y="92.17" font-size="2.3" fill="#fff" text-anchor="middle">历年真题</text><rect x="70.05" y="64.43" width="25.18" height="5.67" fill="#ffffff" rx="2.83"/><text x="82.64" y="68.3" font-size="2.9" fill="#4848cc" text-anchor="middle" font-weight="bold">考研资料汇总</text></svg></div><div class="cap"></div></div>
<div class="card" style="left:716.40px;top:415.00px"><div class="im"><svg viewBox="-1 -1 167 133" font-family='"Liberation Sans","Noto Sans CJK SC",sans-serif'><rect x="-1" y="-1" width="167" height="133" fill="#fbf2f4"/><path d="M83.43 57.81C82.64 37.35 78.7 10.59 68.0 9.33" stroke="#f5a9a2" stroke-width="0.5" fill="none" stroke-linecap="round"/><path d="M83.43 57.81C84.21 37.35 88.15 12.48 99.17 11.54" stroke="#f5a9a2" stroke-width="0.5" fill="none" stroke-linecap="round"/><path d="M83.43 57.81C82.8 45.22 78.7 30.27 68.0 29.48" stroke="#f9c878" stroke-width="0.5" fill="none" stroke-linecap="round"/><path d="M83.43 57.81C84.05 45.22 88.15 30.27 99.17 29.48" stroke="#f9c878" stroke-width="0.5" fill="none" stroke-linecap="round"/><path d="M83.43 57.81C82.17 53.09 75.55 51.52 68.0 51.2" stroke="#a2d892" stroke-width="0.5" fill="none" stroke-linecap="round"/><path d="M83.43 57.81C84.68 53.09 91.3 49.63 99.17 49.16" stroke="#a2d892" stroke-width="0.5" fill="none" stroke-linecap="round"/><path d="M73.04 67.26C71.15 68.05 70.05 69.15 68.0 69.15" stroke="#a2bcec" stroke-width="0.5" fill="none" stroke-linecap="round"/><path d="M85.79 68.05C88.93 71.98 94.44 72.77 99.17 72.77" stroke="#a2bcec" stroke-width="0.5" fill="none" stroke-linecap="round"/><path d="M83.11 68.2C81.06 79.85 75.55 90.08 68.0 90.55" stroke="#8f7fd0" stroke-width="0.5" fill="none" stroke-linecap="round"/><path d="M83.27 68.2C82.48 76.7 81.85 86.15 81.22 95.59" stroke="#9a6ac8" stroke-width="0.45" fill="none" stroke-linecap="round"/><path d="M83.43 68.2C83.74 76.7 84.68 86.15 85.31 95.59" stroke="#b25ab0" stroke-width="0.45" fill="none" stroke-linecap="round"/><path d="M83.58 68.2C85.0 76.7 87.36 86.15 89.09 95.59" stroke="#c060a0" stroke-width="0.45" fill="none" stroke-linecap="round"/><path d="M83.74 68.2C86.26 78.28 91.3 87.72 96.33 95.59" stroke="#7a6ad0" stroke-width="0.45" fill="none" stroke-linecap="round"/><path d="M51.16 90.55C49.58 90.55 48.17 83.16 45.96 83.16" stroke="#b2a4e4" stroke-width="0.4" fill="none" stroke-linecap="round"/><path d="M34.16 83.16L45.96 83.16" stroke="#b2a4e4" stroke-width="0.4" fill="none"/><text x="45.02" y="82.11" font-size="1.88" fill="#555" text-anchor="end">· 法与使用</text><path d="M51.16 90.55C49.58 90.55 48.17 87.09 45.96 87.09" stroke="#b2a4e4" stroke-width="0.4" fill="none" stroke-linecap="round"/><path d="M36.52 87.09L45.96 87.09" stroke="#b2a4e4" stroke-width="0.4" fill="none"/><text x="45.02" y="86.04" font-size="1.9" fill="#555" text-anchor="end">· 制方</text><path d="M51.16 90.55C49.58 90.55 48.17 91.03 45.96 91.03" stroke="#b2a4e4" stroke-width="0.4" fill="none" stroke-linecap="round"/><path d="M36.52 91.03L45.96 91.03" stroke="#b2a4e4" stroke-width="0.4" fill="none"/><text x="45.02" y="89.98" font-size="1.9" fill="#555" text-anchor="end">· 的绘</text><rect x="51.16" y="88.82" width="16.84" height="3.78" fill="#f5c6c6" rx="0.16"/><text x="59.58" y="91.5" font-size="2.2" fill="#333" text-anchor="middle" font-weight="bold">第九章 数据库</text><text x="117.27" y="89.85" font-size="1.54" fill="#555">· 数据结构</text><rect x="113.33" y="90.71" width="12.59" height="2.52" fill="#e4dcf4"/><path d="M49.11 9.33C47.54 9.33 46.28 7.13 44.07 7.13" stroke="#f5a9a2" stroke-width="0.4" fill="none" stroke-linecap="round"/><path d="M28.65 7.13L44.07 7.13" stroke="#f5a9a2" stroke-width="0.4" fill="none"/><text x="43.13" y="6.08" font-size="1.9" fill="#555" text-anchor="end">· 导图的绘制</text><path d="M49.11 9.33C47.54 9.33 46.28 11.06 44.07 11.06" stroke="#f5a9a2" stroke-width="0.4" fill="none" stroke-linecap="round"/><path d="M33.37 11.06L44.07 11.06" stroke="#f5a9a2" stroke-width="0.4" fill="none"/><text x="43.13" y="10.01" font-size="1.9" fill="#555" text-anchor="end">· 思维导</text><path d="M49.11 9.33C47.54 9.33 46.28 15.16 44.07 15.16" stroke="#f5a9a2" stroke-width="0.4" fill="none" stroke-linecap="round"/><path d="M29.43 15.16L44.07 15.16" stroke="#f5a9a2" stroke-width="0.4" fill="none"/><text x="43.13" y="14.11" font-size="1.9" fill="#555" text-anchor="end">· 法与使用技</text><path d="M49.11 29.48C47.54 29.48 46.28 21.77 44.07 21.77" stroke="#f9c878" stroke-width="0.4" fill="none" stroke-linecap="round"/><path d="M29.43 21.77L44.07 21.77" stroke="#f9c878" stroke-width="0.4" fill="none"/><text x="43.13" y="20.72" font-size="1.9" fill="#555" text-anchor="end">· 绘制方法与</text><path d="M49.11 29.48C47.54 29.48 46.28 25.39 44.07 25.39" stroke="#f9c878" stroke-width="0.4" fill="none" stroke-linecap="round"/><path d="M34.16 25.39L44.07 25.39" stroke="#f9c878" stroke-width="0.4" fill="none"/><text x="43.13" y="24.33" font-size="1.87" fill="#555" text-anchor="end">· 维导图</text><path d="M49.11 29.48C47.54 29.48 46.28 29.17 44.07 29.17" stroke="#f9c878" stroke-width="0.4" fill="none" stroke-linecap="round"/><path d="M29.43 29.17L44.07 29.17" stroke="#f9c878" stroke-width="0.4" fill="none"/><text x="43.13" y="28.11" font-size="1.9" fill="#555" text-anchor="end">· 方法与使用</text><path d="M49.11 29.48C47.54 29.48 46.28 33.1 44.07 33.1" stroke="#f9c878" stroke-width="0.4" fill="none" stroke-linecap="round"/><path d="M34.94 33.1L44.07 33.1" stroke="#f9c878" stroke-width="0.4" fill="none"/><text x="43.13" y="32.05" font-size="1.9" fill="#555" text-anchor="end">· 绘制</text><path d="M49.11 29.48C47.54 29.48 46.28 37.04 44.07 37.04" stroke="#f9c878" stroke-width="0.4" fill="none" stroke-linecap="round"/><path d="M32.58 37.04L44.07 37.04" stroke="#f9c878" stroke-width="0.4" fill="none"/><text x="43.13" y="35.99" font-size="1.9" fill="#555" text-anchor="end">· 图的绘</text><path d="M49.11 29.48C47.54 29.48 46.28 40.97 44.07 40.97" stroke="#f9c878" stroke-width="0.4" fill="none" stroke-linecap="round"/><path d="M31.8 40.97L44.07 40.97" stroke="#f9c878" stroke-width="0.4" fill="none"/><text x="43.13" y="39.92" font-size="1.9" fill="#555" text-anchor="end">· 维导图的</text><path d="M44.07 51.2C42.5 51.2 42.66 46.95 40.45 46.95" stroke="#a2d892" stroke-width="0.4" fill="none" stroke-linecap="round"/><path d="M20.78 46.95L40.45 46.95" stroke="#a2d892" stroke-width="0.4" fill="none"/><text x="39.51" y="45.9" font-size="1.9" fill="#555" text-anchor="end">· 图的绘制方法与使</text><path d="M44.07 51.2C42.5 51.2 42.66 50.89 40.45 50.89" stroke="#a2d892" stroke-width="0.4" fill="none" stroke-linecap="round"/><path d="M24.71 50.89L40.45 50.89" stroke="#a2d892" stroke-width="0.4" fill="none"/><text x="39.51" y="49.84" font-size="1.9" fill="#555" text-anchor="end">· 维导图的绘制</text><path d="M44.07 51.2C42.5 51.2 42.66 54.82 40.45 54.82" stroke="#a2d892" stroke-width="0.4" fill="none" stroke-linecap="round"/><path d="M30.22 54.82L40.45 54.82" stroke="#a2d892" stroke-width="0.4" fill="none"/><text x="39.51" y="53.77" font-size="1.9" fill="#555" text-anchor="end">· 法与使</text><path d="M44.07 51.2C42.5 51.2 42.66 58.76 40.45 58.76" stroke="#a2d892" stroke-width="0.4" fill="none" stroke-linecap="round"/><path d="M24.71 58.76L40.45 58.76" stroke="#a2d892" stroke-width="0.4" fill="none"/><text x="39.51" y="57.71" font-size="1.9" fill="#555" text-anchor="end">· 制方法与使用</text><path d="M51.16 69.15C49.58 69.15 48.17 65.05 45.96 65.05" stroke="#a2bcec" stroke-width="0.4" fill="none" stroke-linecap="round"/><path d="M29.43 65.05L45.96 65.05" stroke="#a2bcec" stroke-width="0.4" fill="none"/><text x="45.02" y="64.0" font-size="1.9" fill="#555" text-anchor="end">· 维导图的绘制</text><path d="M51.16 69.15C49.58 69.15 48.17 68.99 45.96 68.99" stroke="#a2bcec" stroke-width="0.4" fill="none" stroke-linecap="round"/><path d="M34.94 68.99L45.96 68.99" stroke="#a2bcec" stroke-width="0.4" fill="none"/><text x="45.02" y="67.94" font-size="1.9" fill="#555" text-anchor="end">· 法与使</text><path d="M51.16 69.15C49.58 69.15 48.17 72.93 45.96 72.93" stroke="#a2bcec" stroke-width="0.4" fill="none" stroke-linecap="round"/><path d="M35.73 72.93L45.96 72.93" stroke="#a2bcec" stroke-width="0.4" fill="none"/><text x="45.02" y="71.87" font-size="1.9" fill="#555" text-anchor="end">· 制方法</text><path d="M51.16 69.15C49.58 69.15 48.17 76.86 45.96 76.86" stroke="#a2bcec" stroke-width="0.4" fill="none" stroke-linecap="round"/><path d="M36.52 76.86L45.96 76.86" stroke="#a2bcec" stroke-width="0.4" fill="none"/><text x="45.02" y="75.81" font-size="1.9" fill="#555" text-anchor="end">· 的绘</text><path d="M117.74 11.54C119.31 11.54 120.1 7.13 122.3 7.13" stroke="#f5a9a2" stroke-width="0.4" fill="none" stroke-linecap="round"/><path d="M122.3 7.13L135.84 7.13" stroke="#f5a9a2" stroke-width="0.4" fill="none"/><text x="123.56" y="6.08" font-size="1.9" fill="#555">· 绘制方法</text><path d="M117.74 11.54C119.31 11.54 120.1 11.06 122.3 11.06" stroke="#f5a9a2" stroke-width="0.4" fill="none" stroke-linecap="round"/><path d="M122.3 11.06L135.05 11.06" stroke="#f5a9a2" stroke-width="0.4" fill="none"/><text x="123.56" y="10.01" font-size="1.9" fill="#555">· 导图的绘</text><path d="M117.74 11.54C119.31 11.54 120.1 15.16 122.3 15.16" stroke="#f5a9a2" stroke-width="0.4" fill="none" stroke-linecap="round"/><path d="M122.3 15.16L132.69 15.16" stroke="#f5a9a2" stroke-width="0.4" fill="none"/><text x="123.56" y="14.11" font-size="1.9" fill="#555">· 思维</text><path d="M117.74 11.54C119.31 11.54 120.1 19.09 122.3 19.09" stroke="#f5a9a2" stroke-width="0.4" fill="none" stroke-linecap="round"/><path d="M122.3 19.09L139.78 19.09" stroke="#f5a9a2" stroke-width="0.4" fill="none"/><text x="123.56" y="18.04" font-size="1.9" fill="#555">· 的绘制方法与</text><path d="M117.74 29.48C119.31 29.48 120.1 25.39 122.3 25.39" stroke="#f9c878" stroke-width="0.4" fill="none" stroke-linecap="round"/><path d="M122.3 25.39L132.69 25.39" stroke="#f9c878" stroke-width="0.4" fill="none"/><text x="123.56" y="24.34" font-size="1.9" fill="#555">· 导图</text><path d="M117.74 29.48C119.31 29.48 120.1 29.17 122.3 29.17" stroke="#f9c878" stroke-width="0.4" fill="none" stroke-linecap="round"/><path d="M122.3 29.17L134.27 29.17" stroke="#f9c878" stroke-width="0.4" fill="none"/><text x="123.56" y="28.11" font-size="1.9" fill="#555">· 绘制方</text><path d="M117.74 29.48C119.31 29.48 120.1 33.1 122.3 33.1" stroke="#f9c878" stroke-width="0.4" fill="none" stroke-linecap="round"/><path d="M122.3 33.1L131.12 33.1" stroke="#f9c878" stroke-width="0.4" fill="none"/><text x="123.56" y="32.05" font-size="1.9" fill="#555">· 导图</text><path d="M117.74 29.48C119.31 29.48 120.1 37.04 122.3 37.04" stroke="#f9c878" stroke-width="0.4" fill="none" stroke-linecap="round"/><path d="M122.3 37.04L134.27 37.04" stroke="#f9c878" stroke-width="0.4" fill="none"/><text x="123.56" y="35.99" font-size="1.9" fill="#555">· 制方法</text><path d="M112.55 49.16C114.12 49.16 115.38 43.33 117.58 43.33" stroke="#a2d892" stroke-width="0.4" fill="none" stroke-linecap="round"/><path d="M117.58 43.33L135.05 43.33" stroke="#a2d892" stroke-width="0.4" fill="none"/><text x="118.84" y="42.28" font-size="1.9" fill="#555">· 的绘制方法与</text><path d="M112.55 49.16C114.12 49.16 115.38 46.95 117.58 46.95" stroke="#a2d892" stroke-width="0.4" fill="none" stroke-linecap="round"/><path d="M117.58 46.95L127.18 46.95" stroke="#a2d892" stroke-width="0.4" fill="none"/><text x="118.84" y="45.9" font-size="1.9" fill="#555">· 制方</text><path d="M112.55 49.16C114.12 49.16 115.38 50.89 117.58 50.89" stroke="#a2d892" stroke-width="0.4" fill="none" stroke-linecap="round"/><path d="M117.58 50.89L128.76 50.89" stroke="#a2d892" stroke-width="0.4" fill="none"/><text x="118.84" y="49.84" font-size="1.9" fill="#555">· 图的绘</text><path d="M112.55 49.16C114.12 49.16 115.38 54.82 117.58 54.82" stroke="#a2d892" stroke-width="0.4" fill="none" stroke-linecap="round"/><path d="M117.58 54.82L133.48 54.82" stroke="#a2d892" stroke-width="0.4" fill="none"/><text x="118.84" y="53.77" font-size="1.9" fill="#555">· 思维导图的</text><path d="M112.55 49.16C114.12 49.16 115.38 58.76 117.58 58.76" stroke="#a2d892" stroke-width="0.4" fill="none" stroke-linecap="round"/><path d="M117.58 58.76L131.91 58.76" stroke="#a2d892" stroke-width="0.4" fill="none"/><text x="118.84" y="57.71" font-size="1.9" fill="#555">· 的绘制方</text><path d="M121.99 72.77C123.56 72.77 124.82 65.05 127.03 65.05" stroke="#a2bcec" stroke-width="0.4" fill="none" stroke-linecap="round"/><path d="M127.03 65.05L138.99 65.05" stroke="#a2bcec" stroke-width="0.4" fill="none"/><text x="128.29" y="64.0" font-size="1.9" fill="#555">· 导图的</text><path d="M121.99 72.77C123.56 72.77 124.82 68.99 127.03 68.99" stroke="#a2bcec" stroke-width="0.4" fill="none" stroke-linecap="round"/><path d="M127.03 68.99L138.99 68.99" stroke="#a2bcec" stroke-width="0.4" fill="none"/><text x="128.29" y="67.94" font-size="1.9" fill="#555">· 制方法</text><path d="M121.99 72.77C123.56 72.77 124.82 72.93 127.03 72.93" stroke="#a2bcec" stroke-width="0.4" fill="none" stroke-linecap="round"/><path d="M127.03 72.93L139.78 72.93" stroke="#a2bcec" stroke-width="0.4" fill="none"/><text x="128.29" y="71.87" font-size="1.9" fill="#555">· 图的绘制</text><path d="M121.99 72.77C123.56 72.77 124.82 76.86 127.03 76.86" stroke="#a2bcec" stroke-width="0.4" fill="none" stroke-linecap="round"/><path d="M127.03 76.86L138.99 76.86" stroke="#a2bcec" stroke-width="0.4" fill="none"/><text x="128.29" y="75.81" font-size="1.9" fill="#555">· 思维导</text><path d="M121.99 72.77C123.56 72.77 124.82 80.48 127.03 80.48" stroke="#a2bcec" stroke-width="0.4" fill="none" stroke-linecap="round"/><path d="M127.03 80.48L139.78 80.48" stroke="#a2bcec" stroke-width="0.4" fill="none"/><text x="128.29" y="79.43" font-size="1.9" fill="#555">· 导图的绘</text><path d="M121.99 72.77C123.56 72.77 124.82 84.42 127.03 84.42" stroke="#a2bcec" stroke-width="0.4" fill="none" stroke-linecap="round"/><path d="M127.03 84.42L135.05 84.42" stroke="#a2bcec" stroke-width="0.4" fill="none"/><text x="128.29" y="83.32" font-size="1.77" fill="#555">· 制方</text><rect x="49.11" y="7.44" width="18.89" height="3.78" fill="#f5c6c6" rx="0.16"/><text x="58.56" y="10.04" font-size="1.99" fill="#333" text-anchor="middle" font-weight="bold">第一章 计算机概述</text><rect x="49.11" y="27.59" width="18.89" height="3.78" fill="#f5c6c6" rx="0.16"/><text x="58.56" y="30.19" font-size="1.99" fill="#333" text-anchor="middle" font-weight="bold">第二章 数制与编码</text><rect x="44.07" y="49.31" width="23.93" height="3.78" fill="#f5c6c6" rx="0.16"/><text x="56.04" y="51.95" font-size="2.09" fill="#333" text-anchor="middle" font-weight="bold">第三章 计算机硬件系统</text><rect x="51.16" y="67.26" width="16.84" height="3.78" fill="#f5c6c6" rx="0.16"/><text x="59.58" y="69.86" font-size="1.98" fill="#333" text-anchor="middle" font-weight="bold">第四章 操作系统</text><rect x="99.17" y="9.65" width="18.57" height="3.78" fill="#f5c6c6" rx="0.16"/><text x="108.45" y="12.33" font-size="2.2" fill="#333" text-anchor="middle" font-weight="bold">第五章 办公软件</text><rect x="99.17" y="27.59" width="18.57" height="3.78" fill="#f5c6c6" rx="0.16"/><text x="108.45" y="30.18" font-size="1.95" fill="#333" text-anchor="middle" font-weight="bold">第六章 多媒体技术</text><rect x="99.17" y="47.27" width="13.38" height="3.78" fill="#f5c6c6" rx="0.16"/><text x="105.86" y="49.9" font-size="2.07" fill="#333" text-anchor="middle" font-weight="bold">第七章 网络</text><rect x="99.17" y="70.88" width="22.82" height="3.78" fill="#f5c6c6" rx="0.16"/><text x="110.58" y="73.48" font-size="1.98" fill="#333" text-anchor="middle" font-weight="bold">第八章 信息安全与道德</text><path d="M75.24 57.5L91.61 57.5L94.13 59.7L94.13 66.0L91.61 68.2L75.24 68.2L72.72 66.0L72.72 59.7Z" stroke="#f0a8a8" stroke-width="0.2" fill="#f0a8a8" stroke-linejoin="round"/><text x="83.43" y="63.66" font-size="2.25" fill="#333" text-anchor="middle" font-weight="bold">《计算机基础》</text></svg></div><div class="cap"></div></div>
<div class="card" style="left:896.70px;top:415.00px"><div class="im"><svg viewBox="-1 -1 167 133" font-family='"Liberation Sans","Noto Sans CJK SC",sans-serif'><rect x="-1" y="-1" width="167" height="133" fill="#2d2933"/><path d="M73.88 62.17L73.67 60.54L73.37 58.95L72.99 57.41L72.51 55.94L71.95 54.54L71.31 53.24L70.6 52.03L69.8 50.93L68.93 49.95L67.98 49.11L66.97 48.42L65.89 47.88L64.75 47.52L63.56 47.35L63.52 47.82L64.62 48.03L65.67 48.41L66.64 48.95L67.56 49.63L68.4 50.45L69.19 51.4L69.9 52.47L70.54 53.64L71.1 54.9L71.59 56.26L71.99 57.68L72.32 59.16L72.56 60.7L72.71 62.27Z" stroke="#df7fb0" stroke-width="0.1" fill="#df7fb0" stroke-linejoin="round"/><path d="M91.36 62.26L91.54 60.01L91.8 57.82L92.16 55.69L92.59 53.65L93.12 51.71L93.74 49.9L94.44 48.22L95.25 46.69L96.14 45.33L97.13 44.15L98.22 43.16L99.41 42.39L100.71 41.84L102.13 41.52L102.07 41.05L100.56 41.33L99.15 41.88L97.85 42.66L96.65 43.67L95.57 44.89L94.58 46.29L93.7 47.85L92.92 49.58L92.24 51.43L91.65 53.41L91.15 55.49L90.74 57.65L90.42 59.89L90.18 62.18Z" stroke="#df7fb0" stroke-width="0.1" fill="#df7fb0" stroke-linejoin="round"/><path d="M93.31 64.86L93.86 64.62L94.38 64.39L94.87 64.18L95.34 63.98L95.79 63.8L96.22 63.63L96.65 63.49L97.07 63.36L97.49 63.24L97.91 63.14L98.35 63.06L98.79 63.0L99.26 62.96L99.74 62.93L99.74 62.46L99.24 62.45L98.75 62.46L98.28 62.49L97.81 62.54L97.36 62.61L96.91 62.7L96.45 62.81L96.0 62.93L95.53 63.07L95.06 63.22L94.56 63.39L94.05 63.58L93.51 63.77L92.95 63.99Z" stroke="#df7fb0" stroke-width="0.1" fill="#df7fb0" stroke-linejoin="round"/><path d="M72.39 69.27L72.24 71.47L71.99 73.58L71.66 75.61L71.24 77.53L70.75 79.33L70.18 81.01L69.54 82.55L68.83 83.94L68.07 85.17L67.25 86.23L66.38 87.11L65.46 87.8L64.5 88.3L63.5 88.59L63.57 89.06L64.69 88.79L65.76 88.29L66.78 87.59L67.75 86.68L68.66 85.59L69.51 84.33L70.28 82.9L70.99 81.33L71.63 79.61L72.19 77.77L72.67 75.81L73.06 73.75L73.36 71.59L73.57 69.34Z" stroke="#df7fb0" stroke-width="0.1" fill="#df7fb0" stroke-linejoin="round"/><path d="M90.49 69.35L90.73 71.58L91.03 73.73L91.4 75.77L91.84 77.69L92.35 79.5L92.92 81.17L93.56 82.69L94.26 84.07L95.02 85.28L95.84 86.31L96.73 87.15L97.67 87.8L98.67 88.23L99.72 88.43L99.76 87.96L98.84 87.73L97.96 87.3L97.13 86.68L96.35 85.87L95.62 84.87L94.94 83.7L94.31 82.36L93.75 80.87L93.24 79.23L92.79 77.46L92.41 75.57L92.1 73.57L91.85 71.46L91.67 69.26Z" stroke="#df7fb0" stroke-width="0.1" fill="#df7fb0" stroke-linejoin="round"/><path d="M49.84 38.45L51.73 38.45L51.73 56.56L49.84 56.56" stroke="#a8608c" stroke-width="0.4" fill="none" stroke-linejoin="round"/><path d="M51.73 47.58L54.09 47.58" stroke="#a8608c" stroke-width="0.4" fill="none"/><text x="45.43" y="39.21" font-size="2.1" fill="#f0f0f0">H5</text><rect x="42.44" y="37.67" width="1.42" height="1.57" fill="#ffffff"/><text x="42.29" y="57.21" font-size="1.38" fill="#f0f0f0">今日头条</text><rect x="39.3" y="55.93" width="1.42" height="1.57" fill="#ffffff"/><path d="M39.93 32.16L41.5 32.16L41.5 44.43L39.93 44.43" stroke="#a8608c" stroke-width="0.4" fill="none" stroke-linejoin="round"/><path d="M41.5 38.45L42.44 38.45" stroke="#a8608c" stroke-width="0.4" fill="none"/><text x="38.04" y="32.84" font-size="1.89" fill="#f0f0f0" text-anchor="end">炫酷模板</text><text x="38.04" y="39.12" font-size="1.85" fill="#f0f0f0" text-anchor="end">策划病毒海报, 朋友圈文字转发量</text><text x="37.56" y="45.15" font-size="2.0" fill="#f0f0f0" text-anchor="end">互动游戏</text><path d="M36.78 50.73L38.35 50.73L38.35 62.54L36.78 62.54" stroke="#a8608c" stroke-width="0.4" fill="none" stroke-linejoin="round"/><path d="M38.35 56.71L39.3 56.71" stroke="#a8608c" stroke-width="0.4" fill="none"/><text x="35.2" y="51.39" font-size="1.84" fill="#f0f0f0" text-anchor="end">信息流</text><text x="35.2" y="57.35" font-size="1.77" fill="#f0f0f0" text-anchor="end">软文投放</text><text x="35.2" y="63.2" font-size="1.84" fill="#f0f0f0" text-anchor="end">视频推广合作</text><path d="M49.84 79.54L51.73 79.54L51.73 88.82L49.84 88.82" stroke="#a8608c" stroke-width="0.4" fill="none" stroke-linejoin="round"/><rect x="52.2" y="88.04" width="1.42" height="1.57" fill="#ffffff"/><text x="44.65" y="80.22" font-size="1.87" fill="#f0f0f0">KOL</text><rect x="41.18" y="78.75" width="1.42" height="1.57" fill="#ffffff"/><text x="44.65" y="89.39" font-size="1.57" fill="#f0f0f0">社群</text><rect x="41.18" y="88.04" width="1.42" height="1.57" fill="#ffffff"/><path d="M38.67 76.39L40.24 76.39L40.24 82.68L38.67 82.68" stroke="#a8608c" stroke-width="0.4" fill="none" stroke-linejoin="round"/><text x="36.78" y="77.11" font-size="2.0" fill="#f0f0f0" text-anchor="end">微博</text><text x="36.78" y="83.22" font-size="1.51" fill="#f0f0f0" text-anchor="end">B站</text><rect x="54.09" y="44.43" width="9.44" height="6.3" fill="#2c2340" rx="0.63" stroke="#70507e" stroke-width="0.5"/><text x="58.81" y="48.41" font-size="2.3" fill="#f0f0f0" text-anchor="middle">运营</text><rect x="116.74" y="40.5" width="1.42" height="1.57" fill="#ffffff"/><path d="M120.83 31.84L118.94 31.84L118.94 50.42L120.83 50.42" stroke="#a8608c" stroke-width="0.4" fill="none" stroke-linejoin="round"/><path d="M118.94 38.14L120.83 38.14" stroke="#a8608c" stroke-width="0.4" fill="none"/><path d="M118.94 44.12L120.83 44.12" stroke="#a8608c" stroke-width="0.4" fill="none"/><text x="122.56" y="32.41" font-size="1.57" fill="#f0f0f0">表单</text><text x="122.56" y="38.71" font-size="1.57" fill="#f0f0f0">电话</text><text x="122.56" y="44.62" font-size="1.38" fill="#f0f0f0">在线咨询</text><text x="122.56" y="50.92" font-size="1.84" fill="#f0f0f0">销售线索跟进</text><rect x="112.49" y="61.91" width="1.42" height="1.57" fill="#ffffff"/><rect x="109.34" y="87.41" width="1.42" height="1.57" fill="#ffffff"/><path d="M113.91 78.75L112.02 78.75L112.02 93.23L113.91 93.23" stroke="#a8608c" stroke-width="0.4" fill="none" stroke-linejoin="round"/><text x="115.17" y="79.37" font-size="1.73" fill="#f0f0f0">渠道</text><rect x="120.36" y="77.96" width="1.42" height="1.57" fill="#ffffff"/><path d="M124.45 72.45L122.56 72.45L122.56 85.05L124.45 85.05" stroke="#a8608c" stroke-width="0.4" fill="none" stroke-linejoin="round"/><path d="M122.56 78.75L124.45 78.75" stroke="#a8608c" stroke-width="0.4" fill="none"/><text x="126.18" y="72.99" font-size="1.51" fill="#f0f0f0">月总成交额提升</text><text x="126.18" y="79.43" font-size="1.89" fill="#f0f0f0">线上线下联动</text><rect x="138.46" y="77.96" width="1.42" height="1.57" fill="#ffffff"/><text x="126.18" y="85.32" font-size="1.65" fill="#f0f0f0">会员体系</text><rect x="134.53" y="83.94" width="1.42" height="1.57" fill="#ffffff"/><path d="M126.03 90.55L124.14 90.55L124.14 94.49" stroke="#a8608c" stroke-width="0.4" fill="none" stroke-linejoin="round"/><text x="128.07" y="91.27" font-size="2.0" fill="#f0f0f0">复购</text><rect x="133.74" y="89.77" width="1.42" height="1.57" fill="#ffffff"/><rect x="102.1" y="38.14" width="14.17" height="6.3" fill="#2c2340" rx="0.63" stroke="#70507e" stroke-width="0.5"/><text x="109.18" y="42.12" font-size="2.3" fill="#f0f0f0" text-anchor="middle">线索转化</text><rect x="99.74" y="59.39" width="12.28" height="6.61" fill="#2c2340" rx="0.63" stroke="#70507e" stroke-width="0.5"/><text x="105.88" y="63.52" font-size="2.3" fill="#f0f0f0" text-anchor="middle">销售额</text><rect x="54.41" y="85.83" width="9.13" height="6.77" fill="#2c2340" rx="0.63" stroke="#70507e" stroke-width="0.5"/><text x="58.97" y="90.05" font-size="2.3" fill="#f0f0f0" text-anchor="middle">传播</text><rect x="99.74" y="85.05" width="9.13" height="6.61" fill="#2c2340" rx="0.63" stroke="#70507e" stroke-width="0.5"/><text x="104.3" y="89.18" font-size="2.3" fill="#f0f0f0" text-anchor="middle">成交</text><rect x="70.62" y="61.75" width="22.82" height="7.87" fill="#2a2342" rx="0.63" stroke="#4e4870" stroke-width="0.6"/><text x="82.03" y="66.8" font-size="3.1" fill="#fff" text-anchor="middle" font-weight="bold">新品牌推广</text></svg></div><div class="cap"></div></div>
</body>
</html>
